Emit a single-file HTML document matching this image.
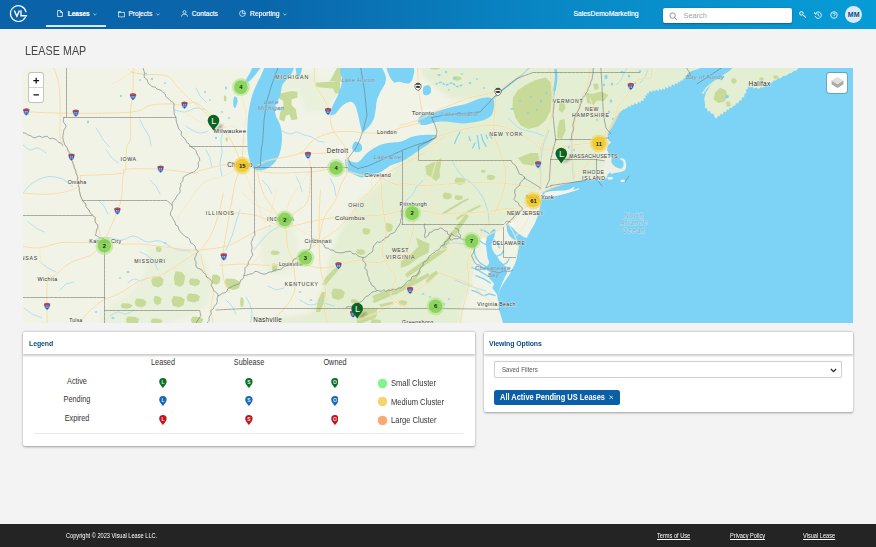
<!DOCTYPE html>
<html>
<head>
<meta charset="utf-8">
<title>Lease Map</title>
<style>
*{box-sizing:border-box;margin:0;padding:0}
html,body{width:876px;height:547px;overflow:hidden;background:#f3f3f3;font-family:"Liberation Sans",sans-serif;color:#333}
.abs{position:absolute}
#hdr{position:absolute;left:0;top:0;width:876px;height:28.5px;background:linear-gradient(90deg,#0a62a8 0%,#0a66ab 30%,#098ac7 66%,#079cd6 100%)}
.nv{position:absolute;top:0;height:28px;line-height:27.5px;color:#fff;font-size:6.6px;white-space:nowrap;-webkit-text-stroke:.18px #fff}
.nv b{font-size:6.5px}
#hdr svg{position:absolute;overflow:visible}
#uline{position:absolute;left:45.5px;top:25.2px;width:60.5px;height:1.8px;background:#d4e8f6}
#search{position:absolute;left:662.8px;top:8.3px;width:129.2px;height:15.1px;background:#fff;border-radius:2px;box-shadow:0 0.5px 1.5px rgba(0,40,90,.45)}
#search span{position:absolute;left:20.8px;top:0;line-height:16.4px;font-size:7.3px;color:#a2a2a2}
#avatar{position:absolute;left:844.9px;top:5.5px;width:17.6px;height:17.6px;border-radius:50%;background:#d9ebf9;color:#0b4a86;font-weight:bold;font-size:7px;line-height:17.6px;text-align:center;letter-spacing:.1px}
#title{position:absolute;left:25.4px;top:43.3px;font-size:13px;line-height:16px;color:#454545;white-space:nowrap;transform:scaleX(.822);transform-origin:0 0;letter-spacing:.1px}
#map{position:absolute;left:23px;top:67.7px;width:830px;height:255px;overflow:hidden;background:#f2f3e9}
#map svg{position:absolute;left:0;top:0}
.card{position:absolute;background:#fff;box-shadow:0 .6px 2.4px rgba(0,0,0,.36);border-radius:2px}
.chead{position:absolute;left:0;top:0;right:0;height:22.3px;border-radius:2px 2px 0 0;box-shadow:0 1.1px 2.2px rgba(0,0,0,.2);background:#fff}
.ctitle{position:absolute;top:0;line-height:23.7px;font-size:7.2px;font-weight:bold;color:#0d4c82;white-space:nowrap;letter-spacing:-.1px;transform:scaleX(.965);transform-origin:0 50%}
.lg{position:absolute;font-size:8.2px;line-height:11.2px;color:#333;white-space:nowrap;transform:translateX(-50%) scaleX(.89)}
.ll{position:absolute;font-size:8.2px;line-height:11.2px;color:#333;white-space:nowrap;transform:scaleX(.925);transform-origin:0 50%}
.dot{position:absolute;width:9px;height:9px;border-radius:50%}
#sel{position:absolute;left:10.4px;top:29.3px;width:347.6px;height:16.9px;border:0.8px solid #cfcfcf;border-radius:2px;background:#fff;box-shadow:0 0 1px rgba(0,0,0,.12)}
#sel span{position:absolute;left:6.4px;top:0;line-height:15.3px;font-size:6.7px;color:#555;transform:scaleX(.92);transform-origin:0 50%}
#chip{position:absolute;left:10.2px;top:57.9px;width:126px;height:15px;border-radius:2.5px;background:#0a5fa6;color:#fff;font-weight:bold;font-size:8.05px;line-height:15px;white-space:nowrap}
#chip span{position:absolute;left:5.4px;top:0;font-size:8.6px;transform:scaleX(.868);transform-origin:0 50%}
#ftr{position:absolute;left:0;top:524px;width:876px;height:23px;background:#242424;color:#fff;font-size:6.6px;line-height:23.6px}
#ftr span{position:absolute;top:0;white-space:nowrap;transform:scaleX(.855);transform-origin:0 50%}
#ftr u{text-decoration:underline;text-underline-offset:0.5px}
</style>
</head>
<body>

<div id="hdr">
  <!-- logo -->
  <svg style="left:8.8px;top:4.1px" width="19" height="19" viewBox="0 0 20 20">
    <path d="M17.2 13.9 A8.3 8.3 0 1 1 17.9 8.2" fill="none" stroke="#fff" stroke-width="1.25" stroke-linecap="round"/>
    <path d="M5.6 6.9 L8.3 12.9 L11 6.9" fill="none" stroke="#fff" stroke-width="1.45" stroke-linejoin="miter"/>
    <path d="M12.6 6.6 V12.4 H19" fill="none" stroke="#fff" stroke-width="1.45"/>
  </svg>
  <div id="uline"></div>
  <!-- Leases -->
  <svg style="left:57.4px;top:10.3px" width="6" height="7" viewBox="0 0 6 7"><path d="M0.6 0.5 H3.5 L5.4 2.4 V6.5 H0.6 Z M3.4 0.6 V2.5 H5.3" fill="none" stroke="#fff" stroke-width=".75" stroke-linejoin="round"/></svg>
  <div class="nv" style="left:67.7px"><b>Leases</b></div>
  <svg style="left:92.9px;top:12.7px" width="4" height="3" viewBox="0 0 4 3"><path d="M0.4 0.6 L2 2.2 L3.6 0.6" fill="none" stroke="#fff" stroke-width=".6"/></svg>
  <!-- Projects -->
  <svg style="left:117.8px;top:10.6px" width="7" height="6.4" viewBox="0 0 7 6.4"><path d="M0.5 0.6 H2.6 L3.3 1.4 H6.5 V5.9 H0.5 Z M0.5 1.5 H3.3" fill="none" stroke="#fff" stroke-width=".7" stroke-linejoin="round"/></svg>
  <div class="nv" style="left:128.4px">Projects</div>
  <svg style="left:156.1px;top:12.7px" width="4" height="3" viewBox="0 0 4 3"><path d="M0.4 0.6 L2 2.2 L3.6 0.6" fill="none" stroke="#fff" stroke-width=".6"/></svg>
  <!-- Contacts -->
  <svg style="left:180.6px;top:10.2px" width="7" height="7" viewBox="0 0 7 7"><circle cx="3.5" cy="2.1" r="1.5" fill="none" stroke="#fff" stroke-width=".7"/><path d="M0.6 6.6 V5.9 A2.2 1.8 0 0 1 2.8 4.3 H4.2 A2.2 1.8 0 0 1 6.4 5.9 V6.6" fill="none" stroke="#fff" stroke-width=".7"/></svg>
  <div class="nv" style="left:191.8px">Contacts</div>
  <!-- Reporting -->
  <svg style="left:238.7px;top:10.4px" width="7" height="7" viewBox="0 0 7 7"><circle cx="3.5" cy="3.5" r="2.9" fill="none" stroke="#fff" stroke-width=".7"/><path d="M3.5 0.6 V3.5 H6.4" fill="none" stroke="#fff" stroke-width=".7"/></svg>
  <div class="nv" style="left:249.7px;transform:scaleX(1.03);transform-origin:0 50%">Reporting</div>
  <svg style="left:282.9px;top:12.7px" width="4" height="3" viewBox="0 0 4 3"><path d="M0.4 0.6 L2 2.2 L3.6 0.6" fill="none" stroke="#fff" stroke-width=".6"/></svg>

  <div class="nv" style="left:573.5px;font-size:6.8px">SalesDemoMarketing</div>
  <div id="search">
    <svg style="left:6.6px;top:3.9px" width="9" height="9" viewBox="0 0 9 9"><circle cx="3.6" cy="3.6" r="2.7" fill="none" stroke="#777" stroke-width=".8"/><path d="M5.6 5.6 L7.7 7.7" stroke="#777" stroke-width=".9" stroke-linecap="round"/></svg>
    <span>Search</span>
  </div>
  <!-- key -->
  <svg style="left:799.4px;top:10.9px" width="8" height="8" viewBox="0 0 8 8"><circle cx="2.4" cy="2.4" r="1.75" fill="none" stroke="#fff" stroke-width="1"/><path d="M3.6 3.6 L6.9 6.9 M5.6 5.8 L6.6 4.8 M4.6 4.8 L5.4 4" stroke="#fff" stroke-width=".9" fill="none"/></svg>
  <!-- history -->
  <svg style="left:814.4px;top:10.6px" width="8.4" height="8.4" viewBox="0 0 8.4 8.4"><path d="M1.4 2.6 A3.2 3.2 0 1 1 1.1 5" fill="none" stroke="#fff" stroke-width=".8"/><path d="M0.4 0.9 L1.1 3.2 L3.3 2.6" fill="none" stroke="#fff" stroke-width=".8"/><path d="M4.3 2.5 V4.4 L5.6 5.2" fill="none" stroke="#fff" stroke-width=".8"/></svg>
  <!-- help -->
  <svg style="left:830.2px;top:10.5px" width="8" height="8" viewBox="0 0 8 8"><circle cx="4" cy="4" r="3.3" fill="none" stroke="#fff" stroke-width=".8"/><path d="M2.9 3.1 A1.15 1.15 0 1 1 4 4.3 V4.9" fill="none" stroke="#fff" stroke-width=".75"/><circle cx="4" cy="5.9" r=".45" fill="#fff"/></svg>
  <div id="avatar">MM</div>
</div>
<div id="title">LEASE MAP</div>
<div id="map">
<svg width="830" height="255" viewBox="23 68 830 255" font-family="Liberation Sans, sans-serif">
<defs><filter id="bl" x="-20%" y="-20%" width="140%" height="140%"><feGaussianBlur stdDeviation="2.2"/></filter><filter id="bl1" x="-20%" y="-20%" width="140%" height="140%"><feGaussianBlur stdDeviation="1"/></filter></defs>
<rect x="23" y="68" width="830" height="255" fill="#f0f3e6"/>
<g filter="url(#bl)"><path d="M420.0 66.0 C492.5 66.0 782.5 22.8 855.0 66.0 C927.5 109.2 946.2 281.8 855.0 325.0 C763.8 368.2 398.5 327.2 308.0 325.0 C217.5 322.8 310.3 316.2 312.0 312.0 C313.7 307.8 316.0 304.7 318.0 300.0 C320.0 295.3 322.5 289.0 324.0 284.0 C325.5 279.0 325.7 275.7 327.0 270.0 C328.3 264.3 329.8 256.3 332.0 250.0 C334.2 243.7 337.2 237.7 340.0 232.0 C342.8 226.3 346.0 221.2 349.0 216.0 C352.0 210.8 353.5 205.8 358.0 201.0 C362.5 196.2 370.7 191.8 376.0 187.5 C381.3 183.2 386.0 179.2 390.0 175.0 C394.0 170.8 395.5 166.0 400.0 162.0 C404.5 158.0 410.9 155.3 417.0 151.0 C423.1 146.7 433.4 139.4 436.7 136.3 C440.0 133.2 436.9 134.7 436.7 132.7 C436.4 130.7 428.6 130.3 435.2 124.3 C441.8 118.3 471.3 100.7 476.0 96.5 C480.7 92.3 467.6 99.1 463.3 99.3 C459.0 99.5 454.2 99.4 450.0 97.7 C445.8 96.0 441.6 91.8 438.3 89.3 C435.0 86.8 432.5 84.9 430.0 82.7 C427.5 80.5 424.4 77.1 423.3 76.0 Z" fill="#e4eed3" /></g>
<rect x="560" y="66" width="300" height="260" fill="#e4eed3"/>
<path d="M402.5 152 L418 146 L440 136 L520 136 L520 224 L402.5 224 Z" fill="#e4eed3"/>
<g filter="url(#bl)"><path d="M148.0 247.8 C156.0 248.2 186.2 247.4 195.8 250.3 C205.4 253.2 203.3 258.6 205.8 265.3 C208.3 272.0 211.7 283.0 210.9 290.5 C210.1 298.0 209.2 304.8 200.8 310.5 C192.4 316.2 176.5 322.6 160.6 325.0 C144.7 327.4 114.2 327.8 105.4 325.0 C96.6 322.2 103.3 313.8 107.9 308.0 C112.5 302.2 126.7 296.4 133.0 290.5 C139.3 284.6 143.5 275.8 145.6 272.9 Z" fill="#e9f0dc" /></g>
<g filter="url(#bl)"><path d="M298.3 87.7 C300.3 84.6 307.8 82.2 315.0 81.0 C322.2 79.8 337.1 78.4 341.7 80.7 C346.2 82.9 344.0 91.2 342.3 94.3 C340.7 97.4 333.9 96.8 331.7 99.3 C329.4 101.9 330.9 107.7 328.7 109.7 C326.4 111.7 322.0 111.3 318.3 111.3 C314.7 111.3 309.2 111.7 306.7 109.7 C304.2 107.7 304.7 103.0 303.3 99.3 C301.9 95.7 296.4 90.7 298.3 87.7 Z" fill="#e9f0dc" /></g>
<g filter="url(#bl)"><path d="M280.0 76.0 C282.2 72.9 289.7 73.2 295.0 72.7 C300.3 72.1 308.3 71.3 311.7 72.7 C315.0 74.1 317.2 78.5 315.0 81.0 C312.8 83.5 303.9 86.0 298.3 87.7 C292.8 89.3 284.7 92.9 281.7 91.0 C278.6 89.1 277.8 79.1 280.0 76.0 Z" fill="#e9f0dc" /></g>
<g filter="url(#bl)"><path d="M262.0 232.0 C266.3 225.0 286.0 223.0 292.0 228.0 C298.0 233.0 299.0 254.7 298.0 262.0 C297.0 269.3 291.3 270.7 286.0 272.0 C280.7 273.3 270.0 276.7 266.0 270.0 C262.0 263.3 257.7 239.0 262.0 232.0 Z" fill="#e9f0dc" /></g>
<g filter="url(#bl)"><path d="M549.0 186.0 C547.7 186.9 544.0 188.9 541.0 191.6 C538.0 194.3 534.5 198.6 531.0 202.0 C527.5 205.4 524.0 208.6 520.0 212.0 C516.0 215.4 511.5 219.3 507.0 222.5 C502.5 225.7 497.2 227.6 493.0 231.0 C488.8 234.4 485.0 238.2 482.0 243.0 C479.0 247.8 476.8 253.3 475.0 260.0 C473.2 266.7 473.0 272.2 471.0 283.0 C469.0 293.8 453.2 318.0 463.0 325.0 C472.8 332.0 513.8 337.5 530.0 325.0 C546.2 312.5 555.0 270.8 560.0 250.0 C565.0 229.2 555.7 209.7 560.0 200.0 C564.3 190.3 581.7 194.7 586.0 192.0 C590.3 189.3 586.0 185.3 586.0 184.0 Z" fill="#f0f3e6" /><path d="M600.0 150.0 C604.3 148.0 625.0 144.2 630.0 150.0 C635.0 155.8 635.7 179.2 630.0 185.0 C624.3 190.8 601.3 187.2 596.0 185.0 C590.7 182.8 596.7 175.8 598.0 172.0 C599.3 168.2 603.7 165.7 604.0 162.0 C604.3 158.3 595.7 152.0 600.0 150.0 Z" fill="#eef1e2" /></g>
<ellipse cx="536" cy="198" rx="9" ry="6" fill="#f7f7f3" filter="url(#bl1)" opacity=".9"/>
<ellipse cx="509" cy="225" rx="6.5" ry="4.5" fill="#f7f7f3" filter="url(#bl1)" opacity=".9"/>
<ellipse cx="483" cy="241" rx="5" ry="4" fill="#f7f7f3" filter="url(#bl1)" opacity=".9"/>
<ellipse cx="473" cy="247" rx="5.5" ry="5" fill="#f7f7f3" filter="url(#bl1)" opacity=".9"/>
<ellipse cx="600" cy="145" rx="7" ry="6" fill="#f7f7f3" filter="url(#bl1)" opacity=".9"/>
<ellipse cx="242" cy="163" rx="9" ry="8" fill="#f7f7f3" filter="url(#bl1)" opacity=".9"/>
<ellipse cx="244" cy="132" rx="5" ry="5" fill="#f7f7f3" filter="url(#bl1)" opacity=".9"/>
<ellipse cx="342" cy="151" rx="7" ry="6" fill="#f7f7f3" filter="url(#bl1)" opacity=".9"/>
<ellipse cx="425" cy="113" rx="7" ry="4" fill="#f7f7f3" filter="url(#bl1)" opacity=".9"/>
<ellipse cx="371" cy="176" rx="5" ry="3" fill="#f7f7f3" filter="url(#bl1)" opacity=".9"/>
<ellipse cx="411" cy="213" rx="4.5" ry="3.5" fill="#f7f7f3" filter="url(#bl1)" opacity=".9"/>
<ellipse cx="558" cy="193" rx="13" ry="2.6" fill="#f7f7f3" filter="url(#bl1)" opacity=".9"/>
<path d="M280.0 93.5 L291.7 91.0 L297.5 91.8 L297.5 97.7 L291.7 99.3 L291.7 105.2 L295.8 109.3 L297.5 119.3 L291.7 120.2 L289.2 114.3 L285.8 116.0 L284.2 121.8 L279.2 119.3 L280.0 112.7 L283.3 106.0 L283.3 101.0 L279.2 98.5 Z" fill="#c8da97" />
<path d="M315.8 82.7 L340.0 81.0 L340.0 89.3 L342.5 91.0 L341.7 93.5 L335.0 93.5 L333.3 88.5 L323.3 87.7 L315.8 86.8 Z" fill="#c8da97" />
<path d="M330.0 81.0 L338.0 66.0 L348.0 66.0 L341.0 78.0 L341.0 81.0 Z" fill="#c8da97" />
<path d="M518.0 90.1 L525.6 85.1 L535.6 80.1 L545.7 77.6 L550.7 82.6 L551.9 95.1 L550.7 110.2 L545.7 120.2 L538.1 126.5 L528.1 129.0 L520.5 125.3 L515.5 117.7 L512.5 107.7 L513.0 97.6 Z" fill="#c8da97" />
<path d="M518.0 157.9 L530.6 152.9 L538.1 152.9 L539.4 160.4 L533.1 165.5 L523.1 164.2 Z" fill="#c8da97" />
<path d="M559.5 120.2 L564.5 119.0 L565.7 130.3 L562.0 139.1 L557.0 137.8 L557.7 127.8 Z" fill="#c8da97" />
<path d="M559.4 102.6 L564.0 101.0 L565.6 108.0 L562.0 113.0 L558.6 110.0 Z" fill="#c8da97" />
<path d="M585.8 92.6 L592.0 94.0 L600.9 91.4 L608.4 95.1 L604.0 101.0 L597.0 100.5 L593.4 105.2 L587.1 102.7 Z" fill="#c8da97" />
<path d="M593.0 84.0 L598.0 83.4 L599.0 89.0 L594.6 90.0 Z" fill="#c8da97" />
<path d="M425.1 166.2 L436.1 160.7 L441.6 157.9 L440.9 164.8 L439.5 171.6 L440.2 177.1 L436.1 181.2 L430.6 177.1 L426.5 174.4 Z" fill="#c8da97" />
<path d="M456.2 177.5 L462.3 177.9 L465.6 179.8 L464.5 183.5 L460.6 185.0 L455.6 183.9 L454.5 180.5 Z" fill="#c8da97" />
<path d="M487.9 174.7 L492.6 175.0 L495.2 176.4 L494.4 179.2 L491.3 180.3 L487.4 179.5 L486.6 176.9 Z" fill="#c8da97" />
<path d="M481.6 169.8 L484.3 169.9 L485.8 170.7 L485.3 172.2 L483.6 172.8 L481.4 172.4 L480.9 171.0 Z" fill="#c8da97" />
<path d="M444.1 192.6 L449.2 192.9 L452.0 194.7 L451.1 198.2 L447.8 199.6 L443.6 198.6 L442.7 195.4 Z" fill="#c8da97" />
<path d="M455.7 195.3 L460.4 195.5 L463.0 196.8 L462.2 199.2 L459.1 200.2 L455.2 199.5 L454.4 197.3 Z" fill="#c8da97" />
<path d="M153.2 276.0 L160.0 276.6 L163.7 279.4 L162.5 285.1 L158.1 287.4 L152.5 285.7 L151.3 280.6 Z" fill="#c8da97" />
<path d="M175.5 271.3 L181.7 272.1 L185.1 276.0 L183.9 284.0 L180.0 287.1 L174.9 284.7 L173.8 277.6 Z" fill="#c8da97" />
<path d="M190.6 278.3 L196.8 278.7 L200.2 280.7 L199.1 284.7 L195.1 286.3 L190.1 285.1 L188.9 281.5 Z" fill="#c8da97" />
<path d="M173.5 296.1 L180.9 296.7 L184.9 299.5 L183.6 305.1 L178.9 307.4 L172.8 305.7 L171.4 300.6 Z" fill="#c8da97" />
<path d="M188.5 293.5 L196.0 293.9 L200.0 296.2 L198.7 300.7 L193.9 302.5 L187.8 301.1 L186.5 297.1 Z" fill="#c8da97" />
<path d="M154.7 296.0 L159.1 296.4 L161.6 298.7 L160.7 303.2 L157.9 305.0 L154.3 303.6 L153.4 299.6 Z" fill="#c8da97" />
<path d="M136.4 298.5 L142.8 298.9 L146.3 301.2 L145.2 305.7 L141.1 307.5 L135.8 306.1 L134.7 302.1 Z" fill="#c8da97" />
<path d="M122.4 303.3 L128.8 303.6 L132.3 304.9 L131.2 307.6 L127.1 308.7 L121.8 307.9 L120.7 305.5 Z" fill="#c8da97" />
<path d="M212.8 274.6 L217.8 275.1 L220.5 277.6 L219.6 282.8 L216.4 284.8 L212.4 283.3 L211.5 278.7 Z" fill="#c8da97" />
<path d="M226.5 278.6 L234.7 279.0 L239.2 281.5 L237.7 286.5 L232.4 288.4 L225.7 287.0 L224.2 282.5 Z" fill="#c8da97" />
<path d="M156.8 246.1 L160.0 246.4 L161.7 248.0 L161.1 251.2 L159.1 252.4 L156.5 251.5 L155.9 248.6 Z" fill="#c8da97" />
<path d="M127.8 316.4 L135.2 316.9 L139.2 318.9 L137.9 322.9 L133.2 324.6 L127.1 323.3 L125.8 319.7 Z" fill="#c8da97" />
<path d="M152.4 318.4 L158.8 318.7 L162.3 320.2 L161.2 323.4 L157.1 324.6 L151.8 323.7 L150.7 320.9 Z" fill="#c8da97" />
<path d="M192.6 316.4 L199.5 316.9 L203.3 318.9 L202.0 322.9 L197.6 324.6 L192.0 323.3 L190.7 319.7 Z" fill="#c8da97" />
<path d="M228.0 279.8 L236.1 280.3 L240.5 282.8 L239.0 287.9 L233.9 289.9 L227.3 288.4 L225.8 283.8 Z" fill="#c8da97" />
<path d="M272.1 250.6 L277.1 250.8 L279.8 251.9 L278.9 254.2 L275.7 255.1 L271.6 254.4 L270.7 252.4 Z" fill="#c8da97" />
<path d="M272.7 263.3 L275.8 263.8 L277.5 266.0 L276.9 270.6 L274.9 272.4 L272.4 271.0 L271.8 266.9 Z" fill="#c8da97" />
<path d="M240.7 297.3 L242.7 297.8 L243.7 300.3 L243.4 305.4 L242.1 307.4 L240.5 305.9 L240.2 301.3 Z" fill="#c8da97" />
<path d="M333.3 288.5 L340.8 289.1 L344.8 291.9 L343.5 297.6 L338.7 299.9 L332.6 298.2 L331.3 293.1 Z" fill="#c8da97" />
<path d="M322.0 284.0 L326.0 277.0 L333.0 270.0 L338.0 266.0 L340.0 268.5 L335.0 274.0 L329.0 281.0 L325.0 286.0 Z" fill="#c8da97" />
<path d="M318.0 300.0 L322.0 292.0 L326.0 292.0 L324.0 302.0 L320.0 312.0 L316.0 312.0 Z" fill="#c8da97" />
<path d="M363.5 228.1 L367.9 228.4 L370.3 230.1 L369.5 233.5 L366.7 234.8 L363.1 233.8 L362.3 230.8 Z" fill="#c8da97" />
<path d="M357.5 249.3 L362.5 249.6 L365.2 251.0 L364.3 253.9 L361.1 255.0 L357.0 254.1 L356.1 251.6 Z" fill="#c8da97" />
<path d="M386.1 223.1 L390.5 223.6 L392.9 225.8 L392.1 230.4 L389.3 232.2 L385.7 230.8 L384.9 226.7 Z" fill="#c8da97" />
<path d="M415.9 237.7 L429.7 244.0 L428.4 252.8 L418.4 257.8 L408.4 265.3 L400.8 267.9 L400.8 261.6 L410.9 254.0 L418.4 246.5 Z" fill="#c8da97" />
<path d="M405.0 274.0 L416.0 266.0 L428.0 258.0 L440.0 250.0 L446.0 246.0 L448.0 249.0 L440.0 255.0 L430.0 262.0 L418.0 270.0 L407.0 277.5 Z" fill="#c8da97" />
<path d="M393.0 291.5 L404.0 285.0 L416.0 279.5 L428.0 273.0 L430.0 276.0 L418.0 283.0 L406.0 289.0 L395.0 295.0 Z" fill="#c8da97" />
<path d="M372.0 296.0 L382.0 292.0 L392.0 288.0 L394.0 291.0 L384.0 296.0 L374.0 300.0 Z" fill="#c8da97" />
<path d="M452.0 232.0 L458.0 224.0 L466.0 214.0 L469.0 216.0 L462.0 226.0 L456.0 235.0 Z" fill="#c8da97" />
<path d="M441.0 246.0 L447.0 238.0 L452.0 231.0 L455.0 233.0 L450.0 241.0 L444.0 249.0 Z" fill="#c8da97" />
<path d="M363.9 309.9 L372.6 310.4 L377.3 312.9 L375.7 318.0 L370.2 320.0 L363.1 318.5 L361.5 313.9 Z" fill="#c8da97" />
<path d="M372.2 319.3 L378.2 319.6 L381.4 320.9 L380.3 323.6 L376.5 324.7 L371.7 323.9 L370.6 321.5 Z" fill="#c8da97" />
<path d="M399.9 300.3 L404.8 300.6 L407.5 301.9 L406.6 304.6 L403.4 305.7 L399.4 304.9 L398.5 302.5 Z" fill="#c8da97" />
<path d="M372.7 300.4 L383.9 295.6 L390.3 292.4 L403.1 287.6 L409.5 281.2 L415.9 274.8 L419.1 270.0 L421.5 271.6 L417.0 278.0 L411.0 284.6 L404.0 290.0 L392.0 295.6 L385.0 298.6 L374.0 303.0 Z" fill="#c8da97" />
<path d="M425.5 281.2 L431.9 273.2 L436.7 270.8 L438.3 273.2 L431.9 279.6 L428.7 283.6 Z" fill="#c8da97" />
<path d="M379.1 304.4 L392.7 301.6 L393.4 304.0 L381.0 307.0 Z" fill="#c8da97" />
<path d="M356.8 308.4 L377.5 308.4 L375.9 314.7 L367.9 321.1 L356.8 325.0 Z" fill="#c8da97" />
<path d="M351.9 299.0 L355.8 299.3 L358.0 300.3 L357.3 302.5 L354.8 303.4 L351.5 302.7 L350.8 300.8 Z" fill="#c8da97" />
<path d="M442.0 213.0 L450.0 208.0 L460.0 202.0 L468.0 198.0 L469.0 199.6 L461.0 204.0 L451.0 210.0 L443.0 215.0 Z" fill="#c8da97" />
<path d="M456.0 218.0 L464.0 213.0 L472.0 208.6 L480.0 205.0 L481.0 206.6 L473.0 210.6 L465.0 215.0 L457.0 220.0 Z" fill="#c8da97" />
<path d="M732.1 78.3 L735.1 78.6 L736.7 79.9 L736.2 82.6 L734.3 83.7 L731.8 82.9 L731.3 80.5 Z" fill="#c8da97" />
<path d="M715.0 92.7 L720.0 87.7 L725.8 90.2 L727.5 96.8 L724.2 101.8 L718.3 103.0 L713.7 99.3 Z" fill="#c8da97" />
<path d="M725.8 101.8 L730.0 101.8 L730.8 106.0 L727.0 106.8 Z" fill="#c8da97" />
<path d="M759.9 77.2 L762.4 77.4 L763.8 78.4 L763.3 80.5 L761.7 81.3 L759.7 80.7 L759.2 78.8 Z" fill="#c8da97" />
<path d="M774.1 75.2 L777.1 75.4 L778.7 76.4 L778.2 78.5 L776.3 79.3 L773.8 78.7 L773.3 76.8 Z" fill="#c8da97" />
<path d="M225.9 137.2 L227.2 137.5 L227.9 138.6 L227.6 140.8 L226.8 141.8 L225.8 141.1 L225.5 139.1 Z" fill="#c8da97" />
<path d="M224.2 95.3 L225.6 95.7 L226.4 97.2 L226.2 100.4 L225.2 101.7 L224.0 100.7 L223.8 97.9 Z" fill="#c8da97" />
<path d="M431.2 66.2 L437.2 66.4 L440.4 67.3 L439.3 69.1 L435.5 69.8 L430.7 69.3 L429.6 67.6 Z" fill="#c8da97" />
<path d="M453.9 76.2 L458.8 76.5 L461.5 77.6 L460.6 79.8 L457.4 80.8 L453.4 80.1 L452.5 78.0 Z" fill="#c8da97" />
<path d="M23.0 145.0 C24.2 145.8 27.5 149.5 30.0 150.0 C32.5 150.5 35.3 147.5 38.0 148.0 C40.7 148.5 44.7 152.2 46.0 153.0" fill="none" stroke="#9dd9f5" stroke-width="0.75" stroke-linejoin="round" stroke-linecap="round" />
<path d="M96.0 128.0 C96.7 129.0 98.7 131.8 100.0 134.0 C101.3 136.2 102.3 138.8 104.0 141.0 C105.7 143.2 109.0 146.0 110.0 147.0" fill="none" stroke="#9dd9f5" stroke-width="0.75" stroke-linejoin="round" stroke-linecap="round" />
<path d="M106.0 150.0 L112.0 158.0 L118.0 163.0" fill="none" stroke="#9dd9f5" stroke-width="0.75" stroke-linejoin="round" stroke-linecap="round" />
<path d="M140.0 120.0 C140.7 121.3 142.5 125.3 144.0 128.0 C145.5 130.7 147.8 133.0 149.0 136.0 C150.2 139.0 150.7 144.3 151.0 146.0" fill="none" stroke="#9dd9f5" stroke-width="0.75" stroke-linejoin="round" stroke-linecap="round" />
<path d="M150.0 180.0 L156.0 186.0 L160.0 194.0" fill="none" stroke="#9dd9f5" stroke-width="0.75" stroke-linejoin="round" stroke-linecap="round" />
<path d="M98.0 200.0 L104.0 206.0 L108.0 214.0" fill="none" stroke="#9dd9f5" stroke-width="0.75" stroke-linejoin="round" stroke-linecap="round" />
<path d="M28.0 222.0 L36.0 228.0 L44.0 232.0" fill="none" stroke="#9dd9f5" stroke-width="0.75" stroke-linejoin="round" stroke-linecap="round" />
<path d="M40.0 262.0 L48.0 268.0 L56.0 272.0" fill="none" stroke="#9dd9f5" stroke-width="0.75" stroke-linejoin="round" stroke-linecap="round" />
<path d="M60.0 290.0 L66.0 284.0 L74.0 282.0" fill="none" stroke="#9dd9f5" stroke-width="0.75" stroke-linejoin="round" stroke-linecap="round" />
<path d="M24.0 308.0 L32.0 314.0 L42.0 318.0" fill="none" stroke="#9dd9f5" stroke-width="0.75" stroke-linejoin="round" stroke-linecap="round" />
<path d="M196.0 88.0 L200.0 96.0 L206.0 102.0" fill="none" stroke="#9dd9f5" stroke-width="0.75" stroke-linejoin="round" stroke-linecap="round" />
<path d="M186.0 126.0 C187.0 126.7 189.7 128.8 192.0 130.0 C194.3 131.2 197.3 132.8 200.0 133.0 C202.7 133.2 206.7 131.3 208.0 131.0" fill="none" stroke="#9dd9f5" stroke-width="0.75" stroke-linejoin="round" stroke-linecap="round" />
<path d="M206.0 150.0 L210.0 158.0 L212.0 168.0" fill="none" stroke="#9dd9f5" stroke-width="0.75" stroke-linejoin="round" stroke-linecap="round" />
<path d="M262.0 180.0 L268.0 186.0 L272.0 194.0" fill="none" stroke="#9dd9f5" stroke-width="0.75" stroke-linejoin="round" stroke-linecap="round" />
<path d="M296.0 176.0 L300.0 184.0 L302.0 192.0" fill="none" stroke="#9dd9f5" stroke-width="0.75" stroke-linejoin="round" stroke-linecap="round" />
<path d="M330.0 178.0 L334.0 186.0 L336.0 196.0" fill="none" stroke="#9dd9f5" stroke-width="0.75" stroke-linejoin="round" stroke-linecap="round" />
<path d="M268.0 286.0 L276.0 290.0 L284.0 288.0" fill="none" stroke="#9dd9f5" stroke-width="0.75" stroke-linejoin="round" stroke-linecap="round" />
<path d="M226.0 300.0 L232.0 306.0 L236.0 314.0" fill="none" stroke="#9dd9f5" stroke-width="0.75" stroke-linejoin="round" stroke-linecap="round" />
<path d="M140.0 252.0 C141.3 252.7 145.7 254.3 148.0 256.0 C150.3 257.7 152.3 259.7 154.0 262.0 C155.7 264.3 157.3 268.7 158.0 270.0" fill="none" stroke="#9dd9f5" stroke-width="0.75" stroke-linejoin="round" stroke-linecap="round" />
<path d="M23.0 193.0 C24.6 191.3 28.5 185.7 32.6 183.0 C36.7 180.3 42.6 177.3 47.6 176.7 C52.6 176.1 58.5 177.5 62.7 179.2 C66.9 180.9 71.0 185.5 72.7 186.8" fill="none" stroke="#9dd9f5" stroke-width="0.75" stroke-linejoin="round" stroke-linecap="round" />
<path d="M90.0 243.0 C91.7 242.2 96.5 238.8 100.0 238.0 C103.5 237.2 107.3 237.7 111.0 238.0 C114.7 238.3 118.2 240.3 122.0 240.0 C125.8 239.7 129.8 235.7 134.0 236.0 C138.2 236.3 142.7 241.2 147.0 242.0 C151.3 242.8 155.3 239.8 160.0 241.0 C164.7 242.2 170.0 247.3 175.0 249.0 C180.0 250.7 187.5 250.7 190.0 251.0" fill="none" stroke="#9dd9f5" stroke-width="0.75" stroke-linejoin="round" stroke-linecap="round" />
<path d="M175.0 110.0 C176.7 110.3 181.5 112.3 185.0 112.0 C188.5 111.7 192.5 108.3 196.0 108.0 C199.5 107.7 204.3 109.7 206.0 110.0" fill="none" stroke="#9dd9f5" stroke-width="0.75" stroke-linejoin="round" stroke-linecap="round" />
<path d="M219.0 127.0 C219.7 127.7 222.7 128.8 223.0 131.0 C223.3 133.2 221.2 136.5 221.0 140.0 C220.8 143.5 222.2 148.0 222.0 152.0 C221.8 156.0 220.0 160.0 220.0 164.0 C220.0 168.0 221.7 174.0 222.0 176.0" fill="none" stroke="#9dd9f5" stroke-width="0.75" stroke-linejoin="round" stroke-linecap="round" />
<path d="M240.0 210.0 C239.3 212.0 237.3 217.7 236.0 222.0 C234.7 226.3 233.7 231.3 232.0 236.0 C230.3 240.7 227.0 247.7 226.0 250.0" fill="none" stroke="#9dd9f5" stroke-width="0.75" stroke-linejoin="round" stroke-linecap="round" />
<path d="M282.0 131.0 C283.3 131.5 287.5 133.8 290.0 134.0 C292.5 134.2 294.7 131.8 297.0 132.0 C299.3 132.2 301.5 134.2 304.0 135.0 C306.5 135.8 309.7 136.0 312.0 137.0 C314.3 138.0 316.0 140.2 318.0 141.0 C320.0 141.8 323.0 141.8 324.0 142.0" fill="none" stroke="#9dd9f5" stroke-width="0.75" stroke-linejoin="round" stroke-linecap="round" />
<path d="M254.0 250.0 C255.3 248.3 259.3 243.0 262.0 240.0 C264.7 237.0 267.0 234.3 270.0 232.0 C273.0 229.7 278.3 227.0 280.0 226.0" fill="none" stroke="#9dd9f5" stroke-width="0.75" stroke-linejoin="round" stroke-linecap="round" />
<path d="M452.0 160.0 C452.7 161.3 454.3 165.3 456.0 168.0 C457.7 170.7 459.7 173.7 462.0 176.0 C464.3 178.3 467.3 179.7 470.0 182.0 C472.7 184.3 475.7 187.0 478.0 190.0 C480.3 193.0 482.3 196.3 484.0 200.0 C485.7 203.7 487.2 208.0 488.0 212.0 C488.8 216.0 488.8 222.0 489.0 224.0" fill="none" stroke="#9dd9f5" stroke-width="0.75" stroke-linejoin="round" stroke-linecap="round" />
<path d="M540.0 190.0 C540.2 188.3 540.9 183.7 541.0 180.0 C541.1 176.3 540.4 172.0 540.5 168.0 C540.6 164.0 541.1 159.7 541.5 156.0 C541.9 152.3 542.2 149.0 543.0 146.0 C543.8 143.0 545.0 140.7 546.0 138.0 C547.0 135.3 548.5 131.3 549.0 130.0" fill="none" stroke="#9dd9f5" stroke-width="0.75" stroke-linejoin="round" stroke-linecap="round" />
<path d="M571.0 140.0 C571.1 142.0 571.4 147.8 571.6 152.0 C571.9 156.2 572.2 160.3 572.5 165.0 C572.8 169.7 573.3 177.5 573.5 180.0" fill="none" stroke="#9dd9f5" stroke-width="0.75" stroke-linejoin="round" stroke-linecap="round" />
<path d="M508.0 118.0 C508.7 118.7 510.2 120.3 512.0 122.0 C513.8 123.7 516.3 126.5 519.0 128.0 C521.7 129.5 525.2 130.2 528.0 131.0 C530.8 131.8 533.3 132.2 536.0 133.0 C538.7 133.8 542.7 135.5 544.0 136.0" fill="none" stroke="#9dd9f5" stroke-width="0.75" stroke-linejoin="round" stroke-linecap="round" />
<path d="M402.0 205.0 C403.0 204.0 406.0 201.2 408.0 199.0 C410.0 196.8 412.5 194.2 414.0 192.0 C415.5 189.8 415.3 188.0 417.0 186.0 C418.7 184.0 422.8 181.0 424.0 180.0" fill="none" stroke="#9dd9f5" stroke-width="0.75" stroke-linejoin="round" stroke-linecap="round" />
<path d="M440.0 246.0 C442.0 245.5 448.2 243.3 452.0 243.0 C455.8 242.7 459.7 243.3 463.0 244.0 C466.3 244.7 470.5 246.5 472.0 247.0" fill="none" stroke="#9dd9f5" stroke-width="0.75" stroke-linejoin="round" stroke-linecap="round" />
<path d="M455.0 280.0 C456.7 280.7 461.5 282.7 465.0 284.0 C468.5 285.3 472.5 286.8 476.0 288.0 C479.5 289.2 484.3 290.5 486.0 291.0" fill="none" stroke="#9dd9f5" stroke-width="0.75" stroke-linejoin="round" stroke-linecap="round" />
<path d="M300.0 300.0 C301.7 300.8 306.3 304.5 310.0 305.0 C313.7 305.5 318.0 302.8 322.0 303.0 C326.0 303.2 332.0 305.5 334.0 306.0" fill="none" stroke="#9dd9f5" stroke-width="0.75" stroke-linejoin="round" stroke-linecap="round" />
<path d="M246.0 297.0 C246.7 298.3 249.0 302.2 250.0 305.0 C251.0 307.8 252.0 310.7 252.0 314.0 C252.0 317.3 250.3 323.2 250.0 325.0" fill="none" stroke="#9dd9f5" stroke-width="0.75" stroke-linejoin="round" stroke-linecap="round" />
<path d="M128.0 283.0 C129.0 282.3 131.8 279.3 134.0 279.0 C136.2 278.7 138.8 281.2 141.0 281.0 C143.2 280.8 146.0 278.5 147.0 278.0" fill="none" stroke="#9dd9f5" stroke-width="0.75" stroke-linejoin="round" stroke-linecap="round" />
<path d="M110.0 316.0 C111.3 315.3 115.3 312.3 118.0 312.0 C120.7 311.7 123.3 314.3 126.0 314.0 C128.7 313.7 132.7 310.7 134.0 310.0" fill="none" stroke="#9dd9f5" stroke-width="0.75" stroke-linejoin="round" stroke-linecap="round" />
<path d="M616.0 85.0 C616.8 84.2 619.7 82.0 621.0 80.0 C622.3 78.0 623.0 75.0 624.0 73.0 C625.0 71.0 626.5 68.8 627.0 68.0" fill="none" stroke="#9dd9f5" stroke-width="0.75" stroke-linejoin="round" stroke-linecap="round" />
<path d="M640.0 83.0 L645.0 77.0 L648.0 70.0" fill="none" stroke="#9dd9f5" stroke-width="0.75" stroke-linejoin="round" stroke-linecap="round" />
<path d="M703.3 66.0 L698.3 69.0 L691.7 71.0 L687.4 73.8 L686.6 76.0 L685.2 75.4 L685.6 78.2 L683.2 78.4 L683.4 80.6 L680.6 80.4 L680.2 82.6 L678.0 81.6 L677.4 84.0 L675.0 83.2 L674.4 85.6 L672.0 84.6 L671.0 87.2 L668.6 85.8 L668.0 88.4 L665.6 87.0 L664.6 89.8 L662.4 88.2 L661.6 90.6 L659.2 88.6 L658.4 91.2 L656.0 89.4 L655.2 91.8 L652.8 90.0 L651.8 92.6 L649.6 90.6 L648.6 93.4 L646.6 93.0 L647.2 95.6 L645.0 95.6 L645.6 98.2 L643.4 98.6 L643.6 101.0 L641.0 100.6 L640.4 103.0 L638.0 101.8 L637.0 104.4 L634.6 103.0 L633.6 105.6 L631.4 104.6 L630.2 107.0 L628.2 106.2 L626.7 108.2 L623.3 109.6 L618.6 113.5 L615.2 117.7 L612.0 122.7 L609.6 129.3 L607.6 134.3 L608.0 139.3 L611.2 142.7 L608.2 145.0 L607.0 149.2 L609.0 154.4 L611.6 158.0 L611.2 162.0 L612.6 164.6 L615.6 167.0 L619.0 168.6 L622.0 168.4 L623.4 166.0 L623.6 162.6 L622.4 160.4 L620.0 159.6 L620.4 158.2 L623.2 158.4 L625.4 160.6 L626.2 164.6 L626.0 168.6 L624.0 171.0 L619.6 172.2 L614.6 172.9 L611.8 174.0 L609.4 172.6 L607.8 174.6 L606.6 177.0 L604.6 178.9 L602.8 180.0 L598.4 180.4 L596.4 177.5 L594.6 179.4 L590.0 179.6 L585.0 179.8 L581.7 180.4 L576.7 181.4 L570.0 182.8 L563.3 184.6 L556.7 186.6 L550.5 188.6 L545.5 190.6 L542.8 192.6 L541.6 195.5 L541.2 199.2 L539.6 202.0 L540.6 205.0 L539.4 210.0 L537.6 216.5 L534.6 224.0 L531.0 230.0 L528.0 235.4 L526.6 238.2 L524.0 239.8 L521.4 241.6 L519.2 245.6 L517.6 252.0 L516.7 258.7 L515.0 263.7 L512.5 268.7 L510.0 273.7 L506.7 278.7 L503.3 283.7 L500.4 288.7 L498.6 293.0 L499.2 298.6 L498.4 305.3 L499.2 310.3 L500.8 315.3 L503.6 325.0 L855.0 325.0 L855.0 66.0 Z" fill="#7dd3f6" />
<path d="M265.0 66.0 C264.3 67.7 262.2 73.0 260.8 76.0 C259.4 79.0 258.1 81.2 256.7 84.3 C255.3 87.3 253.6 91.0 252.5 94.3 C251.4 97.6 250.7 101.0 250.0 104.3 C249.3 107.6 248.7 111.0 248.3 114.3 C247.9 117.6 247.7 121.0 247.5 124.3 C247.3 127.6 247.2 131.0 247.2 134.3 C247.2 137.6 247.4 141.5 247.5 144.3 C247.6 147.1 247.5 148.4 247.8 151.0 C248.2 153.6 248.9 157.4 249.6 160.0 C250.3 162.6 251.1 164.9 252.0 166.5 C252.9 168.1 253.6 168.9 255.0 169.6 C256.4 170.3 258.4 170.7 260.3 170.6 C262.2 170.5 264.6 169.7 266.5 168.8 C268.4 167.9 270.3 166.7 272.0 165.2 C273.7 163.7 275.2 161.9 276.5 160.0 C277.8 158.1 278.8 155.8 279.6 153.5 C280.4 151.2 281.0 148.6 281.4 146.0 C281.8 143.4 282.0 140.7 282.0 138.0 C282.0 135.3 281.8 132.5 281.4 130.0 C281.0 127.5 280.2 125.2 279.4 123.0 C278.6 120.8 277.1 118.9 276.4 117.0 C275.7 115.1 275.1 113.4 275.0 111.5 C274.9 109.6 275.1 107.3 275.6 105.5 C276.1 103.7 277.2 102.1 278.0 100.5 C278.8 98.9 279.7 97.8 280.2 96.0 C280.7 94.2 280.8 91.9 281.2 90.0 C281.6 88.1 281.8 86.1 282.6 84.5 C283.4 82.9 284.6 81.9 285.8 80.5 C287.0 79.1 288.5 77.4 289.6 76.0 C290.7 74.6 291.7 73.7 292.5 72.0 C293.3 70.3 294.2 67.0 294.5 66.0 Z" fill="#7dd3f6" />
<path d="M253.0 66.0 C254.4 66.0 260.4 65.0 261.2 66.0 C261.9 67.0 258.8 70.2 257.5 72.0 C256.2 73.8 254.8 75.5 253.5 77.0 C252.2 78.5 250.8 79.9 249.5 81.0 C248.2 82.1 246.8 83.3 246.0 83.6 C245.2 83.9 244.5 83.4 244.6 82.6 C244.7 81.8 245.8 80.0 246.6 78.5 C247.4 77.0 249.1 74.3 249.6 73.5 Z" fill="#7dd3f6" />
<path d="M234.6 96.6 C235.1 96.4 236.3 96.9 236.8 97.6 C237.3 98.3 237.6 99.8 237.6 101.0 C237.6 102.2 237.0 103.9 236.6 105.0 C236.2 106.1 235.7 107.5 235.2 107.8 C234.7 108.1 233.9 107.6 233.6 106.6 C233.3 105.6 233.2 103.3 233.2 102.0 C233.2 100.7 233.4 99.5 233.6 98.6 C233.8 97.7 234.1 96.8 234.6 96.6 Z" fill="#7dd3f6" />
<path d="M295.2 66.0 C296.3 66.0 301.0 65.0 302.0 66.0 C303.0 67.0 301.7 70.2 301.2 72.0 C300.7 73.8 299.7 76.3 299.0 77.0 C298.3 77.7 297.5 77.2 297.0 76.4 C296.5 75.6 296.3 72.7 296.2 72.0 Z" fill="#7dd3f6" />
<path d="M341.3 66.0 C341.1 67.1 339.8 70.7 340.0 72.7 C340.2 74.6 342.1 75.7 342.3 77.7 C342.6 79.6 342.2 82.1 341.7 84.3 C341.2 86.6 340.0 89.1 339.3 91.0 C338.7 92.9 338.4 94.3 337.7 96.0 C336.9 97.7 335.9 99.1 335.0 101.0 C334.1 102.9 332.8 105.7 332.0 107.3 C331.2 108.9 330.7 109.7 330.0 110.7 C329.3 111.6 328.2 112.3 328.0 113.0 C327.8 113.7 328.1 114.3 328.7 114.7 C329.3 115.1 330.6 115.4 331.7 115.3 C332.7 115.2 333.9 114.8 335.0 114.0 C336.1 113.2 336.8 112.0 338.0 110.7 C339.2 109.3 340.6 107.3 342.0 106.0 C343.4 104.7 345.1 103.6 346.7 102.8 C348.2 102.1 350.0 101.4 351.3 101.7 C352.7 102.0 353.7 103.2 354.7 104.7 C355.6 106.2 356.3 108.5 357.0 110.7 C357.7 112.8 358.1 115.2 358.7 117.7 C359.2 120.1 359.8 123.2 360.3 125.3 C360.8 127.5 361.3 129.6 361.7 130.7 C362.1 131.8 362.3 131.9 362.7 132.0 C363.1 132.1 363.3 131.9 364.0 131.3 C364.7 130.8 365.9 129.8 367.0 128.7 C368.1 127.5 369.5 126.1 370.7 124.3 C371.8 122.6 373.2 120.4 374.0 118.0 C374.8 115.6 375.2 112.4 375.7 109.7 C376.1 106.9 376.1 103.8 376.7 101.3 C377.2 98.8 378.2 96.6 379.0 94.7 C379.8 92.7 380.7 91.2 381.7 89.5 C382.6 87.8 383.9 86.3 384.7 84.5 C385.4 82.7 386.0 80.5 386.0 78.7 C386.0 76.8 385.3 75.1 384.7 73.3 C384.0 71.6 382.6 69.2 382.0 68.0 C381.4 66.8 381.2 66.3 381.0 66.0 Z" fill="#7dd3f6" />
<path d="M386.0 66.0 C386.1 66.4 386.2 67.3 386.7 68.7 C387.1 70.1 387.9 72.6 388.7 74.3 C389.4 76.1 390.4 77.9 391.3 79.3 C392.3 80.7 393.2 82.2 394.3 82.7 C395.5 83.1 396.8 81.8 398.3 81.8 C399.8 81.8 401.7 82.4 403.3 82.7 C405.0 82.9 406.9 83.8 408.3 83.5 C409.7 83.2 410.8 82.2 411.7 81.0 C412.5 79.8 412.9 77.7 413.3 76.0 C413.8 74.3 414.3 72.7 414.3 71.0 C414.3 69.3 413.5 66.8 413.3 66.0 Z" fill="#7dd3f6" />
<path d="M424.3 86.3 C425.2 85.7 427.3 85.1 428.3 85.3 C429.4 85.6 430.2 86.6 430.7 87.7 C431.1 88.8 431.3 90.9 431.0 92.0 C430.7 93.1 429.8 93.8 429.0 94.3 C428.2 94.9 426.9 95.4 426.0 95.3 C425.1 95.2 423.8 94.7 423.3 93.7 C422.8 92.7 422.8 90.6 423.0 89.3 C423.2 88.1 423.4 87.0 424.3 86.3 Z" fill="#7dd3f6" />
<path d="M355.0 141.7 C356.4 141.2 359.9 142.8 361.0 144.2 C362.1 145.6 362.4 148.7 361.8 150.0 C361.3 151.3 359.1 152.0 357.7 152.2 C356.2 152.3 354.2 151.9 353.3 151.0 C352.4 150.1 352.1 148.2 352.3 146.7 C352.6 145.1 353.6 142.1 355.0 141.7 Z" fill="#7dd3f6" />
<path d="M345.8 159.2 C346.9 159.1 349.9 161.1 351.7 161.7 C353.5 162.2 355.2 162.8 356.7 162.5 C358.2 162.2 359.4 161.2 360.8 160.0 C362.2 158.8 363.5 156.5 365.0 155.0 C366.5 153.5 368.3 152.1 370.0 150.8 C371.7 149.6 373.3 148.5 375.0 147.5 C376.7 146.5 378.1 145.7 380.0 145.0 C381.9 144.3 384.5 143.7 386.7 143.3 C388.9 142.9 391.1 142.8 393.3 142.5 C395.5 142.2 398.1 142.1 400.0 141.7 C401.9 141.3 403.3 140.7 405.0 140.0 C406.7 139.3 408.1 138.2 410.0 137.5 C411.9 136.8 414.5 136.2 416.7 135.8 C418.9 135.4 421.1 135.2 423.3 135.0 C425.5 134.8 427.9 134.7 430.0 134.7 C432.1 134.7 434.6 134.7 435.8 135.0 C437.0 135.3 437.4 135.7 437.0 136.5 C436.6 137.3 434.8 138.7 433.3 140.0 C431.9 141.3 430.0 142.9 428.3 144.2 C426.6 145.4 425.0 146.4 423.3 147.5 C421.6 148.6 420.0 149.7 418.3 150.8 C416.6 151.9 415.0 153.1 413.3 154.2 C411.6 155.3 410.0 156.4 408.3 157.5 C406.6 158.6 405.2 159.8 403.3 160.8 C401.4 161.8 398.9 162.5 396.7 163.3 C394.5 164.1 391.9 164.8 390.0 165.8 C388.1 166.8 386.7 168.1 385.0 169.2 C383.3 170.3 381.9 171.7 380.0 172.5 C378.1 173.3 375.5 173.6 373.3 174.2 C371.1 174.8 368.6 175.2 366.7 175.8 C364.8 176.4 363.4 177.5 361.7 177.5 C360.0 177.5 358.4 176.5 356.7 175.8 C355.0 175.1 353.2 174.0 351.7 173.3 C350.2 172.6 348.5 172.7 347.5 171.7 C346.5 170.7 346.2 169.0 345.8 167.5 C345.4 166.0 345.3 163.9 345.3 162.5 C345.3 161.1 344.7 159.3 345.8 159.2 Z" fill="#7dd3f6" />
<path d="M417.8 121.0 C417.7 119.7 418.9 117.9 419.8 116.8 C420.7 115.7 422.0 114.8 423.4 114.2 C424.8 113.6 426.4 113.7 428.0 113.4 C429.6 113.1 431.0 112.9 433.0 112.4 C435.0 111.9 437.5 111.3 440.0 110.6 C442.5 109.9 445.3 108.8 448.0 108.0 C450.7 107.2 453.3 106.6 456.0 106.0 C458.7 105.4 461.5 105.1 464.0 104.4 C466.5 103.7 468.8 102.8 471.0 102.0 C473.2 101.2 475.0 100.1 477.0 99.4 C479.0 98.7 481.0 98.3 483.0 98.0 C485.0 97.7 487.3 97.2 489.0 97.4 C490.7 97.7 492.1 98.5 493.0 99.5 C493.9 100.5 494.3 101.9 494.4 103.5 C494.5 105.1 493.9 107.3 493.6 109.0 C493.3 110.7 493.1 112.2 492.5 113.5 C491.9 114.8 491.2 115.9 489.8 117.0 C488.4 118.1 486.1 119.2 484.0 120.0 C481.9 120.8 479.3 121.3 477.0 121.8 C474.7 122.3 472.5 122.5 470.0 122.8 C467.5 123.1 464.7 123.4 462.0 123.4 C459.3 123.4 456.7 122.9 454.0 122.6 C451.3 122.3 448.7 121.7 446.0 121.6 C443.3 121.5 440.5 121.5 438.0 121.8 C435.5 122.1 433.2 122.9 431.0 123.4 C428.8 123.9 426.8 124.8 425.0 125.0 C423.2 125.2 421.6 125.1 420.4 124.4 C419.2 123.7 417.9 122.3 417.8 121.0 Z" fill="#7dd3f6" />
<path d="M526.6 238.4 C527.0 237.4 525.1 237.8 523.7 237.0 C522.3 236.2 519.8 234.7 518.1 233.3 C516.4 231.9 514.9 229.9 513.3 228.4 C511.7 226.9 509.6 224.8 508.5 224.2 C507.4 223.6 506.8 223.6 506.6 224.8 C506.4 226.1 506.8 229.8 507.4 231.7 C508.0 233.6 509.1 235.2 510.1 236.5 C511.1 237.8 512.1 238.4 513.3 239.2 C514.4 239.9 516.1 239.8 517.0 241.0 C517.9 242.2 518.1 246.0 518.9 246.3 C519.7 246.6 520.3 244.3 521.6 243.0 C522.9 241.7 526.2 239.4 526.6 238.4 Z" fill="#7dd3f6" />
<path d="M493.2 229.2 C492.1 229.9 490.2 232.6 489.1 234.1 C488.0 235.6 487.2 236.4 486.7 238.1 C486.2 239.8 485.9 242.3 485.9 244.5 C485.9 246.7 486.4 248.8 486.7 251.0 C487.0 253.2 487.1 255.5 487.5 257.4 C487.9 259.3 489.1 260.8 489.1 262.2 C489.1 263.6 488.2 264.6 487.5 265.5 C486.8 266.4 485.1 267.1 485.1 267.9 C485.1 268.7 486.6 269.4 487.5 270.3 C488.4 271.2 490.4 272.3 490.7 273.5 C491.0 274.7 489.0 276.3 489.1 277.5 C489.2 278.7 490.8 279.6 491.6 280.7 C492.4 281.8 493.9 282.8 494.0 284.0 C494.1 285.2 492.3 286.8 492.4 288.0 C492.5 289.2 494.0 290.0 494.8 291.2 C495.6 292.4 496.7 293.6 497.2 295.2 C497.7 296.8 497.5 300.3 498.0 300.9 C498.5 301.5 499.8 300.0 500.0 299.0 C500.2 298.0 499.6 295.9 499.4 295.0 C499.1 294.1 498.6 294.2 498.5 293.6 C498.4 293.0 498.7 292.5 499.1 291.2 C499.6 289.9 500.4 287.5 501.2 285.6 C501.9 283.7 502.8 281.6 503.6 279.9 C504.4 278.1 505.4 276.4 506.0 275.1 C506.6 273.8 507.2 272.7 507.2 271.9 C507.2 271.1 506.5 271.0 506.0 270.3 C505.5 269.6 504.9 269.0 504.4 267.9 C503.9 266.8 503.6 265.0 502.8 263.8 C502.0 262.6 500.5 261.8 499.6 260.6 C498.7 259.4 498.0 257.8 497.2 256.6 C496.4 255.4 495.6 254.6 494.8 253.4 C494.0 252.2 492.9 250.9 492.4 249.4 C491.9 247.9 491.5 246.1 491.6 244.5 C491.7 242.9 492.7 241.3 493.2 239.7 C493.7 238.1 494.4 236.5 494.8 234.9 C495.2 233.3 495.9 230.9 495.6 230.0 C495.3 229.1 494.3 228.5 493.2 229.2 Z" fill="#7dd3f6" />
<path d="M493.0 99.0 C493.7 98.3 495.3 96.6 497.0 95.0 C498.7 93.4 500.8 91.3 503.0 89.5 C505.2 87.7 507.7 85.8 510.0 84.0 C512.3 82.2 514.7 80.3 517.0 78.5 C519.3 76.7 521.7 75.1 524.0 73.0 C526.3 70.9 529.8 67.2 531.0 66.0" fill="none" stroke="#7dd3f6" stroke-width="1.6" stroke-linejoin="round" stroke-linecap="round" />
<path d="M555.6 70.0 C555.7 71.0 556.2 73.8 556.2 76.0 C556.2 78.2 555.9 80.7 555.6 83.0 C555.3 85.3 554.7 87.8 554.4 90.0 C554.1 92.2 553.8 94.0 553.6 96.0 C553.4 98.0 553.3 101.0 553.2 102.0" fill="none" stroke="#7dd3f6" stroke-width="1.5" stroke-linejoin="round" stroke-linecap="round" />
<path d="M555.6 70.0 C555.7 71.0 556.2 73.8 556.2 76.0 C556.2 78.2 555.9 80.7 555.6 83.0 C555.3 85.3 554.6 88.8 554.4 90.0" fill="none" stroke="#7dd3f6" stroke-width="2.6" stroke-linejoin="round" stroke-linecap="round" />
<path d="M436.0 84.0 C436.8 83.7 439.3 82.2 441.0 82.4 C442.7 82.6 444.2 84.9 446.0 85.0 C447.8 85.1 450.2 82.8 452.0 83.0 C453.8 83.2 455.2 86.2 457.0 86.5 C458.8 86.8 462.0 84.9 463.0 84.6" fill="none" stroke="#7dd3f6" stroke-width="1.4" stroke-linejoin="round" stroke-linecap="round" stroke-dasharray="1.6 2.2"/>
<path d="M469.0 136.7 L470.4 140.8" fill="none" stroke="#7dd3f6" stroke-width="1.25" stroke-linejoin="round" stroke-linecap="round" />
<path d="M475.2 142.8 L472.4 148.3" fill="none" stroke="#7dd3f6" stroke-width="1.25" stroke-linejoin="round" stroke-linecap="round" />
<path d="M477.2 135.6 L478.4 142.0 L479.3 149.0" fill="none" stroke="#7dd3f6" stroke-width="1.25" stroke-linejoin="round" stroke-linecap="round" />
<path d="M481.3 134.6 L482.7 140.1 L486.1 146.3" fill="none" stroke="#7dd3f6" stroke-width="1.25" stroke-linejoin="round" stroke-linecap="round" />
<path d="M486.1 135.3 L487.5 138.7" fill="none" stroke="#7dd3f6" stroke-width="1.25" stroke-linejoin="round" stroke-linecap="round" />
<path d="M490.2 136.0 L491.6 138.0" fill="none" stroke="#7dd3f6" stroke-width="1.25" stroke-linejoin="round" stroke-linecap="round" />
<path d="M460.0 132.0 L457.0 137.5 L454.6 143.5" fill="none" stroke="#7dd3f6" stroke-width="1.25" stroke-linejoin="round" stroke-linecap="round" />
<path d="M486.4 266.6 C485.5 266.1 482.6 264.7 481.0 263.4 C479.4 262.1 477.7 260.4 476.6 258.6 C475.5 256.8 474.7 254.6 474.4 252.6 C474.1 250.6 474.9 247.6 475.0 246.6" fill="none" stroke="#7dd3f6" stroke-width="1.3" stroke-linejoin="round" stroke-linecap="round" />
<path d="M487.6 276.0 C486.7 275.4 483.8 273.7 482.0 272.6 C480.2 271.5 478.7 270.4 477.0 269.6 C475.3 268.8 472.8 267.9 472.0 267.6" fill="none" stroke="#7dd3f6" stroke-width="1.3" stroke-linejoin="round" stroke-linecap="round" />
<path d="M490.4 283.0 C489.5 282.4 486.7 280.5 485.0 279.6 C483.3 278.7 481.5 278.1 480.0 277.4 C478.5 276.7 476.7 275.9 476.0 275.6" fill="none" stroke="#7dd3f6" stroke-width="1.3" stroke-linejoin="round" stroke-linecap="round" />
<path d="M495.0 295.4 C494.0 295.2 490.9 294.0 489.0 294.0 C487.1 294.0 485.4 295.8 483.6 295.6 C481.8 295.4 479.9 293.5 478.0 292.6 C476.1 291.7 473.0 290.8 472.0 290.4" fill="none" stroke="#7dd3f6" stroke-width="1.3" stroke-linejoin="round" stroke-linecap="round" />
<path d="M489.6 234.0 L485.0 231.0 L481.0 230.0" fill="none" stroke="#7dd3f6" stroke-width="1.3" stroke-linejoin="round" stroke-linecap="round" />
<path d="M486.6 244.6 L482.6 243.0 L479.6 240.6" fill="none" stroke="#7dd3f6" stroke-width="1.3" stroke-linejoin="round" stroke-linecap="round" />
<path d="M494.0 240.0 L497.6 243.6 L499.6 248.0" fill="none" stroke="#7dd3f6" stroke-width="1.3" stroke-linejoin="round" stroke-linecap="round" />
<path d="M497.0 256.0 L501.0 254.6 L503.6 251.0" fill="none" stroke="#7dd3f6" stroke-width="1.3" stroke-linejoin="round" stroke-linecap="round" />
<path d="M503.0 265.0 L507.0 262.6 L509.0 259.0" fill="none" stroke="#7dd3f6" stroke-width="1.3" stroke-linejoin="round" stroke-linecap="round" />
<ellipse cx="512" cy="109" rx="1.6" ry="1" fill="#7dd3f6" opacity=".9"/>
<ellipse cx="520" cy="101" rx="1.2" ry="0.8" fill="#7dd3f6" opacity=".9"/>
<ellipse cx="531" cy="97" rx="1.4" ry="0.8" fill="#7dd3f6" opacity=".9"/>
<ellipse cx="541" cy="101" rx="1" ry="1.6" fill="#7dd3f6" opacity=".9"/>
<ellipse cx="528" cy="113" rx="1.6" ry="0.8" fill="#7dd3f6" opacity=".9"/>
<ellipse cx="537" cy="110" rx="0.9" ry="1.4" fill="#7dd3f6" opacity=".9"/>
<ellipse cx="546" cy="93" rx="0.8" ry="1.5" fill="#7dd3f6" opacity=".9"/>
<ellipse cx="606" cy="77" rx="1.6" ry="2.2" fill="#7dd3f6" opacity=".9"/>
<ellipse cx="612" cy="84" rx="1.2" ry="1.6" fill="#7dd3f6" opacity=".9"/>
<ellipse cx="604" cy="85" rx="1" ry="1.4" fill="#7dd3f6" opacity=".9"/>
<ellipse cx="622" cy="72" rx="1.6" ry="1" fill="#7dd3f6" opacity=".9"/>
<ellipse cx="629" cy="76" rx="1" ry="1.6" fill="#7dd3f6" opacity=".9"/>
<ellipse cx="640" cy="71" rx="1.4" ry="1" fill="#7dd3f6" opacity=".9"/>
<ellipse cx="635" cy="83" rx="1" ry="1.3" fill="#7dd3f6" opacity=".9"/>
<ellipse cx="611" cy="101" rx="1.3" ry="1.8" fill="#7dd3f6" opacity=".9"/>
<ellipse cx="609" cy="112" rx="1.1" ry="1.4" fill="#7dd3f6" opacity=".9"/>
<ellipse cx="613" cy="119" rx="1" ry="1.3" fill="#7dd3f6" opacity=".9"/>
<ellipse cx="597" cy="120" rx="0.9" ry="1.5" fill="#7dd3f6" opacity=".9"/>
<ellipse cx="569" cy="147" rx="1" ry="1.6" fill="#7dd3f6" opacity=".9"/>
<ellipse cx="574" cy="150" rx="0.8" ry="1.3" fill="#7dd3f6" opacity=".9"/>
<ellipse cx="439" cy="75" rx="1.6" ry="1" fill="#7dd3f6" opacity=".9"/>
<ellipse cx="446" cy="72" rx="1.3" ry="0.9" fill="#7dd3f6" opacity=".9"/>
<ellipse cx="455" cy="78" rx="1.5" ry="0.9" fill="#7dd3f6" opacity=".9"/>
<ellipse cx="462" cy="74" rx="1.2" ry="0.8" fill="#7dd3f6" opacity=".9"/>
<ellipse cx="470" cy="83" rx="1.4" ry="0.9" fill="#7dd3f6" opacity=".9"/>
<ellipse cx="477" cy="79" rx="1.2" ry="0.8" fill="#7dd3f6" opacity=".9"/>
<ellipse cx="484" cy="88" rx="1.2" ry="0.8" fill="#7dd3f6" opacity=".9"/>
<ellipse cx="449" cy="90" rx="1" ry="0.7" fill="#7dd3f6" opacity=".9"/>
<ellipse cx="226" cy="88" rx="1" ry="1.4" fill="#7dd3f6" opacity=".9"/>
<ellipse cx="222" cy="112" rx="1.2" ry="0.8" fill="#7dd3f6" opacity=".9"/>
<ellipse cx="229" cy="118" rx="1.3" ry="0.7" fill="#7dd3f6" opacity=".9"/>
<ellipse cx="210" cy="100" rx="1" ry="0.7" fill="#7dd3f6" opacity=".9"/>
<ellipse cx="216" cy="138" rx="1" ry="1.3" fill="#7dd3f6" opacity=".9"/>
<ellipse cx="205" cy="92" rx="0.8" ry="1.2" fill="#7dd3f6" opacity=".9"/>
<ellipse cx="146" cy="74" rx="1.2" ry="1.6" fill="#7dd3f6" opacity=".9"/>
<ellipse cx="152" cy="79" rx="1" ry="1.3" fill="#7dd3f6" opacity=".9"/>
<ellipse cx="140" cy="80" rx="1.2" ry="0.8" fill="#7dd3f6" opacity=".9"/>
<ellipse cx="121" cy="96" rx="0.9" ry="1.2" fill="#7dd3f6" opacity=".9"/>
<ellipse cx="165" cy="83" rx="1.2" ry="0.8" fill="#7dd3f6" opacity=".9"/>
<ellipse cx="727" cy="96.6" rx="1.8" ry="1.3" fill="#7dd3f6" opacity=".9"/>
<ellipse cx="724" cy="90" rx="1" ry="0.8" fill="#7dd3f6" opacity=".9"/>
<ellipse cx="88" cy="122" rx="1" ry="1.4" fill="#7dd3f6" opacity=".9"/>
<ellipse cx="165" cy="243" rx="1.4" ry="0.8" fill="#7dd3f6" opacity=".9"/>
<ellipse cx="128" cy="272" rx="1.6" ry="0.9" fill="#7dd3f6" opacity=".9"/>
<ellipse cx="120" cy="278" rx="1.2" ry="0.8" fill="#7dd3f6" opacity=".9"/>
<ellipse cx="113" cy="318" rx="1.6" ry="0.9" fill="#7dd3f6" opacity=".9"/>
<ellipse cx="96" cy="312" rx="1.4" ry="0.8" fill="#7dd3f6" opacity=".9"/>
<ellipse cx="270" cy="226" rx="1" ry="0.7" fill="#7dd3f6" opacity=".9"/>
<ellipse cx="300" cy="292" rx="1.4" ry="0.7" fill="#7dd3f6" opacity=".9"/>
<ellipse cx="311" cy="300" rx="1.6" ry="0.8" fill="#7dd3f6" opacity=".9"/>
<ellipse cx="423" cy="294" rx="1.6" ry="0.8" fill="#7dd3f6" opacity=".9"/>
<ellipse cx="430" cy="297" rx="1.4" ry="0.7" fill="#7dd3f6" opacity=".9"/>
<ellipse cx="444" cy="304" rx="1.6" ry="0.8" fill="#7dd3f6" opacity=".9"/>
<ellipse cx="449" cy="299" rx="1.2" ry="0.7" fill="#7dd3f6" opacity=".9"/>
<path d="M543.2 194.8 L545.1 192.5 L550.2 191.3 L557.1 190.7 L563.9 190.4 L569.6 189.6 L572.0 188.0 L573.6 186.8 L574.6 187.4 L572.8 189.4 L575.0 189.6 L578.8 188.2 L579.6 189.0 L574.6 191.0 L570.8 191.9 L566.2 193.6 L559.4 195.3 L551.4 197.0 L545.0 198.0 L543.2 197.6 Z" fill="#f3f4ec" />
<path d="M607.4 177.6 C607.9 177.2 610.0 176.9 611.0 177.0 C612.0 177.1 613.4 177.8 613.4 178.2 C613.4 178.6 611.9 179.2 611.0 179.4 C610.1 179.6 608.6 179.5 608.0 179.2 C607.4 178.9 606.9 178.0 607.4 177.6 Z" fill="#f3f4ec" />
<path d="M620.6 180.2 C621.0 179.8 623.3 179.6 624.0 179.8 C624.7 180.0 625.4 181.0 625.0 181.4 C624.6 181.8 622.3 182.2 621.6 182.0 C620.9 181.8 620.2 180.6 620.6 180.2 Z" fill="#f3f4ec" />
<path d="M735.0 66.0 L728.3 71.8 L721.7 76.0 L715.0 81.0 L710.0 86.0 L705.8 92.7 L704.2 99.3 L705.2 105.0 L704.6 107.6 L707.0 108.4 L707.6 111.6 L710.0 111.0 L711.4 114.0 L713.4 113.6 L714.4 116.8 L716.7 118.7 L718.0 115.6 L720.0 116.4 L720.6 113.6 L723.0 114.4 L723.6 111.6 L726.0 112.2 L726.8 109.6 L729.0 110.0 L729.6 107.6 L732.0 108.2 L733.0 105.6 L735.2 105.8 L736.0 103.0 L738.4 103.4 L739.0 100.6 L741.4 100.4 L742.0 97.6 L744.2 97.0 L744.4 94.0 L746.4 92.6 L746.0 90.0 L748.0 88.6 L747.8 86.2 L750.0 87.6 L752.4 86.4 L754.0 88.6 L756.6 87.4 L758.6 89.0 L761.0 87.0 L763.0 87.8 L765.0 85.2 L767.6 85.4 L769.0 83.0 L771.7 83.0 L773.6 80.6 L776.0 80.6 L778.3 78.2 L781.0 78.2 L783.0 76.0 L786.7 75.4 L789.0 73.4 L791.6 73.0 L793.3 71.2 L796.4 70.4 L798.0 68.4 L801.0 66.0 Z" fill="#e4eed3" />
<path d="M701.8 93.6 L705.6 88.0 L710.5 83.4 L716.0 79.4 L717.0 80.2 L711.4 84.6 L706.6 89.0 L702.8 94.4 Z" fill="#e4eed3" />
<path d="M715.0 92.7 L720.0 87.7 L725.8 90.2 L727.5 96.8 L724.2 101.8 L718.3 103.0 L713.7 99.3 Z" fill="#c8da97" />
<path d="M725.8 101.8 L730.0 101.8 L730.8 106.0 L727.0 106.8 Z" fill="#c8da97" />
<path d="M732.1 78.3 L735.1 78.6 L736.7 79.9 L736.2 82.6 L734.3 83.7 L731.8 82.9 L731.3 80.5 Z" fill="#c8da97" />
<path d="M759.9 77.2 L762.4 77.4 L763.8 78.4 L763.3 80.5 L761.7 81.3 L759.7 80.7 L759.2 78.8 Z" fill="#c8da97" />
<path d="M774.1 75.2 L777.1 75.4 L778.7 76.4 L778.2 78.5 L776.3 79.3 L773.8 78.7 L773.3 76.8 Z" fill="#c8da97" />
<ellipse cx="727" cy="96.6" rx="2" ry="1.5" fill="#7dd3f6"/>
<path d="M131.0 72.0 C133.1 72.4 139.1 73.9 143.3 74.3 C147.5 74.7 152.1 74.3 156.0 74.6 C159.9 74.9 164.0 75.1 166.7 76.0 C169.4 76.9 170.1 78.0 172.0 80.0 C173.9 82.0 175.3 84.5 178.3 87.7 C181.3 90.9 186.7 96.2 190.0 99.3 C193.3 102.3 195.2 103.5 198.0 106.0 C200.8 108.5 204.2 111.6 206.7 114.3 C209.2 117.0 211.9 120.7 213.0 122.0" fill="none" stroke="#fbf8ea" stroke-width="1.8" stroke-linejoin="round" stroke-linecap="round" opacity=".4"/>
<path d="M128.0 68.0 C128.5 68.7 129.7 71.7 131.0 72.0 C132.3 72.3 134.5 69.7 136.0 70.0 C137.5 70.3 139.3 73.3 140.0 74.0" fill="none" stroke="#fbf8ea" stroke-width="1.4400000000000002" stroke-linejoin="round" stroke-linecap="round" opacity=".4"/>
<path d="M131.0 72.0 C130.2 72.7 127.8 74.7 126.0 76.0 C124.2 77.3 122.3 78.7 120.0 80.0 C117.7 81.3 113.3 83.3 112.0 84.0" fill="none" stroke="#fbf8ea" stroke-width="1.4400000000000002" stroke-linejoin="round" stroke-linecap="round" opacity=".4"/>
<path d="M23.0 111.5 C30.0 111.8 47.3 113.1 65.2 113.2 C83.1 113.3 116.3 113.5 130.5 112.2 C144.7 110.9 143.9 106.6 150.6 105.2 C157.3 103.8 165.3 103.9 170.7 103.9 C176.1 103.9 179.0 105.4 183.2 105.2 C187.4 105.0 191.6 101.5 195.8 102.7 C200.0 104.0 203.9 108.5 208.3 112.7 C212.7 116.9 218.1 123.1 222.0 128.0 C225.9 132.9 229.0 136.7 232.0 142.0 C235.0 147.3 238.7 157.0 240.0 160.0" fill="none" stroke="#fbf8ea" stroke-width="1.8" stroke-linejoin="round" stroke-linecap="round" opacity=".4"/>
<path d="M133.0 68.0 C133.0 71.7 133.4 82.6 133.0 90.0 C132.6 97.4 130.9 104.2 130.5 112.2 C130.1 120.2 131.1 131.9 130.5 137.8 C129.9 143.8 127.5 142.7 126.7 147.9 C125.9 153.1 126.1 164.6 125.5 169.2 C124.9 173.8 123.6 171.0 123.0 175.5 C122.4 180.0 122.5 190.2 121.7 196.0 C120.9 201.8 119.8 204.7 117.9 210.0 C116.0 215.3 112.7 222.4 110.4 227.7 C108.1 232.9 105.1 239.2 104.1 241.5" fill="none" stroke="#fbf8ea" stroke-width="1.8" stroke-linejoin="round" stroke-linecap="round" opacity=".4"/>
<path d="M53.9 68.0 C54.7 70.8 57.8 77.8 58.9 85.0 C60.0 92.2 60.0 102.7 60.2 111.5 C60.4 120.3 59.2 131.7 60.2 137.8 C61.2 143.9 64.2 142.9 66.5 147.9 C68.8 152.9 72.1 162.7 74.0 168.0 C75.9 173.3 77.0 175.3 78.0 180.0 C79.0 184.7 78.6 191.2 80.3 196.0 C82.0 200.8 85.4 204.7 88.0 209.0 C90.6 213.3 93.7 216.8 96.0 222.0 C98.3 227.2 101.0 237.0 102.0 240.0" fill="none" stroke="#fbf8ea" stroke-width="1.8" stroke-linejoin="round" stroke-linecap="round" opacity=".4"/>
<path d="M80.3 175.5 C87.0 175.2 113.0 174.6 120.5 173.5 C128.0 172.4 118.8 169.9 125.5 169.2 C132.2 168.5 149.3 168.6 160.6 169.2 C171.9 169.8 186.6 172.8 193.3 173.0 C200.0 173.2 196.2 171.8 200.8 170.5 C205.4 169.2 214.4 166.8 220.9 165.5 C227.4 164.2 236.8 163.4 240.0 163.0" fill="none" stroke="#fbf8ea" stroke-width="1.8" stroke-linejoin="round" stroke-linecap="round" opacity=".4"/>
<path d="M23.0 193.0 C26.7 193.2 38.0 194.5 45.0 194.3 C52.0 194.1 59.5 193.3 65.2 191.8 C70.9 190.3 76.5 188.2 79.0 185.5 C81.5 182.8 80.1 177.2 80.3 175.5" fill="none" stroke="#fbf8ea" stroke-width="1.8" stroke-linejoin="round" stroke-linecap="round" opacity=".4"/>
<path d="M23.0 246.5 C25.8 246.7 33.8 248.4 40.0 247.8 C46.2 247.2 53.5 243.5 60.2 242.7 C66.9 241.8 73.0 242.9 80.3 242.7 C87.6 242.5 97.4 241.3 104.1 241.5 C110.8 241.7 114.4 243.6 120.5 244.0 C126.6 244.4 133.8 243.6 140.5 244.0 C147.2 244.4 153.9 245.7 160.6 246.5 C167.3 247.3 174.8 248.4 180.7 249.0 C186.6 249.6 191.2 250.3 195.8 250.3 C200.4 250.3 203.4 249.6 208.3 249.0 C213.2 248.4 219.7 248.0 225.0 246.5 C230.3 245.0 235.2 242.4 240.0 240.0 C244.8 237.6 249.0 234.3 254.0 232.0 C259.0 229.7 267.3 227.0 270.0 226.0" fill="none" stroke="#fbf8ea" stroke-width="1.8" stroke-linejoin="round" stroke-linecap="round" opacity=".4"/>
<path d="M195.8 252.8 C193.3 254.5 186.6 259.0 180.7 262.8 C174.8 266.6 167.3 272.5 160.6 275.4 C153.9 278.3 147.2 277.5 140.5 280.4 C133.8 283.3 126.8 289.6 120.5 293.0 C114.2 296.4 107.9 297.6 102.9 300.5 C97.9 303.4 94.1 307.1 90.3 310.5 C86.5 313.9 82.7 318.2 80.3 320.6 C77.9 323.0 76.7 324.3 76.0 325.0" fill="none" stroke="#fbf8ea" stroke-width="1.8" stroke-linejoin="round" stroke-linecap="round" opacity=".4"/>
<path d="M104.1 244.0 C101.8 245.9 95.9 252.2 90.3 255.3 C84.7 258.4 76.0 259.5 70.2 262.8 C64.4 266.1 59.0 272.5 55.2 275.4 C51.4 278.3 49.0 272.1 47.6 280.4 C46.2 288.7 47.2 317.6 47.1 325.0" fill="none" stroke="#fbf8ea" stroke-width="1.8" stroke-linejoin="round" stroke-linecap="round" opacity=".4"/>
<path d="M40.0 247.8 C40.2 250.3 40.0 259.0 41.3 262.8 C42.6 266.6 46.5 267.5 47.6 270.4 C48.7 273.3 47.6 278.7 47.6 280.4" fill="none" stroke="#fbf8ea" stroke-width="1.4400000000000002" stroke-linejoin="round" stroke-linecap="round" opacity=".4"/>
<path d="M223.4 193.0 C222.6 196.7 220.5 208.0 218.4 215.0 C216.3 222.0 213.8 229.2 210.9 235.0 C208.0 240.8 202.5 247.5 200.8 250.0" fill="none" stroke="#fbf8ea" stroke-width="1.8" stroke-linejoin="round" stroke-linecap="round" opacity=".4"/>
<path d="M200.8 255.0 C201.6 258.3 203.7 269.1 205.8 275.0 C207.9 280.9 212.6 285.0 213.4 290.5 C214.2 296.0 210.9 302.2 210.9 308.0 C210.9 313.8 213.0 322.2 213.4 325.0" fill="none" stroke="#fbf8ea" stroke-width="1.8" stroke-linejoin="round" stroke-linecap="round" opacity=".4"/>
<path d="M242.0 165.0 C241.0 167.5 237.7 174.2 236.0 180.0 C234.3 185.8 233.3 193.0 232.0 200.0 C230.7 207.0 229.3 214.3 228.0 222.0 C226.7 229.7 225.0 239.3 224.0 246.0 C223.0 252.7 222.0 256.3 222.0 262.0 C222.0 267.7 222.7 274.8 224.0 280.0 C225.3 285.2 229.0 290.8 230.0 293.0" fill="none" stroke="#fbf8ea" stroke-width="1.8" stroke-linejoin="round" stroke-linecap="round" opacity=".4"/>
<path d="M242.0 165.0 C243.3 168.3 247.3 178.3 250.0 185.0 C252.7 191.7 255.3 198.8 258.0 205.0 C260.7 211.2 262.8 224.5 266.0 222.0 C269.2 219.5 275.2 195.3 277.0 190.0" fill="none" stroke="#fbf8ea" stroke-width="1.4400000000000002" stroke-linejoin="round" stroke-linecap="round" opacity=".4"/>
<path d="M240.0 163.0 C239.0 164.2 236.7 167.8 234.0 170.0 C231.3 172.2 228.0 174.3 224.0 176.0 C220.0 177.7 214.0 178.3 210.0 180.0 C206.0 181.7 203.3 182.7 200.0 186.0 C196.7 189.3 193.7 194.7 190.0 200.0 C186.3 205.3 180.0 215.0 178.0 218.0" fill="none" stroke="#fbf8ea" stroke-width="1.4400000000000002" stroke-linejoin="round" stroke-linecap="round" opacity=".4"/>
<path d="M244.0 132.0 L243.0 146.0 L242.0 163.0" fill="none" stroke="#fbf8ea" stroke-width="1.8" stroke-linejoin="round" stroke-linecap="round" opacity=".4"/>
<path d="M244.0 132.0 L232.0 126.0 L222.0 128.0" fill="none" stroke="#fbf8ea" stroke-width="1.4400000000000002" stroke-linejoin="round" stroke-linecap="round" opacity=".4"/>
<path d="M244.0 132.0 C244.3 129.2 246.2 120.3 246.0 115.0 C245.8 109.7 243.8 104.7 243.0 100.0 C242.2 95.3 241.3 89.2 241.0 87.0" fill="none" stroke="#fbf8ea" stroke-width="1.4400000000000002" stroke-linejoin="round" stroke-linecap="round" opacity=".4"/>
<path d="M213.0 128.0 L200.0 122.0 L184.0 112.0" fill="none" stroke="#fbf8ea" stroke-width="1.4400000000000002" stroke-linejoin="round" stroke-linecap="round" opacity=".4"/>
<path d="M314.3 68.0 C314.5 70.8 314.0 80.1 315.5 85.0 C317.0 89.9 320.8 93.4 323.1 97.6 C325.4 101.8 328.1 106.0 329.3 110.2 C330.6 114.4 329.8 119.0 330.6 122.8 C331.5 126.6 332.7 129.9 334.4 132.8 C336.1 135.7 338.7 137.4 340.6 140.3 C342.5 143.2 344.9 146.7 346.0 150.0 C347.1 153.3 346.8 156.2 346.9 160.0 C347.0 163.8 347.9 168.8 346.9 173.0 C345.8 177.2 342.5 181.0 340.6 185.5 C338.7 190.0 338.2 194.9 335.6 200.0 C333.0 205.1 327.5 210.7 325.0 216.0 C322.5 221.3 321.4 227.8 320.4 232.0 C319.4 236.2 319.4 239.9 319.2 241.5" fill="none" stroke="#fbf8ea" stroke-width="1.8" stroke-linejoin="round" stroke-linecap="round" opacity=".4"/>
<path d="M255.0 168.0 C256.2 167.2 259.5 164.3 262.0 163.0 C264.5 161.7 266.9 160.8 270.0 160.0 C273.1 159.2 275.3 159.1 280.4 157.9 C285.5 156.7 295.1 155.8 300.5 152.9 C305.9 150.0 308.0 143.7 313.0 140.3 C318.0 137.0 324.3 134.3 330.6 132.8 C336.9 131.3 345.3 131.5 350.7 131.5 C356.1 131.5 357.3 132.6 363.2 132.8 C369.1 133.0 379.5 133.6 385.8 132.8 C392.1 132.0 395.2 129.5 400.9 127.8 C406.6 126.1 416.8 123.6 420.0 122.8" fill="none" stroke="#fbf8ea" stroke-width="1.8" stroke-linejoin="round" stroke-linecap="round" opacity=".4"/>
<path d="M300.5 152.9 L320.0 153.5 L340.0 152.0" fill="none" stroke="#fbf8ea" stroke-width="1.8" stroke-linejoin="round" stroke-linecap="round" opacity=".4"/>
<path d="M254.7 170.5 C258.1 170.9 265.8 172.8 275.3 173.0 C284.8 173.2 302.6 172.3 311.8 171.7 C321.0 171.1 324.5 169.2 330.6 169.2 C336.7 169.2 342.8 170.6 348.2 171.7 C353.6 172.8 357.8 174.4 363.2 175.5 C368.6 176.6 376.0 176.8 380.8 178.0 C385.6 179.2 388.5 181.7 392.0 183.0 C395.5 184.3 400.3 185.5 402.0 186.0" fill="none" stroke="#fbf8ea" stroke-width="1.8" stroke-linejoin="round" stroke-linecap="round" opacity=".4"/>
<path d="M308.0 152.9 C308.4 155.8 310.5 162.7 310.5 170.5 C310.5 178.3 310.4 193.1 308.0 200.0 C305.6 206.9 299.8 208.8 296.0 212.0 C292.2 215.2 286.8 217.8 285.0 219.0" fill="none" stroke="#fbf8ea" stroke-width="1.8" stroke-linejoin="round" stroke-linecap="round" opacity=".4"/>
<path d="M257.0 172.0 C258.2 175.8 260.5 187.8 264.0 195.0 C267.5 202.2 274.2 209.8 277.8 215.0 C281.4 220.2 283.6 220.9 285.3 226.4 C287.0 231.9 286.6 241.9 287.8 247.8 C289.1 253.7 291.6 255.3 292.8 261.6 C294.1 267.9 295.7 278.9 295.3 285.4 C294.9 291.9 293.2 295.5 290.3 300.5 C287.4 305.5 281.2 311.5 277.8 315.6 C274.4 319.7 271.5 323.4 270.2 325.0" fill="none" stroke="#fbf8ea" stroke-width="1.8" stroke-linejoin="round" stroke-linecap="round" opacity=".4"/>
<path d="M380.8 178.0 C379.1 180.1 374.2 186.9 370.8 190.6 C367.4 194.3 364.2 195.8 360.7 200.0 C357.2 204.2 354.4 210.7 350.0 216.0 C345.6 221.3 339.1 227.8 334.0 232.0 C328.9 236.2 324.0 238.0 319.2 241.5 C314.4 245.0 309.8 249.5 305.4 252.8 C301.0 256.2 294.9 260.1 292.8 261.6" fill="none" stroke="#fbf8ea" stroke-width="1.8" stroke-linejoin="round" stroke-linecap="round" opacity=".4"/>
<path d="M380.8 178.0 C381.0 181.7 381.5 193.8 382.0 200.0 C382.5 206.2 383.3 209.2 384.0 215.0 C384.7 220.8 386.3 229.2 386.0 235.0 C385.7 240.8 381.7 244.8 382.0 250.0 C382.3 255.2 385.7 261.3 388.0 266.0 C390.3 270.7 395.3 273.9 395.8 278.0 C396.3 282.1 391.2 286.8 390.8 290.5 C390.4 294.2 390.4 297.6 393.3 300.5 C396.2 303.4 405.9 306.8 408.4 308.0" fill="none" stroke="#fbf8ea" stroke-width="1.8" stroke-linejoin="round" stroke-linecap="round" opacity=".4"/>
<path d="M380.8 176.8 C383.3 175.3 390.9 170.7 395.9 168.0 C400.9 165.3 406.2 162.9 410.9 160.4 C415.6 157.9 419.8 155.9 424.0 153.0 C428.2 150.1 432.3 145.8 436.0 143.0 C439.7 140.2 444.3 137.2 446.0 136.0" fill="none" stroke="#fbf8ea" stroke-width="1.8" stroke-linejoin="round" stroke-linecap="round" opacity=".4"/>
<path d="M220.0 212.6 C225.7 213.0 243.9 212.8 254.4 215.1 C264.9 217.4 273.2 225.3 282.8 226.4 C292.4 227.5 303.3 222.9 311.7 221.4 C320.1 219.9 326.5 218.4 333.0 217.6 C339.5 216.8 342.7 216.8 350.6 216.4 C358.6 216.0 372.1 215.9 380.7 215.1 C389.3 214.2 396.9 211.7 402.1 211.3 C407.3 211.0 408.4 213.1 412.0 213.0 C415.6 212.9 419.3 210.8 424.0 211.0 C428.7 211.2 434.0 213.7 440.0 214.0 C446.0 214.3 452.7 213.1 460.0 212.8 C467.3 212.5 476.7 212.7 484.0 212.0 C491.3 211.3 498.8 209.3 504.0 208.8 C509.2 208.3 513.5 208.8 515.4 208.8" fill="none" stroke="#fbf8ea" stroke-width="1.8" stroke-linejoin="round" stroke-linecap="round" opacity=".4"/>
<path d="M220.0 265.3 C224.2 265.1 236.7 264.1 245.1 264.1 C253.5 264.1 262.2 265.5 270.2 265.3 C278.1 265.1 284.4 262.4 292.8 262.8 C301.2 263.2 312.9 267.5 320.4 267.9 C327.9 268.3 331.7 266.6 338.0 265.3 C344.3 264.0 351.8 260.7 358.1 260.3 C364.4 259.9 369.4 263.2 375.7 262.8 C382.0 262.4 389.9 259.5 395.8 257.8 C401.7 256.1 408.4 253.6 410.9 252.8" fill="none" stroke="#fbf8ea" stroke-width="1.8" stroke-linejoin="round" stroke-linecap="round" opacity=".4"/>
<path d="M320.4 190.0 C320.2 194.2 319.4 206.5 319.2 215.1 C319.0 223.7 319.0 232.7 319.2 241.5 C319.4 250.3 319.3 259.7 320.4 267.9 C321.4 276.1 324.9 283.8 325.5 290.5 C326.1 297.2 323.8 302.2 324.2 308.0 C324.6 313.8 327.4 322.2 328.0 325.0" fill="none" stroke="#fbf8ea" stroke-width="1.8" stroke-linejoin="round" stroke-linecap="round" opacity=".4"/>
<path d="M410.9 205.1 C411.3 208.9 414.2 219.8 413.4 227.7 C412.5 235.6 408.7 246.5 405.8 252.8 C402.9 259.1 397.5 263.2 395.8 265.3" fill="none" stroke="#fbf8ea" stroke-width="1.8" stroke-linejoin="round" stroke-linecap="round" opacity=".4"/>
<path d="M440.0 272.9 C436.8 275.4 426.6 284.1 420.9 287.9 C415.2 291.7 410.8 292.6 405.8 295.5 C400.8 298.4 395.8 302.6 390.8 305.5 C385.8 308.4 381.6 310.6 375.7 313.1 C369.8 315.6 359.0 319.4 355.6 320.6" fill="none" stroke="#fbf8ea" stroke-width="1.8" stroke-linejoin="round" stroke-linecap="round" opacity=".4"/>
<path d="M282.0 226.0 C280.0 228.3 273.3 235.7 270.0 240.0 C266.7 244.3 264.7 248.3 262.0 252.0 C259.3 255.7 256.7 259.3 254.0 262.0 C251.3 264.7 247.3 267.0 246.0 268.0" fill="none" stroke="#fbf8ea" stroke-width="1.4400000000000002" stroke-linejoin="round" stroke-linecap="round" opacity=".4"/>
<path d="M285.0 219.0 L300.0 230.0 L319.0 241.0" fill="none" stroke="#fbf8ea" stroke-width="1.4400000000000002" stroke-linejoin="round" stroke-linecap="round" opacity=".4"/>
<path d="M285.0 219.0 C282.8 217.8 276.8 214.3 272.0 212.0 C267.2 209.7 261.0 208.3 256.0 205.0 C251.0 201.7 244.3 194.2 242.0 192.0" fill="none" stroke="#fbf8ea" stroke-width="1.4400000000000002" stroke-linejoin="round" stroke-linecap="round" opacity=".4"/>
<path d="M285.0 219.0 C285.8 215.8 287.5 205.7 290.0 200.0 C292.5 194.3 296.7 189.8 300.0 185.0 C303.3 180.2 308.3 173.3 310.0 171.0" fill="none" stroke="#fbf8ea" stroke-width="1.4400000000000002" stroke-linejoin="round" stroke-linecap="round" opacity=".4"/>
<path d="M432.6 137.8 C435.5 137.0 443.9 134.5 450.2 132.8 C456.5 131.1 462.8 129.1 470.3 127.8 C477.8 126.5 488.3 124.9 495.4 125.3 C502.5 125.7 507.1 127.8 513.0 130.3 C518.9 132.8 526.0 137.4 530.6 140.3 C535.2 143.2 537.2 146.4 540.6 147.9 C544.0 149.4 545.7 149.5 550.7 149.1 C555.7 148.7 564.1 146.4 570.8 145.4 C577.5 144.4 585.9 143.7 590.9 142.8 C595.9 142.0 599.2 140.7 600.9 140.3" fill="none" stroke="#fbf8ea" stroke-width="1.8" stroke-linejoin="round" stroke-linecap="round" opacity=".4"/>
<path d="M540.6 147.9 C540.4 150.8 539.4 159.7 539.4 165.5 C539.4 171.3 540.8 178.4 540.6 183.0 C540.4 187.6 538.5 191.3 538.1 193.0" fill="none" stroke="#fbf8ea" stroke-width="1.8" stroke-linejoin="round" stroke-linecap="round" opacity=".4"/>
<path d="M540.6 147.9 C541.9 144.6 546.1 135.3 548.2 127.8 C550.3 120.3 552.8 111.1 553.2 102.7 C553.6 94.3 551.4 83.4 550.7 77.6 C550.0 71.8 549.3 69.6 549.0 68.0" fill="none" stroke="#fbf8ea" stroke-width="1.8" stroke-linejoin="round" stroke-linecap="round" opacity=".4"/>
<path d="M400.0 125.3 C402.9 124.5 412.2 122.3 417.6 120.2 C423.0 118.1 427.2 115.2 432.6 112.7 C438.0 110.2 443.9 107.7 450.2 105.2 C456.5 102.7 464.0 99.5 470.3 97.6 C476.6 95.7 482.9 95.6 487.9 93.9 C492.9 92.2 496.3 89.9 500.5 87.6 C504.7 85.3 508.0 83.4 513.0 80.1 C518.0 76.8 527.7 70.0 530.6 68.0" fill="none" stroke="#fbf8ea" stroke-width="1.8" stroke-linejoin="round" stroke-linecap="round" opacity=".4"/>
<path d="M422.6 114.0 L418.8 92.6 L417.6 68.0" fill="none" stroke="#fbf8ea" stroke-width="1.8" stroke-linejoin="round" stroke-linecap="round" opacity=".4"/>
<path d="M495.4 97.6 C495.1 103.0 493.8 123.0 493.7 129.8 C493.6 136.7 494.1 135.4 495.0 138.7 C495.9 142.0 498.2 146.7 499.2 149.7 C500.2 152.7 500.3 153.8 501.2 156.6 C502.1 159.3 504.0 162.8 504.7 166.2 C505.4 169.6 505.3 173.9 505.3 177.1 C505.3 180.3 505.5 181.6 504.7 185.4 C503.9 189.2 502.3 195.2 500.5 200.0 C498.7 204.8 496.4 209.7 494.0 214.0 C491.6 218.3 488.7 221.7 486.0 226.0 C483.3 230.3 479.3 237.7 478.0 240.0" fill="none" stroke="#fbf8ea" stroke-width="1.8" stroke-linejoin="round" stroke-linecap="round" opacity=".4"/>
<path d="M417.6 162.9 C423.0 162.5 440.6 160.4 450.2 160.4 C459.8 160.4 466.9 162.9 475.3 162.9 C483.7 162.9 493.0 160.0 500.5 160.4 C508.0 160.8 514.6 163.0 520.5 165.5 C526.4 168.0 533.1 173.8 535.6 175.5" fill="none" stroke="#fbf8ea" stroke-width="1.4400000000000002" stroke-linejoin="round" stroke-linecap="round" opacity=".4"/>
<path d="M400.0 183.0 C404.2 183.4 414.6 185.5 425.1 185.5 C435.6 185.5 450.2 183.4 462.8 183.0 C475.4 182.6 490.9 182.6 500.5 183.0 C510.1 183.4 514.6 184.7 520.5 185.5 C526.4 186.3 533.1 187.6 535.6 188.0" fill="none" stroke="#fbf8ea" stroke-width="1.8" stroke-linejoin="round" stroke-linecap="round" opacity=".4"/>
<path d="M590.0 68.0 C589.7 70.7 589.3 79.0 588.0 84.0 C586.7 89.0 583.8 93.3 582.0 98.0 C580.2 102.7 578.2 107.3 577.0 112.0 C575.8 116.7 575.2 121.3 574.5 126.0 C573.8 130.7 572.8 134.6 572.5 140.3 C572.2 146.0 572.6 154.1 573.0 160.4 C573.4 166.7 574.5 175.1 574.8 178.0" fill="none" stroke="#fbf8ea" stroke-width="1.8" stroke-linejoin="round" stroke-linecap="round" opacity=".4"/>
<path d="M620.0 110.2 C618.5 113.1 614.2 122.8 611.0 127.8 C607.8 132.8 603.4 136.5 600.9 140.3 C598.4 144.1 598.4 146.2 595.9 150.4 C593.4 154.6 589.1 161.3 585.8 165.5 C582.4 169.7 579.6 172.6 575.8 175.5 C572.0 178.4 567.4 180.9 563.2 183.0 C559.0 185.1 554.5 186.3 550.7 188.0 C546.9 189.7 543.6 191.1 540.6 193.1 C537.6 195.1 536.4 196.8 533.0 200.0 C529.6 203.2 524.5 208.6 520.3 212.6 C516.1 216.6 511.6 221.0 507.8 223.9 C504.1 226.8 501.2 228.3 497.8 230.2 C494.4 232.1 491.1 233.5 487.7 235.2 C484.3 236.9 480.2 238.1 477.7 240.2 C475.2 242.3 474.4 244.0 472.7 247.8 C471.0 251.6 468.2 257.4 467.6 262.8 C467.0 268.2 469.1 274.9 468.9 280.4 C468.7 285.8 467.4 290.7 466.4 295.5 C465.3 300.3 463.7 304.4 462.6 309.3 C461.5 314.2 460.4 322.4 460.0 325.0" fill="none" stroke="#fbf8ea" stroke-width="1.8" stroke-linejoin="round" stroke-linecap="round" opacity=".4"/>
<path d="M599.0 143.5 C597.2 144.6 592.0 147.9 588.0 150.0 C584.0 152.1 579.3 154.3 575.0 156.0 C570.7 157.7 565.8 158.3 562.0 160.0 C558.2 161.7 555.0 163.0 552.0 166.0 C549.0 169.0 545.3 176.0 544.0 178.0" fill="none" stroke="#fbf8ea" stroke-width="1.4400000000000002" stroke-linejoin="round" stroke-linecap="round" opacity=".4"/>
<path d="M599.0 143.5 C598.7 140.9 597.8 133.2 597.0 128.0 C596.2 122.8 595.2 117.0 594.0 112.0 C592.8 107.0 590.7 100.3 590.0 98.0" fill="none" stroke="#fbf8ea" stroke-width="1.4400000000000002" stroke-linejoin="round" stroke-linecap="round" opacity=".4"/>
<path d="M651.7 68.0 C651.6 69.6 652.2 76.0 650.8 77.7 C649.4 79.5 645.9 77.8 643.3 78.5 C640.7 79.2 637.1 80.3 635.0 81.8 C632.9 83.3 632.2 85.3 630.8 87.7 C629.4 90.1 628.9 92.7 626.7 96.0 C624.5 99.3 619.5 104.1 617.5 107.7 C615.5 111.3 616.6 114.2 615.0 117.7 C613.4 121.2 610.2 125.6 608.0 129.0 C605.8 132.4 603.0 136.5 602.0 138.0" fill="none" stroke="#fbf8ea" stroke-width="1.8" stroke-linejoin="round" stroke-linecap="round" opacity=".4"/>
<path d="M440.0 215.1 C443.3 214.9 453.3 214.3 460.0 213.9 C466.7 213.5 472.9 213.2 480.2 212.6 C487.5 212.0 498.1 210.7 504.0 210.1 C509.9 209.5 511.7 209.8 515.4 208.8 C519.1 207.8 523.1 205.5 526.0 204.0 C528.9 202.5 531.8 200.7 533.0 200.0" fill="none" stroke="#fbf8ea" stroke-width="1.4400000000000002" stroke-linejoin="round" stroke-linecap="round" opacity=".4"/>
<path d="M440.0 250.3 L455.0 246.5 L471.4 244.0" fill="none" stroke="#fbf8ea" stroke-width="1.4400000000000002" stroke-linejoin="round" stroke-linecap="round" opacity=".4"/>
<path d="M440.0 272.9 C442.1 273.7 448.0 276.2 452.6 277.9 C457.2 279.6 463.4 280.9 467.6 283.0 C471.8 285.1 473.9 287.6 477.7 290.5 C481.5 293.4 486.8 298.0 490.2 300.5 C493.6 303.0 496.5 304.7 497.8 305.5" fill="none" stroke="#fbf8ea" stroke-width="1.8" stroke-linejoin="round" stroke-linecap="round" opacity=".4"/>
<path d="M424.0 180.0 C425.0 182.7 428.0 190.7 430.0 196.0 C432.0 201.3 433.7 206.7 436.0 212.0 C438.3 217.3 441.3 223.3 444.0 228.0 C446.7 232.7 451.3 235.0 452.0 240.0 C452.7 245.0 450.0 252.5 448.0 258.0 C446.0 263.5 441.3 270.5 440.0 273.0" fill="none" stroke="#fbf8ea" stroke-width="1.4400000000000002" stroke-linejoin="round" stroke-linecap="round" opacity=".4"/>
<path d="M533.0 200.0 C532.5 202.3 531.5 209.7 530.0 214.0 C528.5 218.3 526.3 222.3 524.0 226.0 C521.7 229.7 517.3 234.3 516.0 236.0" fill="none" stroke="#fbf8ea" stroke-width="1.4400000000000002" stroke-linejoin="round" stroke-linecap="round" opacity=".4"/>
<path d="M509.0 225.0 C509.8 226.5 512.5 230.5 514.0 234.0 C515.5 237.5 517.7 242.0 518.0 246.0 C518.3 250.0 516.3 256.0 516.0 258.0" fill="none" stroke="#fbf8ea" stroke-width="1.4400000000000002" stroke-linejoin="round" stroke-linecap="round" opacity=".4"/>
<path d="M412.0 213.0 C413.3 210.8 417.3 203.8 420.0 200.0 C422.7 196.2 426.0 194.0 428.0 190.0 C430.0 186.0 430.7 181.0 432.0 176.0 C433.3 171.0 435.3 165.5 436.0 160.0 C436.7 154.5 436.0 145.8 436.0 143.0" fill="none" stroke="#fbf8ea" stroke-width="1.4400000000000002" stroke-linejoin="round" stroke-linecap="round" opacity=".4"/>
<path d="M371.0 176.0 C371.2 178.3 372.5 185.2 372.0 190.0 C371.5 194.8 370.7 200.7 368.0 205.0 C365.3 209.3 358.0 214.2 356.0 216.0" fill="none" stroke="#fbf8ea" stroke-width="1.4400000000000002" stroke-linejoin="round" stroke-linecap="round" opacity=".4"/>
<path d="M131.0 72.0 C133.1 72.4 139.1 73.9 143.3 74.3 C147.5 74.7 152.1 74.3 156.0 74.6 C159.9 74.9 164.0 75.1 166.7 76.0 C169.4 76.9 170.1 78.0 172.0 80.0 C173.9 82.0 175.3 84.5 178.3 87.7 C181.3 90.9 186.7 96.2 190.0 99.3 C193.3 102.3 195.2 103.5 198.0 106.0 C200.8 108.5 204.2 111.6 206.7 114.3 C209.2 117.0 211.9 120.7 213.0 122.0" fill="none" stroke="#f6d696" stroke-width="0.82" stroke-linejoin="round" stroke-linecap="round" />
<path d="M128.0 68.0 C128.5 68.7 129.7 71.7 131.0 72.0 C132.3 72.3 134.5 69.7 136.0 70.0 C137.5 70.3 139.3 73.3 140.0 74.0" fill="none" stroke="#f8e2b2" stroke-width="0.656" stroke-linejoin="round" stroke-linecap="round" />
<path d="M131.0 72.0 C130.2 72.7 127.8 74.7 126.0 76.0 C124.2 77.3 122.3 78.7 120.0 80.0 C117.7 81.3 113.3 83.3 112.0 84.0" fill="none" stroke="#f8e2b2" stroke-width="0.656" stroke-linejoin="round" stroke-linecap="round" />
<path d="M23.0 111.5 C30.0 111.8 47.3 113.1 65.2 113.2 C83.1 113.3 116.3 113.5 130.5 112.2 C144.7 110.9 143.9 106.6 150.6 105.2 C157.3 103.8 165.3 103.9 170.7 103.9 C176.1 103.9 179.0 105.4 183.2 105.2 C187.4 105.0 191.6 101.5 195.8 102.7 C200.0 104.0 203.9 108.5 208.3 112.7 C212.7 116.9 218.1 123.1 222.0 128.0 C225.9 132.9 229.0 136.7 232.0 142.0 C235.0 147.3 238.7 157.0 240.0 160.0" fill="none" stroke="#f6d696" stroke-width="0.82" stroke-linejoin="round" stroke-linecap="round" />
<path d="M133.0 68.0 C133.0 71.7 133.4 82.6 133.0 90.0 C132.6 97.4 130.9 104.2 130.5 112.2 C130.1 120.2 131.1 131.9 130.5 137.8 C129.9 143.8 127.5 142.7 126.7 147.9 C125.9 153.1 126.1 164.6 125.5 169.2 C124.9 173.8 123.6 171.0 123.0 175.5 C122.4 180.0 122.5 190.2 121.7 196.0 C120.9 201.8 119.8 204.7 117.9 210.0 C116.0 215.3 112.7 222.4 110.4 227.7 C108.1 232.9 105.1 239.2 104.1 241.5" fill="none" stroke="#f6d696" stroke-width="0.82" stroke-linejoin="round" stroke-linecap="round" />
<path d="M53.9 68.0 C54.7 70.8 57.8 77.8 58.9 85.0 C60.0 92.2 60.0 102.7 60.2 111.5 C60.4 120.3 59.2 131.7 60.2 137.8 C61.2 143.9 64.2 142.9 66.5 147.9 C68.8 152.9 72.1 162.7 74.0 168.0 C75.9 173.3 77.0 175.3 78.0 180.0 C79.0 184.7 78.6 191.2 80.3 196.0 C82.0 200.8 85.4 204.7 88.0 209.0 C90.6 213.3 93.7 216.8 96.0 222.0 C98.3 227.2 101.0 237.0 102.0 240.0" fill="none" stroke="#f6d696" stroke-width="0.82" stroke-linejoin="round" stroke-linecap="round" />
<path d="M80.3 175.5 C87.0 175.2 113.0 174.6 120.5 173.5 C128.0 172.4 118.8 169.9 125.5 169.2 C132.2 168.5 149.3 168.6 160.6 169.2 C171.9 169.8 186.6 172.8 193.3 173.0 C200.0 173.2 196.2 171.8 200.8 170.5 C205.4 169.2 214.4 166.8 220.9 165.5 C227.4 164.2 236.8 163.4 240.0 163.0" fill="none" stroke="#f6d696" stroke-width="0.82" stroke-linejoin="round" stroke-linecap="round" />
<path d="M23.0 193.0 C26.7 193.2 38.0 194.5 45.0 194.3 C52.0 194.1 59.5 193.3 65.2 191.8 C70.9 190.3 76.5 188.2 79.0 185.5 C81.5 182.8 80.1 177.2 80.3 175.5" fill="none" stroke="#f6d696" stroke-width="0.82" stroke-linejoin="round" stroke-linecap="round" />
<path d="M23.0 246.5 C25.8 246.7 33.8 248.4 40.0 247.8 C46.2 247.2 53.5 243.5 60.2 242.7 C66.9 241.8 73.0 242.9 80.3 242.7 C87.6 242.5 97.4 241.3 104.1 241.5 C110.8 241.7 114.4 243.6 120.5 244.0 C126.6 244.4 133.8 243.6 140.5 244.0 C147.2 244.4 153.9 245.7 160.6 246.5 C167.3 247.3 174.8 248.4 180.7 249.0 C186.6 249.6 191.2 250.3 195.8 250.3 C200.4 250.3 203.4 249.6 208.3 249.0 C213.2 248.4 219.7 248.0 225.0 246.5 C230.3 245.0 235.2 242.4 240.0 240.0 C244.8 237.6 249.0 234.3 254.0 232.0 C259.0 229.7 267.3 227.0 270.0 226.0" fill="none" stroke="#f6d696" stroke-width="0.82" stroke-linejoin="round" stroke-linecap="round" />
<path d="M195.8 252.8 C193.3 254.5 186.6 259.0 180.7 262.8 C174.8 266.6 167.3 272.5 160.6 275.4 C153.9 278.3 147.2 277.5 140.5 280.4 C133.8 283.3 126.8 289.6 120.5 293.0 C114.2 296.4 107.9 297.6 102.9 300.5 C97.9 303.4 94.1 307.1 90.3 310.5 C86.5 313.9 82.7 318.2 80.3 320.6 C77.9 323.0 76.7 324.3 76.0 325.0" fill="none" stroke="#f6d696" stroke-width="0.82" stroke-linejoin="round" stroke-linecap="round" />
<path d="M104.1 244.0 C101.8 245.9 95.9 252.2 90.3 255.3 C84.7 258.4 76.0 259.5 70.2 262.8 C64.4 266.1 59.0 272.5 55.2 275.4 C51.4 278.3 49.0 272.1 47.6 280.4 C46.2 288.7 47.2 317.6 47.1 325.0" fill="none" stroke="#f6d696" stroke-width="0.82" stroke-linejoin="round" stroke-linecap="round" />
<path d="M40.0 247.8 C40.2 250.3 40.0 259.0 41.3 262.8 C42.6 266.6 46.5 267.5 47.6 270.4 C48.7 273.3 47.6 278.7 47.6 280.4" fill="none" stroke="#f8e2b2" stroke-width="0.656" stroke-linejoin="round" stroke-linecap="round" />
<path d="M223.4 193.0 C222.6 196.7 220.5 208.0 218.4 215.0 C216.3 222.0 213.8 229.2 210.9 235.0 C208.0 240.8 202.5 247.5 200.8 250.0" fill="none" stroke="#f6d696" stroke-width="0.82" stroke-linejoin="round" stroke-linecap="round" />
<path d="M200.8 255.0 C201.6 258.3 203.7 269.1 205.8 275.0 C207.9 280.9 212.6 285.0 213.4 290.5 C214.2 296.0 210.9 302.2 210.9 308.0 C210.9 313.8 213.0 322.2 213.4 325.0" fill="none" stroke="#f6d696" stroke-width="0.82" stroke-linejoin="round" stroke-linecap="round" />
<path d="M242.0 165.0 C241.0 167.5 237.7 174.2 236.0 180.0 C234.3 185.8 233.3 193.0 232.0 200.0 C230.7 207.0 229.3 214.3 228.0 222.0 C226.7 229.7 225.0 239.3 224.0 246.0 C223.0 252.7 222.0 256.3 222.0 262.0 C222.0 267.7 222.7 274.8 224.0 280.0 C225.3 285.2 229.0 290.8 230.0 293.0" fill="none" stroke="#f6d696" stroke-width="0.82" stroke-linejoin="round" stroke-linecap="round" />
<path d="M242.0 165.0 C243.3 168.3 247.3 178.3 250.0 185.0 C252.7 191.7 255.3 198.8 258.0 205.0 C260.7 211.2 262.8 224.5 266.0 222.0 C269.2 219.5 275.2 195.3 277.0 190.0" fill="none" stroke="#f8e2b2" stroke-width="0.656" stroke-linejoin="round" stroke-linecap="round" />
<path d="M240.0 163.0 C239.0 164.2 236.7 167.8 234.0 170.0 C231.3 172.2 228.0 174.3 224.0 176.0 C220.0 177.7 214.0 178.3 210.0 180.0 C206.0 181.7 203.3 182.7 200.0 186.0 C196.7 189.3 193.7 194.7 190.0 200.0 C186.3 205.3 180.0 215.0 178.0 218.0" fill="none" stroke="#f8e2b2" stroke-width="0.656" stroke-linejoin="round" stroke-linecap="round" />
<path d="M244.0 132.0 L243.0 146.0 L242.0 163.0" fill="none" stroke="#f6d696" stroke-width="0.82" stroke-linejoin="round" stroke-linecap="round" />
<path d="M244.0 132.0 L232.0 126.0 L222.0 128.0" fill="none" stroke="#f8e2b2" stroke-width="0.656" stroke-linejoin="round" stroke-linecap="round" />
<path d="M244.0 132.0 C244.3 129.2 246.2 120.3 246.0 115.0 C245.8 109.7 243.8 104.7 243.0 100.0 C242.2 95.3 241.3 89.2 241.0 87.0" fill="none" stroke="#f8e2b2" stroke-width="0.656" stroke-linejoin="round" stroke-linecap="round" />
<path d="M213.0 128.0 L200.0 122.0 L184.0 112.0" fill="none" stroke="#f8e2b2" stroke-width="0.656" stroke-linejoin="round" stroke-linecap="round" />
<path d="M314.3 68.0 C314.5 70.8 314.0 80.1 315.5 85.0 C317.0 89.9 320.8 93.4 323.1 97.6 C325.4 101.8 328.1 106.0 329.3 110.2 C330.6 114.4 329.8 119.0 330.6 122.8 C331.5 126.6 332.7 129.9 334.4 132.8 C336.1 135.7 338.7 137.4 340.6 140.3 C342.5 143.2 344.9 146.7 346.0 150.0 C347.1 153.3 346.8 156.2 346.9 160.0 C347.0 163.8 347.9 168.8 346.9 173.0 C345.8 177.2 342.5 181.0 340.6 185.5 C338.7 190.0 338.2 194.9 335.6 200.0 C333.0 205.1 327.5 210.7 325.0 216.0 C322.5 221.3 321.4 227.8 320.4 232.0 C319.4 236.2 319.4 239.9 319.2 241.5" fill="none" stroke="#f6d696" stroke-width="0.82" stroke-linejoin="round" stroke-linecap="round" />
<path d="M255.0 168.0 C256.2 167.2 259.5 164.3 262.0 163.0 C264.5 161.7 266.9 160.8 270.0 160.0 C273.1 159.2 275.3 159.1 280.4 157.9 C285.5 156.7 295.1 155.8 300.5 152.9 C305.9 150.0 308.0 143.7 313.0 140.3 C318.0 137.0 324.3 134.3 330.6 132.8 C336.9 131.3 345.3 131.5 350.7 131.5 C356.1 131.5 357.3 132.6 363.2 132.8 C369.1 133.0 379.5 133.6 385.8 132.8 C392.1 132.0 395.2 129.5 400.9 127.8 C406.6 126.1 416.8 123.6 420.0 122.8" fill="none" stroke="#f6d696" stroke-width="0.82" stroke-linejoin="round" stroke-linecap="round" />
<path d="M300.5 152.9 L320.0 153.5 L340.0 152.0" fill="none" stroke="#f6d696" stroke-width="0.82" stroke-linejoin="round" stroke-linecap="round" />
<path d="M254.7 170.5 C258.1 170.9 265.8 172.8 275.3 173.0 C284.8 173.2 302.6 172.3 311.8 171.7 C321.0 171.1 324.5 169.2 330.6 169.2 C336.7 169.2 342.8 170.6 348.2 171.7 C353.6 172.8 357.8 174.4 363.2 175.5 C368.6 176.6 376.0 176.8 380.8 178.0 C385.6 179.2 388.5 181.7 392.0 183.0 C395.5 184.3 400.3 185.5 402.0 186.0" fill="none" stroke="#f6d696" stroke-width="0.82" stroke-linejoin="round" stroke-linecap="round" />
<path d="M308.0 152.9 C308.4 155.8 310.5 162.7 310.5 170.5 C310.5 178.3 310.4 193.1 308.0 200.0 C305.6 206.9 299.8 208.8 296.0 212.0 C292.2 215.2 286.8 217.8 285.0 219.0" fill="none" stroke="#f6d696" stroke-width="0.82" stroke-linejoin="round" stroke-linecap="round" />
<path d="M257.0 172.0 C258.2 175.8 260.5 187.8 264.0 195.0 C267.5 202.2 274.2 209.8 277.8 215.0 C281.4 220.2 283.6 220.9 285.3 226.4 C287.0 231.9 286.6 241.9 287.8 247.8 C289.1 253.7 291.6 255.3 292.8 261.6 C294.1 267.9 295.7 278.9 295.3 285.4 C294.9 291.9 293.2 295.5 290.3 300.5 C287.4 305.5 281.2 311.5 277.8 315.6 C274.4 319.7 271.5 323.4 270.2 325.0" fill="none" stroke="#f6d696" stroke-width="0.82" stroke-linejoin="round" stroke-linecap="round" />
<path d="M380.8 178.0 C379.1 180.1 374.2 186.9 370.8 190.6 C367.4 194.3 364.2 195.8 360.7 200.0 C357.2 204.2 354.4 210.7 350.0 216.0 C345.6 221.3 339.1 227.8 334.0 232.0 C328.9 236.2 324.0 238.0 319.2 241.5 C314.4 245.0 309.8 249.5 305.4 252.8 C301.0 256.2 294.9 260.1 292.8 261.6" fill="none" stroke="#f6d696" stroke-width="0.82" stroke-linejoin="round" stroke-linecap="round" />
<path d="M380.8 178.0 C381.0 181.7 381.5 193.8 382.0 200.0 C382.5 206.2 383.3 209.2 384.0 215.0 C384.7 220.8 386.3 229.2 386.0 235.0 C385.7 240.8 381.7 244.8 382.0 250.0 C382.3 255.2 385.7 261.3 388.0 266.0 C390.3 270.7 395.3 273.9 395.8 278.0 C396.3 282.1 391.2 286.8 390.8 290.5 C390.4 294.2 390.4 297.6 393.3 300.5 C396.2 303.4 405.9 306.8 408.4 308.0" fill="none" stroke="#f6d696" stroke-width="0.82" stroke-linejoin="round" stroke-linecap="round" />
<path d="M380.8 176.8 C383.3 175.3 390.9 170.7 395.9 168.0 C400.9 165.3 406.2 162.9 410.9 160.4 C415.6 157.9 419.8 155.9 424.0 153.0 C428.2 150.1 432.3 145.8 436.0 143.0 C439.7 140.2 444.3 137.2 446.0 136.0" fill="none" stroke="#f6d696" stroke-width="0.82" stroke-linejoin="round" stroke-linecap="round" />
<path d="M220.0 212.6 C225.7 213.0 243.9 212.8 254.4 215.1 C264.9 217.4 273.2 225.3 282.8 226.4 C292.4 227.5 303.3 222.9 311.7 221.4 C320.1 219.9 326.5 218.4 333.0 217.6 C339.5 216.8 342.7 216.8 350.6 216.4 C358.6 216.0 372.1 215.9 380.7 215.1 C389.3 214.2 396.9 211.7 402.1 211.3 C407.3 211.0 408.4 213.1 412.0 213.0 C415.6 212.9 419.3 210.8 424.0 211.0 C428.7 211.2 434.0 213.7 440.0 214.0 C446.0 214.3 452.7 213.1 460.0 212.8 C467.3 212.5 476.7 212.7 484.0 212.0 C491.3 211.3 498.8 209.3 504.0 208.8 C509.2 208.3 513.5 208.8 515.4 208.8" fill="none" stroke="#f6d696" stroke-width="0.82" stroke-linejoin="round" stroke-linecap="round" />
<path d="M220.0 265.3 C224.2 265.1 236.7 264.1 245.1 264.1 C253.5 264.1 262.2 265.5 270.2 265.3 C278.1 265.1 284.4 262.4 292.8 262.8 C301.2 263.2 312.9 267.5 320.4 267.9 C327.9 268.3 331.7 266.6 338.0 265.3 C344.3 264.0 351.8 260.7 358.1 260.3 C364.4 259.9 369.4 263.2 375.7 262.8 C382.0 262.4 389.9 259.5 395.8 257.8 C401.7 256.1 408.4 253.6 410.9 252.8" fill="none" stroke="#f6d696" stroke-width="0.82" stroke-linejoin="round" stroke-linecap="round" />
<path d="M320.4 190.0 C320.2 194.2 319.4 206.5 319.2 215.1 C319.0 223.7 319.0 232.7 319.2 241.5 C319.4 250.3 319.3 259.7 320.4 267.9 C321.4 276.1 324.9 283.8 325.5 290.5 C326.1 297.2 323.8 302.2 324.2 308.0 C324.6 313.8 327.4 322.2 328.0 325.0" fill="none" stroke="#f6d696" stroke-width="0.82" stroke-linejoin="round" stroke-linecap="round" />
<path d="M410.9 205.1 C411.3 208.9 414.2 219.8 413.4 227.7 C412.5 235.6 408.7 246.5 405.8 252.8 C402.9 259.1 397.5 263.2 395.8 265.3" fill="none" stroke="#f6d696" stroke-width="0.82" stroke-linejoin="round" stroke-linecap="round" />
<path d="M440.0 272.9 C436.8 275.4 426.6 284.1 420.9 287.9 C415.2 291.7 410.8 292.6 405.8 295.5 C400.8 298.4 395.8 302.6 390.8 305.5 C385.8 308.4 381.6 310.6 375.7 313.1 C369.8 315.6 359.0 319.4 355.6 320.6" fill="none" stroke="#f6d696" stroke-width="0.82" stroke-linejoin="round" stroke-linecap="round" />
<path d="M282.0 226.0 C280.0 228.3 273.3 235.7 270.0 240.0 C266.7 244.3 264.7 248.3 262.0 252.0 C259.3 255.7 256.7 259.3 254.0 262.0 C251.3 264.7 247.3 267.0 246.0 268.0" fill="none" stroke="#f8e2b2" stroke-width="0.656" stroke-linejoin="round" stroke-linecap="round" />
<path d="M285.0 219.0 L300.0 230.0 L319.0 241.0" fill="none" stroke="#f8e2b2" stroke-width="0.656" stroke-linejoin="round" stroke-linecap="round" />
<path d="M285.0 219.0 C282.8 217.8 276.8 214.3 272.0 212.0 C267.2 209.7 261.0 208.3 256.0 205.0 C251.0 201.7 244.3 194.2 242.0 192.0" fill="none" stroke="#f8e2b2" stroke-width="0.656" stroke-linejoin="round" stroke-linecap="round" />
<path d="M285.0 219.0 C285.8 215.8 287.5 205.7 290.0 200.0 C292.5 194.3 296.7 189.8 300.0 185.0 C303.3 180.2 308.3 173.3 310.0 171.0" fill="none" stroke="#f8e2b2" stroke-width="0.656" stroke-linejoin="round" stroke-linecap="round" />
<path d="M432.6 137.8 C435.5 137.0 443.9 134.5 450.2 132.8 C456.5 131.1 462.8 129.1 470.3 127.8 C477.8 126.5 488.3 124.9 495.4 125.3 C502.5 125.7 507.1 127.8 513.0 130.3 C518.9 132.8 526.0 137.4 530.6 140.3 C535.2 143.2 537.2 146.4 540.6 147.9 C544.0 149.4 545.7 149.5 550.7 149.1 C555.7 148.7 564.1 146.4 570.8 145.4 C577.5 144.4 585.9 143.7 590.9 142.8 C595.9 142.0 599.2 140.7 600.9 140.3" fill="none" stroke="#f6d696" stroke-width="0.82" stroke-linejoin="round" stroke-linecap="round" />
<path d="M540.6 147.9 C540.4 150.8 539.4 159.7 539.4 165.5 C539.4 171.3 540.8 178.4 540.6 183.0 C540.4 187.6 538.5 191.3 538.1 193.0" fill="none" stroke="#f6d696" stroke-width="0.82" stroke-linejoin="round" stroke-linecap="round" />
<path d="M540.6 147.9 C541.9 144.6 546.1 135.3 548.2 127.8 C550.3 120.3 552.8 111.1 553.2 102.7 C553.6 94.3 551.4 83.4 550.7 77.6 C550.0 71.8 549.3 69.6 549.0 68.0" fill="none" stroke="#f6d696" stroke-width="0.82" stroke-linejoin="round" stroke-linecap="round" />
<path d="M400.0 125.3 C402.9 124.5 412.2 122.3 417.6 120.2 C423.0 118.1 427.2 115.2 432.6 112.7 C438.0 110.2 443.9 107.7 450.2 105.2 C456.5 102.7 464.0 99.5 470.3 97.6 C476.6 95.7 482.9 95.6 487.9 93.9 C492.9 92.2 496.3 89.9 500.5 87.6 C504.7 85.3 508.0 83.4 513.0 80.1 C518.0 76.8 527.7 70.0 530.6 68.0" fill="none" stroke="#f6d696" stroke-width="0.82" stroke-linejoin="round" stroke-linecap="round" />
<path d="M422.6 114.0 L418.8 92.6 L417.6 68.0" fill="none" stroke="#f6d696" stroke-width="0.82" stroke-linejoin="round" stroke-linecap="round" />
<path d="M495.4 97.6 C495.1 103.0 493.8 123.0 493.7 129.8 C493.6 136.7 494.1 135.4 495.0 138.7 C495.9 142.0 498.2 146.7 499.2 149.7 C500.2 152.7 500.3 153.8 501.2 156.6 C502.1 159.3 504.0 162.8 504.7 166.2 C505.4 169.6 505.3 173.9 505.3 177.1 C505.3 180.3 505.5 181.6 504.7 185.4 C503.9 189.2 502.3 195.2 500.5 200.0 C498.7 204.8 496.4 209.7 494.0 214.0 C491.6 218.3 488.7 221.7 486.0 226.0 C483.3 230.3 479.3 237.7 478.0 240.0" fill="none" stroke="#f6d696" stroke-width="0.82" stroke-linejoin="round" stroke-linecap="round" />
<path d="M417.6 162.9 C423.0 162.5 440.6 160.4 450.2 160.4 C459.8 160.4 466.9 162.9 475.3 162.9 C483.7 162.9 493.0 160.0 500.5 160.4 C508.0 160.8 514.6 163.0 520.5 165.5 C526.4 168.0 533.1 173.8 535.6 175.5" fill="none" stroke="#f8e2b2" stroke-width="0.656" stroke-linejoin="round" stroke-linecap="round" />
<path d="M400.0 183.0 C404.2 183.4 414.6 185.5 425.1 185.5 C435.6 185.5 450.2 183.4 462.8 183.0 C475.4 182.6 490.9 182.6 500.5 183.0 C510.1 183.4 514.6 184.7 520.5 185.5 C526.4 186.3 533.1 187.6 535.6 188.0" fill="none" stroke="#f6d696" stroke-width="0.82" stroke-linejoin="round" stroke-linecap="round" />
<path d="M590.0 68.0 C589.7 70.7 589.3 79.0 588.0 84.0 C586.7 89.0 583.8 93.3 582.0 98.0 C580.2 102.7 578.2 107.3 577.0 112.0 C575.8 116.7 575.2 121.3 574.5 126.0 C573.8 130.7 572.8 134.6 572.5 140.3 C572.2 146.0 572.6 154.1 573.0 160.4 C573.4 166.7 574.5 175.1 574.8 178.0" fill="none" stroke="#f6d696" stroke-width="0.82" stroke-linejoin="round" stroke-linecap="round" />
<path d="M620.0 110.2 C618.5 113.1 614.2 122.8 611.0 127.8 C607.8 132.8 603.4 136.5 600.9 140.3 C598.4 144.1 598.4 146.2 595.9 150.4 C593.4 154.6 589.1 161.3 585.8 165.5 C582.4 169.7 579.6 172.6 575.8 175.5 C572.0 178.4 567.4 180.9 563.2 183.0 C559.0 185.1 554.5 186.3 550.7 188.0 C546.9 189.7 543.6 191.1 540.6 193.1 C537.6 195.1 536.4 196.8 533.0 200.0 C529.6 203.2 524.5 208.6 520.3 212.6 C516.1 216.6 511.6 221.0 507.8 223.9 C504.1 226.8 501.2 228.3 497.8 230.2 C494.4 232.1 491.1 233.5 487.7 235.2 C484.3 236.9 480.2 238.1 477.7 240.2 C475.2 242.3 474.4 244.0 472.7 247.8 C471.0 251.6 468.2 257.4 467.6 262.8 C467.0 268.2 469.1 274.9 468.9 280.4 C468.7 285.8 467.4 290.7 466.4 295.5 C465.3 300.3 463.7 304.4 462.6 309.3 C461.5 314.2 460.4 322.4 460.0 325.0" fill="none" stroke="#f6d696" stroke-width="0.82" stroke-linejoin="round" stroke-linecap="round" />
<path d="M599.0 143.5 C597.2 144.6 592.0 147.9 588.0 150.0 C584.0 152.1 579.3 154.3 575.0 156.0 C570.7 157.7 565.8 158.3 562.0 160.0 C558.2 161.7 555.0 163.0 552.0 166.0 C549.0 169.0 545.3 176.0 544.0 178.0" fill="none" stroke="#f8e2b2" stroke-width="0.656" stroke-linejoin="round" stroke-linecap="round" />
<path d="M599.0 143.5 C598.7 140.9 597.8 133.2 597.0 128.0 C596.2 122.8 595.2 117.0 594.0 112.0 C592.8 107.0 590.7 100.3 590.0 98.0" fill="none" stroke="#f8e2b2" stroke-width="0.656" stroke-linejoin="round" stroke-linecap="round" />
<path d="M651.7 68.0 C651.6 69.6 652.2 76.0 650.8 77.7 C649.4 79.5 645.9 77.8 643.3 78.5 C640.7 79.2 637.1 80.3 635.0 81.8 C632.9 83.3 632.2 85.3 630.8 87.7 C629.4 90.1 628.9 92.7 626.7 96.0 C624.5 99.3 619.5 104.1 617.5 107.7 C615.5 111.3 616.6 114.2 615.0 117.7 C613.4 121.2 610.2 125.6 608.0 129.0 C605.8 132.4 603.0 136.5 602.0 138.0" fill="none" stroke="#f6d696" stroke-width="0.82" stroke-linejoin="round" stroke-linecap="round" />
<path d="M440.0 215.1 C443.3 214.9 453.3 214.3 460.0 213.9 C466.7 213.5 472.9 213.2 480.2 212.6 C487.5 212.0 498.1 210.7 504.0 210.1 C509.9 209.5 511.7 209.8 515.4 208.8 C519.1 207.8 523.1 205.5 526.0 204.0 C528.9 202.5 531.8 200.7 533.0 200.0" fill="none" stroke="#f8e2b2" stroke-width="0.656" stroke-linejoin="round" stroke-linecap="round" />
<path d="M440.0 250.3 L455.0 246.5 L471.4 244.0" fill="none" stroke="#f8e2b2" stroke-width="0.656" stroke-linejoin="round" stroke-linecap="round" />
<path d="M440.0 272.9 C442.1 273.7 448.0 276.2 452.6 277.9 C457.2 279.6 463.4 280.9 467.6 283.0 C471.8 285.1 473.9 287.6 477.7 290.5 C481.5 293.4 486.8 298.0 490.2 300.5 C493.6 303.0 496.5 304.7 497.8 305.5" fill="none" stroke="#f6d696" stroke-width="0.82" stroke-linejoin="round" stroke-linecap="round" />
<path d="M424.0 180.0 C425.0 182.7 428.0 190.7 430.0 196.0 C432.0 201.3 433.7 206.7 436.0 212.0 C438.3 217.3 441.3 223.3 444.0 228.0 C446.7 232.7 451.3 235.0 452.0 240.0 C452.7 245.0 450.0 252.5 448.0 258.0 C446.0 263.5 441.3 270.5 440.0 273.0" fill="none" stroke="#f8e2b2" stroke-width="0.656" stroke-linejoin="round" stroke-linecap="round" />
<path d="M533.0 200.0 C532.5 202.3 531.5 209.7 530.0 214.0 C528.5 218.3 526.3 222.3 524.0 226.0 C521.7 229.7 517.3 234.3 516.0 236.0" fill="none" stroke="#f8e2b2" stroke-width="0.656" stroke-linejoin="round" stroke-linecap="round" />
<path d="M509.0 225.0 C509.8 226.5 512.5 230.5 514.0 234.0 C515.5 237.5 517.7 242.0 518.0 246.0 C518.3 250.0 516.3 256.0 516.0 258.0" fill="none" stroke="#f8e2b2" stroke-width="0.656" stroke-linejoin="round" stroke-linecap="round" />
<path d="M412.0 213.0 C413.3 210.8 417.3 203.8 420.0 200.0 C422.7 196.2 426.0 194.0 428.0 190.0 C430.0 186.0 430.7 181.0 432.0 176.0 C433.3 171.0 435.3 165.5 436.0 160.0 C436.7 154.5 436.0 145.8 436.0 143.0" fill="none" stroke="#f8e2b2" stroke-width="0.656" stroke-linejoin="round" stroke-linecap="round" />
<path d="M371.0 176.0 C371.2 178.3 372.5 185.2 372.0 190.0 C371.5 194.8 370.7 200.7 368.0 205.0 C365.3 209.3 358.0 214.2 356.0 216.0" fill="none" stroke="#f8e2b2" stroke-width="0.656" stroke-linejoin="round" stroke-linecap="round" />
<path d="M66.5 68.0 L66.5 117.2" fill="none" stroke="#6b6b6b" stroke-width="0.7" stroke-linejoin="round" stroke-linecap="round" stroke-dasharray="3 .9" opacity=".78"/>
<path d="M63.9 117.5 L175.7 117.5" fill="none" stroke="#6b6b6b" stroke-width="0.7" stroke-linejoin="round" stroke-linecap="round" stroke-dasharray="3 .9" opacity=".78"/>
<path d="M63.9 117.2 C63.8 117.7 63.4 119.1 63.3 120.0 C63.3 120.9 63.3 121.8 63.7 122.6 C64.1 123.5 65.5 124.2 65.8 125.0 C66.1 125.9 65.8 126.9 65.5 127.8 C65.2 128.6 64.3 129.3 63.9 130.1 C63.6 131.0 63.6 131.8 63.5 132.7 C63.3 133.5 63.1 134.4 63.0 135.2 C62.9 136.1 62.8 137.0 62.8 137.8 C62.9 138.7 63.1 139.5 63.3 140.4 C63.6 141.2 63.9 142.1 64.2 142.9 C64.5 143.8 64.7 144.7 65.1 145.4 C65.6 146.1 66.6 146.6 67.1 147.3 C67.5 148.1 67.5 149.1 67.8 149.9 C68.2 150.6 68.8 151.3 69.2 152.1 C69.5 152.9 69.5 153.9 69.9 154.7 C70.2 155.5 71.0 156.1 71.2 156.9 C71.4 157.6 70.9 158.4 71.1 159.2 C71.3 159.9 72.1 160.5 72.4 161.2 C72.7 162.0 72.9 162.7 73.1 163.5 C73.4 164.2 73.8 164.9 74.0 165.6 C74.2 166.4 74.0 167.2 74.3 167.9 C74.6 168.7 75.6 169.3 75.8 170.2 C76.1 171.0 75.7 172.1 76.0 173.0 C76.2 173.8 76.9 174.5 77.2 175.4 C77.5 176.2 77.9 177.1 77.9 178.0 C77.9 178.8 77.2 179.7 77.3 180.6 C77.3 181.4 78.0 182.2 78.2 183.0 C78.4 183.9 78.2 184.7 78.4 185.6 C78.6 186.4 79.1 187.2 79.3 188.0 C79.4 188.9 79.2 189.7 79.3 190.6 C79.4 191.4 79.8 192.3 80.0 193.2 C80.2 194.1 80.3 195.1 80.5 195.9 C80.8 196.7 81.2 197.3 81.5 198.0 C81.9 198.7 82.1 199.5 82.5 200.2 C82.9 200.9 83.2 201.6 83.7 202.2 C84.3 202.8 85.5 203.0 85.8 203.7 C86.2 204.4 85.6 205.6 85.9 206.4 C86.1 207.2 86.8 207.7 87.3 208.3 C87.8 208.9 88.4 209.4 88.9 210.1 C89.3 210.8 89.5 211.7 89.9 212.4 C90.4 213.1 91.2 213.5 91.7 214.1 C92.3 214.7 92.7 215.5 93.3 216.1 C93.9 216.6 95.1 216.8 95.4 217.5 C95.7 218.3 94.9 219.5 95.0 220.4 C95.0 221.2 95.2 222.1 95.7 222.9 C96.1 223.6 97.5 224.2 97.8 225.0 C98.2 225.8 97.8 226.9 97.6 227.7 C97.4 228.6 96.8 229.2 96.6 230.1 C96.3 230.9 96.4 231.9 96.2 232.7 C96.0 233.6 95.1 234.6 95.3 235.2 C95.5 235.8 96.8 235.7 97.5 236.1 C98.2 236.6 98.6 237.6 99.4 237.9 C100.1 238.2 101.1 237.8 101.9 238.1 C102.7 238.3 103.5 238.4 104.0 239.2 C104.5 240.0 104.8 242.1 105.0 242.7" fill="none" stroke="#6d7a86" stroke-width="0.75" stroke-linejoin="round" stroke-linecap="round" opacity=".85"/>
<path d="M23.0 132.8 C23.4 132.9 24.8 133.0 25.6 133.3 C26.4 133.7 27.0 134.5 27.8 134.9 C28.5 135.3 29.5 135.2 30.3 135.6 C31.1 135.9 31.7 136.6 32.5 137.0 C33.3 137.4 34.2 137.9 35.0 137.9 C35.8 137.8 36.6 136.9 37.4 136.6 C38.2 136.4 39.0 136.1 39.9 136.2 C40.7 136.4 41.7 137.5 42.6 137.6 C43.4 137.6 44.1 136.6 45.0 136.4 C45.8 136.3 46.9 136.3 47.7 136.7 C48.5 137.1 49.0 138.5 49.9 138.8 C50.7 139.0 51.8 138.3 52.7 138.3 C53.5 138.4 54.4 138.8 55.1 139.2 C55.9 139.6 56.5 140.0 57.1 140.6 C57.7 141.1 58.1 142.0 58.8 142.4 C59.5 142.9 60.6 142.8 61.3 143.3 C61.9 143.8 62.4 145.1 62.6 145.5" fill="none" stroke="#6d7a86" stroke-width="0.75" stroke-linejoin="round" stroke-linecap="round" opacity=".85"/>
<path d="M143.0 68.0 C143.1 68.4 143.6 69.5 143.8 70.3 C144.1 71.1 144.4 71.9 144.4 72.7 C144.5 73.5 144.2 74.4 144.2 75.2 C144.2 76.0 144.1 76.9 144.5 77.6 C144.9 78.2 146.0 78.3 146.5 78.9 C147.0 79.5 147.3 80.4 147.6 81.2 C147.9 82.0 147.9 83.0 148.4 83.7 C148.9 84.4 149.8 84.6 150.4 85.1 C151.1 85.6 151.6 86.4 152.4 86.7 C153.2 87.0 154.3 86.7 155.1 87.1 C155.8 87.4 156.1 88.4 156.8 88.9 C157.5 89.3 158.4 89.4 159.2 89.7 C159.9 90.0 160.7 90.3 161.4 90.8 C162.0 91.2 162.6 91.9 163.2 92.4 C163.9 92.9 164.7 93.2 165.2 93.9 C165.6 94.6 165.4 95.9 165.9 96.6 C166.3 97.3 167.1 97.6 167.7 98.1 C168.3 98.6 168.8 99.2 169.4 99.8 C170.0 100.3 170.4 101.0 171.1 101.4 C171.7 101.9 172.9 102.0 173.3 102.6 C173.8 103.2 173.9 104.2 174.0 105.1 C174.1 105.9 173.8 106.7 173.8 107.6 C173.8 108.4 173.9 109.2 174.0 110.0 C174.1 110.8 174.1 111.7 174.2 112.5 C174.3 113.3 174.2 114.1 174.5 114.9 C174.8 115.7 175.7 116.3 176.0 117.2 C176.2 118.0 176.0 119.0 176.1 119.9 C176.2 120.8 176.4 121.7 176.6 122.6 C176.9 123.5 177.3 124.3 177.6 125.2 C177.9 126.0 178.1 127.0 178.4 127.8 C178.7 128.5 179.0 129.2 179.5 129.9 C180.0 130.5 181.1 130.8 181.4 131.5 C181.7 132.3 181.0 133.7 181.2 134.5 C181.4 135.3 182.0 135.9 182.6 136.5 C183.1 137.1 183.8 137.6 184.4 138.3 C184.9 138.9 185.4 139.5 185.8 140.2 C186.2 140.9 186.3 142.0 186.8 142.6 C187.3 143.2 188.4 143.2 189.0 143.8 C189.5 144.3 189.7 145.3 190.2 145.9 C190.7 146.5 191.3 147.1 191.9 147.5 C192.6 148.0 193.5 148.3 194.1 148.7 C194.8 149.2 195.4 149.7 195.8 150.4 C196.3 151.1 196.2 152.1 196.6 153.0 C196.9 153.8 197.4 154.6 197.8 155.4 C198.3 156.1 199.0 156.8 199.3 157.7 C199.6 158.5 199.9 159.5 199.7 160.4 C199.5 161.2 198.3 161.8 198.1 162.7 C197.9 163.6 198.6 164.8 198.6 165.8 C198.5 166.7 198.1 167.5 197.6 168.3 C197.1 169.1 196.4 169.8 195.7 170.5 C195.0 171.1 194.3 171.7 193.5 172.1 C192.6 172.6 191.6 172.6 190.7 172.9 C189.8 173.3 189.1 173.9 188.3 174.3 C187.4 174.7 186.6 175.1 185.7 175.6 C184.9 176.1 183.7 176.6 183.2 177.4 C182.7 178.3 183.3 179.9 182.9 180.8 C182.5 181.8 181.1 182.2 180.7 183.0 C180.4 183.8 181.1 184.8 181.0 185.6 C180.8 186.4 180.0 187.2 179.8 188.0 C179.7 188.9 180.3 189.8 180.2 190.6 C180.2 191.5 180.1 192.3 179.6 193.1 C179.1 193.9 177.8 194.4 177.2 195.2 C176.6 196.1 176.3 197.2 175.8 198.1 C175.3 198.9 174.9 199.6 174.3 200.3 C173.8 201.0 172.8 201.5 172.5 202.3 C172.1 203.1 172.1 204.2 172.1 205.1 C172.1 206.0 172.5 206.8 172.5 207.6 C172.4 208.4 172.2 209.3 171.8 210.1 C171.5 210.9 170.7 211.6 170.5 212.4 C170.3 213.3 170.3 214.2 170.6 215.0 C170.9 215.8 171.9 216.5 172.4 217.3 C172.9 218.1 173.1 219.0 173.5 219.8 C173.9 220.7 174.7 221.4 175.0 222.2 C175.4 223.1 175.2 224.3 175.7 225.0 C176.2 225.7 177.6 225.6 178.1 226.3 C178.6 227.0 178.4 228.3 178.7 229.1 C179.1 229.9 179.6 230.6 180.1 231.3 C180.6 232.0 181.1 232.7 181.7 233.3 C182.3 233.9 183.0 234.3 183.7 234.9 C184.3 235.5 184.7 236.2 185.5 236.7 C186.2 237.2 187.6 237.1 188.3 237.7 C189.0 238.2 189.4 239.1 189.8 239.9 C190.2 240.8 190.2 242.1 190.7 242.8 C191.3 243.5 192.4 243.5 193.2 244.1 C193.9 244.7 194.7 245.5 195.1 246.4 C195.6 247.3 195.4 248.6 195.9 249.5 C196.4 250.3 198.1 250.9 198.2 251.5 C198.3 252.2 196.8 252.5 196.5 253.3 C196.1 254.0 196.4 255.1 196.1 255.9 C195.8 256.7 194.9 257.2 194.7 257.9 C194.5 258.6 194.8 259.5 195.0 260.3 C195.3 261.1 195.9 261.8 196.1 262.7 C196.2 263.5 195.7 264.4 195.9 265.3 C196.0 266.1 196.4 267.3 197.0 267.8 C197.7 268.4 198.9 268.5 199.8 268.9 C200.6 269.3 201.5 269.7 202.1 270.3 C202.7 270.9 202.9 272.0 203.5 272.7 C204.1 273.4 205.1 273.6 205.7 274.3 C206.2 275.0 206.1 276.4 206.7 277.1 C207.3 277.7 208.5 277.8 209.2 278.3 C209.9 278.9 210.5 279.6 211.0 280.3 C211.5 281.0 212.3 281.8 212.3 282.7 C212.3 283.6 211.1 284.8 211.2 285.7 C211.3 286.5 212.5 287.1 212.9 287.9 C213.3 288.7 213.1 289.8 213.6 290.5 C214.0 291.1 215.0 291.2 215.6 291.8 C216.2 292.3 216.7 292.9 217.1 293.6 C217.6 294.3 218.2 295.0 218.2 295.9 C218.1 296.7 217.1 297.6 217.0 298.6 C216.9 299.5 217.5 300.6 217.3 301.5 C217.2 302.4 216.8 303.3 216.3 304.1 C215.8 304.9 214.9 305.5 214.3 306.3 C213.8 307.2 213.7 308.2 213.1 309.0 C212.5 309.7 211.0 310.1 210.7 310.8 C210.4 311.6 211.4 312.7 211.2 313.5 C211.1 314.3 210.3 314.9 209.9 315.7 C209.6 316.4 209.1 317.1 209.0 317.9 C208.8 318.7 209.4 319.6 209.2 320.4 C208.9 321.1 207.7 321.7 207.5 322.5 C207.4 323.2 207.9 324.6 208.0 325.0" fill="none" stroke="#6d7a86" stroke-width="0.75" stroke-linejoin="round" stroke-linecap="round" opacity=".85"/>
<path d="M189.5 146.5 L247.4 146.5" fill="none" stroke="#6b6b6b" stroke-width="0.7" stroke-linejoin="round" stroke-linecap="round" stroke-dasharray="3 .9" opacity=".78"/>
<path d="M82.8 200.5 L166.9 200.5 L171.9 205.0" fill="none" stroke="#6b6b6b" stroke-width="0.7" stroke-linejoin="round" stroke-linecap="round" stroke-dasharray="3 .9" opacity=".78"/>
<path d="M23.0 215.5 L91.5 215.5" fill="none" stroke="#6b6b6b" stroke-width="0.7" stroke-linejoin="round" stroke-linecap="round" stroke-dasharray="3 .9" opacity=".78"/>
<path d="M104.5 242.7 L104.5 325.0" fill="none" stroke="#6b6b6b" stroke-width="0.7" stroke-linejoin="round" stroke-linecap="round" stroke-dasharray="3 .9" opacity=".78"/>
<path d="M23.0 297.5 L104.9 297.5" fill="none" stroke="#6b6b6b" stroke-width="0.7" stroke-linejoin="round" stroke-linecap="round" stroke-dasharray="3 .9" opacity=".78"/>
<path d="M104.9 310.5 L199.6 310.5 L200.9 315.6 L196.0 323.0" fill="none" stroke="#6b6b6b" stroke-width="0.7" stroke-linejoin="round" stroke-linecap="round" stroke-dasharray="3 .9" opacity=".78"/>
<path d="M277.9 68.0 L271.6 85.0 L266.5 102.7 L264.0 120.2 L262.8 140.3 L261.5 147.9 L260.3 165.5 L255.2 168.0" fill="none" stroke="#6b6b6b" stroke-width="0.7" stroke-linejoin="round" stroke-linecap="round" stroke-dasharray="3 .9" opacity=".78"/>
<path d="M254.7 167.5 L348.2 167.5" fill="none" stroke="#6b6b6b" stroke-width="0.7" stroke-linejoin="round" stroke-linecap="round" stroke-dasharray="3 .9" opacity=".78"/>
<path d="M254.5 167.5 L254.5 232.7" fill="none" stroke="#6b6b6b" stroke-width="0.7" stroke-linejoin="round" stroke-linecap="round" stroke-dasharray="3 .9" opacity=".78"/>
<path d="M254.7 232.7 C254.7 233.2 255.1 234.6 254.8 235.4 C254.5 236.2 253.4 236.8 253.0 237.6 C252.6 238.4 252.7 239.3 252.4 240.1 C252.1 240.9 251.4 241.6 251.2 242.5 C251.1 243.3 251.4 244.4 251.5 245.2 C251.7 246.1 252.2 246.8 252.2 247.7 C252.2 248.5 251.6 249.4 251.5 250.3 C251.5 251.2 251.8 252.0 252.0 252.8 C252.2 253.6 252.9 254.6 252.7 255.3 C252.6 256.0 251.4 256.5 251.0 257.2 C250.6 257.9 250.7 258.9 250.3 259.6 C249.8 260.3 248.7 260.6 248.4 261.3 C248.0 262.1 248.5 263.3 248.3 264.1 C248.0 264.9 247.4 265.5 246.8 266.1 C246.3 266.7 245.2 267.0 244.9 267.8 C244.6 268.5 245.0 269.6 245.0 270.4 C245.0 271.3 245.0 272.2 244.8 273.0 C244.6 273.8 243.9 275.0 243.7 275.4" fill="none" stroke="#6d7a86" stroke-width="0.75" stroke-linejoin="round" stroke-linecap="round" opacity=".85"/>
<path d="M311.5 167.5 L311.5 239.0" fill="none" stroke="#6b6b6b" stroke-width="0.7" stroke-linejoin="round" stroke-linecap="round" stroke-dasharray="3 .9" opacity=".78"/>
<path d="M402.5 151.6 L402.5 224.3" fill="none" stroke="#6b6b6b" stroke-width="0.7" stroke-linejoin="round" stroke-linecap="round" stroke-dasharray="3 .9" opacity=".78"/>
<path d="M360.7 68.0 L364.5 90.0 L367.0 115.2 L363.2 130.3 L359.5 140.3 L356.0 148.0 L352.0 153.0 L348.0 158.5 L351.0 165.0 L358.0 168.6 L368.0 166.0 L380.0 160.6 L392.0 155.0 L404.0 149.6 L416.0 145.0 L428.0 141.4 L436.0 137.0 L437.0 131.0 L434.6 124.0 L431.6 117.6 L442.0 115.6 L460.0 113.6 L480.0 112.0 L487.6 104.0 L494.0 97.0 L503.0 89.5 L517.0 78.5 L533.0 72.5 L620.0 72.5 L640.0 72.5" fill="none" stroke="#6b6b6b" stroke-width="0.7" stroke-linejoin="round" stroke-linecap="round" stroke-dasharray="3 .9" opacity=".78"/>
<path d="M436.0 137.6 L427.0 142.0 L418.5 146.3 L418.5 160.5 L510.8 160.5" fill="none" stroke="#6b6b6b" stroke-width="0.7" stroke-linejoin="round" stroke-linecap="round" stroke-dasharray="3 .9" opacity=".78"/>
<path d="M510.8 160.4 C511.0 160.7 511.7 161.7 512.1 162.3 C512.6 163.0 513.0 163.7 513.6 164.2 C514.2 164.7 515.0 164.8 515.6 165.5 C516.2 166.2 516.5 167.5 517.0 168.6 C517.5 169.6 518.0 170.6 518.5 171.6 C518.9 172.5 518.9 173.6 519.5 174.1 C520.2 174.7 521.6 174.5 522.4 175.0 C523.1 175.4 523.8 176.6 524.1 176.9" fill="none" stroke="#6d7a86" stroke-width="0.75" stroke-linejoin="round" stroke-linecap="round" opacity=".85"/>
<path d="M524.5 177.1 L524.5 178.0" fill="none" stroke="#6b6b6b" stroke-width="0.7" stroke-linejoin="round" stroke-linecap="round" stroke-dasharray="3 .9" opacity=".78"/>
<path d="M402.1 205.1 C402.2 205.5 402.7 206.8 402.6 207.6 C402.5 208.5 401.6 209.3 401.4 210.1 C401.1 210.9 401.3 211.7 401.3 212.6 C401.3 213.4 401.3 214.3 401.4 215.1 C401.5 215.9 401.9 216.8 401.7 217.6 C401.6 218.5 400.6 219.2 400.4 220.1 C400.2 220.9 400.8 221.7 400.6 222.6 C400.4 223.4 399.6 224.3 399.1 225.1 C398.6 226.0 398.0 226.8 397.5 227.7 C396.9 228.5 396.5 229.5 395.9 230.3 C395.4 231.1 395.0 232.0 394.4 232.5 C393.7 233.0 392.7 233.1 391.9 233.4 C391.1 233.8 390.3 234.0 389.6 234.6 C389.0 235.1 388.9 236.4 388.2 236.9 C387.6 237.4 386.3 237.1 385.6 237.5 C384.9 238.0 384.6 238.9 384.0 239.4 C383.4 239.9 382.6 240.2 382.0 240.7 C381.4 241.1 381.0 242.1 380.2 242.3 C379.4 242.5 377.9 241.6 377.2 241.9 C376.4 242.2 376.2 243.2 375.6 243.9 C375.1 244.5 374.2 245.1 373.8 245.8 C373.4 246.6 373.2 247.4 373.0 248.3 C372.8 249.2 373.1 250.3 372.8 251.1 C372.4 251.8 371.6 252.3 370.8 252.9 C370.0 253.4 369.0 253.8 368.2 254.5 C367.4 255.1 366.9 256.3 366.1 256.8 C365.2 257.3 363.9 257.5 362.9 257.5 C362.0 257.5 361.3 257.0 360.5 256.8 C359.6 256.5 358.6 256.4 357.8 255.9 C357.0 255.4 356.5 254.1 355.7 253.8 C354.9 253.5 353.7 254.3 352.9 253.9 C352.1 253.5 351.7 251.9 350.9 251.5 C350.1 251.1 349.0 251.5 348.1 251.5 C347.2 251.6 346.4 251.6 345.5 251.8 C344.7 252.0 343.9 252.5 343.1 252.7 C342.2 252.8 341.4 252.8 340.5 252.8 C339.6 252.8 338.7 252.7 337.8 252.6 C336.9 252.4 336.0 252.4 335.2 252.0 C334.4 251.6 333.9 250.4 333.1 250.1 C332.3 249.7 331.1 250.3 330.3 250.0 C329.5 249.6 329.0 248.4 328.2 248.1 C327.4 247.8 326.1 248.5 325.4 248.0 C324.8 247.5 324.7 245.9 324.1 245.0 C323.5 244.2 322.6 243.7 321.9 243.0 C321.1 242.4 320.2 241.9 319.3 241.4 C318.5 240.9 317.7 240.5 316.9 240.2 C316.0 239.9 315.1 239.9 314.3 239.7 C313.4 239.5 312.1 238.5 311.7 238.9 C311.4 239.2 312.2 241.0 312.0 242.0 C311.9 243.0 311.2 243.9 310.9 244.9 C310.6 245.8 310.5 246.9 310.2 247.8 C309.9 248.6 309.8 249.4 309.2 249.9 C308.5 250.4 307.1 250.1 306.5 250.5 C305.8 251.0 305.8 252.0 305.2 252.6 C304.6 253.2 303.8 253.7 303.0 254.2 C302.2 254.7 301.4 255.1 300.5 255.5 C299.7 255.9 298.6 256.1 297.9 256.5 C297.2 257.0 297.0 257.9 296.4 258.4 C295.7 258.8 294.4 258.7 293.8 259.2 C293.2 259.7 293.3 260.8 292.9 261.7 C292.4 262.5 291.7 263.6 290.9 264.2 C290.0 264.9 288.9 265.2 288.0 265.5 C287.1 265.8 286.3 265.9 285.5 266.2 C284.7 266.4 283.8 266.5 283.1 267.0 C282.4 267.5 282.2 268.7 281.5 269.1 C280.8 269.5 279.8 269.4 279.0 269.6 C278.2 269.7 277.3 269.8 276.5 269.9 C275.6 270.0 274.7 269.9 274.0 270.2 C273.2 270.6 272.8 271.5 272.0 271.8 C271.3 272.1 270.3 271.8 269.5 272.0 C268.7 272.3 268.1 272.7 267.4 273.1 C266.6 273.4 266.0 273.9 265.2 274.0 C264.4 274.2 263.4 274.0 262.5 273.9 C261.6 273.7 260.8 273.4 260.0 273.1 C259.2 272.7 258.5 271.9 257.7 271.7 C256.8 271.5 255.7 271.3 254.9 271.6 C254.1 271.9 253.5 273.2 252.7 273.6 C251.9 274.0 251.0 273.8 250.1 274.0 C249.1 274.3 248.1 274.9 247.1 275.1 C246.1 275.4 244.6 275.1 244.0 275.7 C243.3 276.2 243.9 277.5 243.4 278.3 C242.9 279.0 241.4 279.4 240.8 280.1 C240.2 280.9 240.5 282.1 239.9 282.8 C239.4 283.5 238.5 284.0 237.7 284.4 C236.8 284.8 235.8 284.7 234.9 285.1 C234.0 285.4 233.2 285.9 232.4 286.3 C231.5 286.8 230.7 287.2 229.9 287.7 C229.1 288.1 228.2 288.3 227.7 289.0 C227.2 289.6 227.3 290.8 226.8 291.4 C226.3 292.1 225.5 292.5 224.8 292.8 C224.0 293.1 223.1 292.8 222.3 293.2 C221.6 293.5 221.0 294.4 220.3 294.8 C219.5 295.3 218.3 295.6 217.9 295.8" fill="none" stroke="#6d7a86" stroke-width="0.75" stroke-linejoin="round" stroke-linecap="round" opacity=".85"/>
<path d="M363.1 257.8 C363.1 258.3 362.5 259.7 362.8 260.5 C363.2 261.3 364.6 261.9 365.1 262.7 C365.6 263.4 366.0 264.2 365.9 265.1 C365.9 266.0 364.5 267.3 364.7 268.1 C364.8 269.0 366.5 269.4 366.9 270.2 C367.3 271.0 367.0 272.0 367.1 272.8 C367.3 273.7 367.2 274.7 367.6 275.5 C367.9 276.3 368.8 276.9 369.1 277.8 C369.3 278.7 368.7 279.8 369.0 280.7 C369.3 281.5 370.4 282.1 370.9 282.8 C371.3 283.6 371.0 284.8 371.6 285.4 C372.1 286.0 373.5 285.9 374.1 286.5 C374.7 287.0 374.8 288.0 375.3 288.7 C375.7 289.4 376.9 290.2 376.8 290.7 C376.7 291.1 375.4 291.2 374.6 291.4 C373.9 291.7 372.9 291.9 372.2 292.3 C371.4 292.7 370.8 293.3 370.2 293.9 C369.6 294.5 369.1 295.3 368.3 295.8 C367.6 296.2 366.5 296.0 365.8 296.5 C365.1 296.9 364.8 297.8 364.3 298.5 C363.8 299.2 363.3 299.9 362.7 300.5 C362.1 301.1 361.6 301.6 360.7 302.0 C359.9 302.4 358.6 302.4 357.7 302.9 C356.8 303.4 356.3 304.4 355.5 305.0 C354.7 305.6 353.8 306.3 352.9 306.6 C352.1 306.8 351.3 306.6 350.5 306.7 C349.7 306.7 348.8 306.5 348.0 306.7 C347.1 306.9 346.0 307.7 345.6 308.0" fill="none" stroke="#6d7a86" stroke-width="0.75" stroke-linejoin="round" stroke-linecap="round" opacity=".85"/>
<path d="M216.0 310.0 L245.0 308.5 L345.6 308.5 L440.0 308.5 L500.3 309.3" fill="none" stroke="#6b6b6b" stroke-width="0.7" stroke-linejoin="round" stroke-linecap="round" stroke-dasharray="3 .9" opacity=".78"/>
<path d="M377.0 290.5 C377.4 290.6 378.5 290.8 379.3 290.9 C380.1 291.0 380.8 291.4 381.6 291.2 C382.4 291.0 383.1 289.8 383.9 289.9 C384.7 289.9 385.4 291.5 386.2 291.5 C387.0 291.5 387.7 290.0 388.5 289.9 C389.3 289.7 390.0 290.8 390.8 290.6 C391.6 290.5 392.2 289.2 393.1 289.1 C393.9 288.9 395.1 289.9 395.9 289.7 C396.8 289.5 397.3 288.2 398.1 287.9 C398.9 287.6 400.0 288.3 400.8 288.0 C401.6 287.8 402.3 286.9 403.0 286.3 C403.7 285.8 404.4 285.2 405.0 284.5 C405.5 283.8 405.8 282.9 406.4 282.2 C407.0 281.5 407.8 281.0 408.6 280.6 C409.3 280.2 410.4 280.3 411.0 279.7 C411.5 279.0 411.4 277.4 411.9 276.8 C412.5 276.2 413.6 276.2 414.4 275.9 C415.3 275.7 416.3 275.6 416.9 275.1 C417.6 274.6 418.1 273.8 418.5 273.0 C418.9 272.2 419.2 271.2 419.5 270.3 C419.9 269.4 420.0 268.4 420.5 267.7 C421.1 266.9 422.5 266.6 423.0 265.7 C423.4 264.9 422.7 263.4 423.2 262.7 C423.6 261.9 424.9 261.8 425.7 261.3 C426.4 260.8 427.2 260.3 427.7 259.5 C428.2 258.8 428.1 257.4 428.6 256.7 C429.2 256.0 430.3 255.7 430.9 255.2 C431.6 254.7 431.9 254.0 432.6 253.5 C433.2 253.0 434.0 252.8 434.7 252.4 C435.3 251.9 435.6 251.0 436.2 250.6 C436.9 250.2 438.0 250.3 438.7 249.9 C439.4 249.5 439.7 248.7 440.2 248.0 C440.7 247.3 440.9 246.3 441.6 245.7 C442.3 245.2 443.7 245.4 444.3 244.8 C444.9 244.1 444.5 242.5 445.0 241.8 C445.5 241.1 446.6 241.0 447.3 240.4 C448.0 239.8 448.5 239.0 449.1 238.2 C449.6 237.4 450.2 236.7 450.6 235.8 C451.0 234.9 451.1 233.2 451.5 233.1 C451.9 233.0 452.4 234.6 453.0 235.0 C453.6 235.5 454.5 235.8 455.3 236.0 C456.1 236.2 457.3 235.8 458.0 236.1 C458.8 236.4 459.5 238.0 459.9 237.8 C460.3 237.7 460.7 235.9 460.4 235.1 C460.2 234.2 458.7 233.6 458.4 232.8 C458.1 232.0 459.4 231.0 458.8 230.2 C458.2 229.4 455.5 228.3 454.9 227.9" fill="none" stroke="#6d7a86" stroke-width="0.75" stroke-linejoin="round" stroke-linecap="round" opacity=".85"/>
<path d="M402.1 224.5 L504.0 224.5 L506.6 221.0 L510.4 222.0" fill="none" stroke="#6b6b6b" stroke-width="0.7" stroke-linejoin="round" stroke-linecap="round" stroke-dasharray="3 .9" opacity=".78"/>
<path d="M424.7 223.9 C424.6 224.4 424.1 225.7 424.2 226.7 C424.3 227.6 425.1 228.5 425.3 229.4 C425.5 230.3 425.4 231.3 425.3 232.2 C425.2 233.1 424.5 234.0 424.5 234.9 C424.4 235.9 424.6 237.4 425.0 237.7 C425.4 238.0 426.2 237.1 426.8 236.6 C427.4 236.2 428.1 235.8 428.6 235.1 C429.0 234.4 428.8 233.0 429.4 232.5 C430.0 232.0 431.3 232.4 432.0 232.0 C432.7 231.6 432.9 230.6 433.5 230.2 C434.1 229.8 435.0 229.8 435.8 229.6 C436.5 229.5 437.4 229.6 438.2 229.4 C438.9 229.1 439.4 228.1 440.1 228.0 C440.9 227.9 441.8 228.3 442.6 228.8 C443.3 229.2 443.9 230.3 444.7 230.8 C445.5 231.3 446.9 231.0 447.4 231.6 C447.9 232.1 447.1 233.3 447.6 234.0 C448.1 234.6 449.9 234.7 450.3 235.4 C450.6 236.2 449.3 237.6 449.5 238.3 C449.7 239.1 450.7 240.1 451.5 240.1 C452.2 240.2 453.0 238.9 454.0 238.7 C454.9 238.4 456.1 238.8 457.2 238.7 C458.2 238.6 459.2 237.8 460.1 237.9 C460.9 238.0 461.4 239.2 462.2 239.4 C463.1 239.6 464.3 238.9 465.2 239.1 C466.0 239.3 466.6 240.1 467.5 240.4 C468.4 240.7 469.9 240.4 470.6 241.1 C471.4 241.7 471.4 243.6 472.2 244.3 C472.9 245.0 474.9 244.5 475.3 245.1 C475.6 245.6 474.4 246.8 474.2 247.7 C474.0 248.6 474.2 249.6 474.0 250.5 C473.8 251.4 473.6 252.3 473.2 253.1 C472.8 253.9 471.8 254.6 471.7 255.4 C471.6 256.2 472.1 257.1 472.5 257.9 C472.8 258.7 473.4 259.5 473.8 260.4 C474.2 261.2 474.4 262.2 475.0 262.9 C475.6 263.6 476.5 264.3 477.4 264.7 C478.3 265.1 479.4 264.8 480.3 265.2 C481.1 265.6 481.5 266.8 482.4 267.2 C483.2 267.7 484.4 267.3 485.3 267.7 C486.1 268.1 486.6 269.3 487.4 269.6 C488.3 269.9 489.6 269.1 490.4 269.4 C491.3 269.8 491.6 271.3 492.4 271.7 C493.3 272.1 494.5 271.5 495.4 271.7 C496.3 271.9 497.0 272.7 497.8 272.9 C498.6 273.0 499.5 272.8 500.3 272.5 C501.1 272.2 501.8 271.5 502.7 271.2 C503.5 270.9 504.3 270.8 505.2 270.8 C506.0 270.8 506.9 271.3 507.8 271.3 C508.7 271.4 509.5 271.4 510.4 271.2 C511.2 271.0 512.4 270.3 512.8 270.1" fill="none" stroke="#6d7a86" stroke-width="0.75" stroke-linejoin="round" stroke-linecap="round" opacity=".85"/>
<path d="M503.5 227.7 L503.5 257.5 L516.6 257.5" fill="none" stroke="#6b6b6b" stroke-width="0.7" stroke-linejoin="round" stroke-linecap="round" stroke-dasharray="3 .9" opacity=".78"/>
<path d="M554.2 103.0 L553.0 115.2 L555.7 140.3" fill="none" stroke="#6b6b6b" stroke-width="0.7" stroke-linejoin="round" stroke-linecap="round" stroke-dasharray="3 .9" opacity=".78"/>
<path d="M593.4 68.0 C593.3 68.4 593.1 69.8 593.0 70.7 C593.0 71.6 593.3 72.5 593.2 73.4 C593.1 74.3 592.5 75.1 592.4 76.0 C592.2 76.9 592.4 77.9 592.2 78.8 C592.0 79.7 591.3 80.5 591.0 81.3 C590.7 82.2 590.6 83.2 590.3 84.0 C590.0 84.9 589.8 85.6 589.5 86.4 C589.1 87.1 588.4 87.7 588.1 88.5 C587.8 89.3 588.2 90.4 587.8 91.1 C587.5 91.8 586.4 92.2 586.0 92.9 C585.5 93.5 585.5 94.5 585.1 95.2 C584.7 95.9 584.1 96.4 583.5 97.1 C582.9 97.7 581.8 98.2 581.5 99.0 C581.3 99.8 582.0 101.0 581.9 101.8 C581.7 102.6 580.9 103.1 580.5 104.0 C580.2 104.8 580.1 106.1 579.8 107.1 C579.4 108.0 578.9 109.0 578.5 110.0 C578.0 110.9 577.4 111.9 576.9 112.9 C576.3 113.8 575.6 114.7 575.2 115.7 C574.8 116.7 574.7 117.8 574.4 118.8 C574.2 119.9 573.9 121.0 573.7 122.0 C573.4 123.0 573.0 123.8 572.9 124.6 C572.8 125.5 573.1 126.4 573.2 127.3 C573.3 128.2 573.6 129.1 573.4 130.0 C573.2 130.9 572.3 131.9 572.1 132.9 C571.8 133.9 571.9 134.9 571.7 136.0 C571.6 137.2 571.1 139.2 571.0 139.8" fill="none" stroke="#6d7a86" stroke-width="0.75" stroke-linejoin="round" stroke-linecap="round" opacity=".85"/>
<path d="M600.9 68.0 L602.2 90.0 L603.4 115.2 L605.9 127.8 L611.0 134.0" fill="none" stroke="#6b6b6b" stroke-width="0.7" stroke-linejoin="round" stroke-linecap="round" stroke-dasharray="3 .9" opacity=".78"/>
<path d="M555.7 139.5 L595.9 139.5 L608.4 137.8" fill="none" stroke="#6b6b6b" stroke-width="0.7" stroke-linejoin="round" stroke-linecap="round" stroke-dasharray="3 .9" opacity=".78"/>
<path d="M550.7 159.5 L595.9 159.5 L605.0 161.0" fill="none" stroke="#6b6b6b" stroke-width="0.7" stroke-linejoin="round" stroke-linecap="round" stroke-dasharray="3 .9" opacity=".78"/>
<path d="M555.7 139.8 L553.0 150.0 L550.7 159.2 L549.4 180.0 L545.7 188.0 L552.0 185.6" fill="none" stroke="#6b6b6b" stroke-width="0.7" stroke-linejoin="round" stroke-linecap="round" stroke-dasharray="3 .9" opacity=".78"/>
<path d="M596.5 159.2 L596.5 180.0" fill="none" stroke="#6b6b6b" stroke-width="0.7" stroke-linejoin="round" stroke-linecap="round" stroke-dasharray="3 .9" opacity=".78"/>
<path d="M550.7 185.5 L585.8 180.5" fill="none" stroke="#6b6b6b" stroke-width="0.7" stroke-linejoin="round" stroke-linecap="round" stroke-dasharray="3 .9" opacity=".78"/>
<path d="M598.0 181.0 L602.0 186.0" fill="none" stroke="#6b6b6b" stroke-width="0.7" stroke-linejoin="round" stroke-linecap="round" stroke-dasharray="3 .9" opacity=".78"/>
<path d="M629.0 176.0 L625.0 182.0" fill="none" stroke="#6b6b6b" stroke-width="0.7" stroke-linejoin="round" stroke-linecap="round" stroke-dasharray="3 .9" opacity=".78"/>
<path d="M686.5 68.0 L688.6 71.0 L690.6 75.5" fill="none" stroke="#6b6b6b" stroke-width="0.7" stroke-linejoin="round" stroke-linecap="round" stroke-dasharray="3 .9" opacity=".78"/>
<path d="M697.0 84.0 L741.0 55.0" fill="none" stroke="#6b6b6b" stroke-width="0.7" stroke-linejoin="round" stroke-linecap="round" stroke-dasharray="3 .9" opacity=".78"/>
<path d="M524.5 178.0 C524.2 178.4 523.3 179.6 522.6 180.4 C521.9 181.1 520.8 181.6 520.3 182.4 C519.8 183.3 520.1 184.6 519.5 185.4 C519.0 186.2 518.0 186.5 517.2 187.2 C516.5 187.9 515.5 188.7 515.1 189.6 C514.7 190.5 514.7 191.8 514.7 192.8 C514.7 193.7 515.4 194.4 515.4 195.2 C515.4 195.9 515.0 196.7 514.8 197.4 C514.5 198.2 513.8 199.0 514.0 199.7 C514.3 200.4 515.4 201.0 516.1 201.5 C516.8 202.1 517.9 202.2 518.4 202.9 C518.9 203.5 518.7 204.9 519.2 205.6 C519.7 206.3 520.9 206.3 521.4 207.0 C522.0 207.6 522.5 208.7 522.2 209.5 C522.0 210.2 520.7 210.8 520.0 211.5 C519.3 212.3 518.9 213.4 518.0 214.0 C517.2 214.6 515.7 214.6 514.9 215.3 C514.1 216.0 513.8 217.4 513.1 218.2 C512.5 218.9 511.5 219.0 510.9 219.6 C510.2 220.2 509.9 220.9 509.2 221.7 C508.4 222.5 506.8 223.8 506.4 224.2" fill="none" stroke="#6d7a86" stroke-width="0.75" stroke-linejoin="round" stroke-linecap="round" opacity=".85"/>
<path d="M524.5 178.0 L541.1 188.3" fill="none" stroke="#6b6b6b" stroke-width="0.7" stroke-linejoin="round" stroke-linecap="round" stroke-dasharray="3 .9" opacity=".78"/>
<g transform="translate(22.9 107.5)"><path d="M0.3 1.6 Q3.4 0 6.5 1.6 L6.6 3.2 Q6.4 6.4 3.4 8.2 Q0.4 6.4 0.2 3.2 Z" fill="#2a59ad" stroke="#fff" stroke-width=".5"/><path d="M0.5 1.7 Q3.4 0.2 6.3 1.7 L6.4 2.9 H0.4 Z" fill="#d43b3b"/><path d="M1.9 4 H4.9 M1.9 5.4 H4.9" stroke="#fff" stroke-width=".8" opacity=".8" stroke-dasharray="1.2 .5"/></g>
<g transform="translate(72.4 108.7)"><path d="M0.3 1.6 Q3.4 0 6.5 1.6 L6.6 3.2 Q6.4 6.4 3.4 8.2 Q0.4 6.4 0.2 3.2 Z" fill="#2a59ad" stroke="#fff" stroke-width=".5"/><path d="M0.5 1.7 Q3.4 0.2 6.3 1.7 L6.4 2.9 H0.4 Z" fill="#d43b3b"/><path d="M1.9 4 H4.9 M1.9 5.4 H4.9" stroke="#fff" stroke-width=".8" opacity=".8" stroke-dasharray="1.2 .5"/></g>
<g transform="translate(129.6 92.4)"><path d="M0.3 1.6 Q3.4 0 6.5 1.6 L6.6 3.2 Q6.4 6.4 3.4 8.2 Q0.4 6.4 0.2 3.2 Z" fill="#2a59ad" stroke="#fff" stroke-width=".5"/><path d="M0.5 1.7 Q3.4 0.2 6.3 1.7 L6.4 2.9 H0.4 Z" fill="#d43b3b"/><path d="M1.9 4 H4.9 M1.9 5.4 H4.9" stroke="#fff" stroke-width=".8" opacity=".8" stroke-dasharray="1.2 .5"/></g>
<g transform="translate(181.1 100.7)"><path d="M0.3 1.6 Q3.4 0 6.5 1.6 L6.6 3.2 Q6.4 6.4 3.4 8.2 Q0.4 6.4 0.2 3.2 Z" fill="#2a59ad" stroke="#fff" stroke-width=".5"/><path d="M0.5 1.7 Q3.4 0.2 6.3 1.7 L6.4 2.9 H0.4 Z" fill="#d43b3b"/><path d="M1.9 4 H4.9 M1.9 5.4 H4.9" stroke="#fff" stroke-width=".8" opacity=".8" stroke-dasharray="1.2 .5"/></g>
<g transform="translate(68.1 152.7)"><path d="M0.3 1.6 Q3.4 0 6.5 1.6 L6.6 3.2 Q6.4 6.4 3.4 8.2 Q0.4 6.4 0.2 3.2 Z" fill="#2a59ad" stroke="#fff" stroke-width=".5"/><path d="M0.5 1.7 Q3.4 0.2 6.3 1.7 L6.4 2.9 H0.4 Z" fill="#d43b3b"/><path d="M1.9 4 H4.9 M1.9 5.4 H4.9" stroke="#fff" stroke-width=".8" opacity=".8" stroke-dasharray="1.2 .5"/></g>
<g transform="translate(157.2 164.7)"><path d="M0.3 1.6 Q3.4 0 6.5 1.6 L6.6 3.2 Q6.4 6.4 3.4 8.2 Q0.4 6.4 0.2 3.2 Z" fill="#2a59ad" stroke="#fff" stroke-width=".5"/><path d="M0.5 1.7 Q3.4 0.2 6.3 1.7 L6.4 2.9 H0.4 Z" fill="#d43b3b"/><path d="M1.9 4 H4.9 M1.9 5.4 H4.9" stroke="#fff" stroke-width=".8" opacity=".8" stroke-dasharray="1.2 .5"/></g>
<g transform="translate(114.0 206.6)"><path d="M0.3 1.6 Q3.4 0 6.5 1.6 L6.6 3.2 Q6.4 6.4 3.4 8.2 Q0.4 6.4 0.2 3.2 Z" fill="#2a59ad" stroke="#fff" stroke-width=".5"/><path d="M0.5 1.7 Q3.4 0.2 6.3 1.7 L6.4 2.9 H0.4 Z" fill="#d43b3b"/><path d="M1.9 4 H4.9 M1.9 5.4 H4.9" stroke="#fff" stroke-width=".8" opacity=".8" stroke-dasharray="1.2 .5"/></g>
<g transform="translate(220.5 252.0)"><path d="M0.3 1.6 Q3.4 0 6.5 1.6 L6.6 3.2 Q6.4 6.4 3.4 8.2 Q0.4 6.4 0.2 3.2 Z" fill="#2a59ad" stroke="#fff" stroke-width=".5"/><path d="M0.5 1.7 Q3.4 0.2 6.3 1.7 L6.4 2.9 H0.4 Z" fill="#d43b3b"/><path d="M1.9 4 H4.9 M1.9 5.4 H4.9" stroke="#fff" stroke-width=".8" opacity=".8" stroke-dasharray="1.2 .5"/></g>
<g transform="translate(43.7 302.0)"><path d="M0.3 1.6 Q3.4 0 6.5 1.6 L6.6 3.2 Q6.4 6.4 3.4 8.2 Q0.4 6.4 0.2 3.2 Z" fill="#2a59ad" stroke="#fff" stroke-width=".5"/><path d="M0.5 1.7 Q3.4 0.2 6.3 1.7 L6.4 2.9 H0.4 Z" fill="#d43b3b"/><path d="M1.9 4 H4.9 M1.9 5.4 H4.9" stroke="#fff" stroke-width=".8" opacity=".8" stroke-dasharray="1.2 .5"/></g>
<g transform="translate(324.7 107.0)"><path d="M0.3 1.6 Q3.4 0 6.5 1.6 L6.6 3.2 Q6.4 6.4 3.4 8.2 Q0.4 6.4 0.2 3.2 Z" fill="#2a59ad" stroke="#fff" stroke-width=".5"/><path d="M0.5 1.7 Q3.4 0.2 6.3 1.7 L6.4 2.9 H0.4 Z" fill="#d43b3b"/><path d="M1.9 4 H4.9 M1.9 5.4 H4.9" stroke="#fff" stroke-width=".8" opacity=".8" stroke-dasharray="1.2 .5"/></g>
<g transform="translate(304.6 150.9)"><path d="M0.3 1.6 Q3.4 0 6.5 1.6 L6.6 3.2 Q6.4 6.4 3.4 8.2 Q0.4 6.4 0.2 3.2 Z" fill="#2a59ad" stroke="#fff" stroke-width=".5"/><path d="M0.5 1.7 Q3.4 0.2 6.3 1.7 L6.4 2.9 H0.4 Z" fill="#d43b3b"/><path d="M1.9 4 H4.9 M1.9 5.4 H4.9" stroke="#fff" stroke-width=".8" opacity=".8" stroke-dasharray="1.2 .5"/></g>
<g transform="translate(534.7 160.2)"><path d="M0.3 1.6 Q3.4 0 6.5 1.6 L6.6 3.2 Q6.4 6.4 3.4 8.2 Q0.4 6.4 0.2 3.2 Z" fill="#2a59ad" stroke="#fff" stroke-width=".5"/><path d="M0.5 1.7 Q3.4 0.2 6.3 1.7 L6.4 2.9 H0.4 Z" fill="#d43b3b"/><path d="M1.9 4 H4.9 M1.9 5.4 H4.9" stroke="#fff" stroke-width=".8" opacity=".8" stroke-dasharray="1.2 .5"/></g>
<g transform="translate(220.4 252.5)"><path d="M0.3 1.6 Q3.4 0 6.5 1.6 L6.6 3.2 Q6.4 6.4 3.4 8.2 Q0.4 6.4 0.2 3.2 Z" fill="#2a59ad" stroke="#fff" stroke-width=".5"/><path d="M0.5 1.7 Q3.4 0.2 6.3 1.7 L6.4 2.9 H0.4 Z" fill="#d43b3b"/><path d="M1.9 4 H4.9 M1.9 5.4 H4.9" stroke="#fff" stroke-width=".8" opacity=".8" stroke-dasharray="1.2 .5"/></g>
<g transform="translate(335.1 261.3)"><path d="M0.3 1.6 Q3.4 0 6.5 1.6 L6.6 3.2 Q6.4 6.4 3.4 8.2 Q0.4 6.4 0.2 3.2 Z" fill="#2a59ad" stroke="#fff" stroke-width=".5"/><path d="M0.5 1.7 Q3.4 0.2 6.3 1.7 L6.4 2.9 H0.4 Z" fill="#d43b3b"/><path d="M1.9 4 H4.9 M1.9 5.4 H4.9" stroke="#fff" stroke-width=".8" opacity=".8" stroke-dasharray="1.2 .5"/></g>
<g transform="translate(406.7 286.0)"><path d="M0.3 1.6 Q3.4 0 6.5 1.6 L6.6 3.2 Q6.4 6.4 3.4 8.2 Q0.4 6.4 0.2 3.2 Z" fill="#2a59ad" stroke="#fff" stroke-width=".5"/><path d="M0.5 1.7 Q3.4 0.2 6.3 1.7 L6.4 2.9 H0.4 Z" fill="#d43b3b"/><path d="M1.9 4 H4.9 M1.9 5.4 H4.9" stroke="#fff" stroke-width=".8" opacity=".8" stroke-dasharray="1.2 .5"/></g>
<g transform="translate(349.7 309.6)"><path d="M0.3 1.6 Q3.4 0 6.5 1.6 L6.6 3.2 Q6.4 6.4 3.4 8.2 Q0.4 6.4 0.2 3.2 Z" fill="#2a59ad" stroke="#fff" stroke-width=".5"/><path d="M0.5 1.7 Q3.4 0.2 6.3 1.7 L6.4 2.9 H0.4 Z" fill="#d43b3b"/><path d="M1.9 4 H4.9 M1.9 5.4 H4.9" stroke="#fff" stroke-width=".8" opacity=".8" stroke-dasharray="1.2 .5"/></g>
<g transform="translate(627.4 82.0)"><path d="M0.3 1.6 Q3.4 0 6.5 1.6 L6.6 3.2 Q6.4 6.4 3.4 8.2 Q0.4 6.4 0.2 3.2 Z" fill="#2a59ad" stroke="#fff" stroke-width=".5"/><path d="M0.5 1.7 Q3.4 0.2 6.3 1.7 L6.4 2.9 H0.4 Z" fill="#d43b3b"/><path d="M1.9 4 H4.9 M1.9 5.4 H4.9" stroke="#fff" stroke-width=".8" opacity=".8" stroke-dasharray="1.2 .5"/></g>
<g transform="translate(414.4 81.9)"><path d="M0.6 2.6 H6.6 V5.4 Q6.4 7.6 3.6 8.6 Q0.8 7.6 0.6 5.4 Z" fill="#fff" stroke="#333" stroke-width=".6"/><path d="M1.6 2.4 L1.4 0.8 L2.6 1.5 L3.6 0.5 L4.6 1.5 L5.8 0.8 L5.6 2.4 Z" fill="#333"/><rect x="1.8" y="4" width="3.6" height="2" fill="#333"/></g>
<g transform="translate(494.4 87.0)"><path d="M0.6 2.6 H6.6 V5.4 Q6.4 7.6 3.6 8.6 Q0.8 7.6 0.6 5.4 Z" fill="#fff" stroke="#333" stroke-width=".6"/><path d="M1.6 2.4 L1.4 0.8 L2.6 1.5 L3.6 0.5 L4.6 1.5 L5.8 0.8 L5.6 2.4 Z" fill="#333"/><rect x="1.8" y="4" width="3.6" height="2" fill="#333"/></g>
<text x="128.6" y="160.6" font-size="5.2" text-anchor="middle" fill="#424242" letter-spacing="0.6" stroke="#f1f3e6" stroke-width=".7" paint-order="stroke" stroke-linejoin="round">IOWA</text><text x="128.6" y="160.6" font-size="5.2" text-anchor="middle" fill="none" letter-spacing="0.6" stroke="#3a3a3a" stroke-width=".04">IOWA</text>
<text x="150" y="262.9" font-size="5.2" text-anchor="middle" fill="#424242" letter-spacing="0.71" stroke="#f1f3e6" stroke-width=".7" paint-order="stroke" stroke-linejoin="round">MISSOURI</text><text x="150" y="262.9" font-size="5.2" text-anchor="middle" fill="none" letter-spacing="0.71" stroke="#3a3a3a" stroke-width=".04">MISSOURI</text>
<text x="220.3" y="215.3" font-size="5.2" text-anchor="middle" fill="#424242" letter-spacing="0.94" stroke="#f1f3e6" stroke-width=".7" paint-order="stroke" stroke-linejoin="round">ILLINOIS</text><text x="220.3" y="215.3" font-size="5.2" text-anchor="middle" fill="none" letter-spacing="0.94" stroke="#3a3a3a" stroke-width=".04">ILLINOIS</text>
<text x="25.2" y="259.7" font-size="5.2" text-anchor="middle" fill="#424242" letter-spacing="0.75" stroke="#f1f3e6" stroke-width=".7" paint-order="stroke" stroke-linejoin="round">KANSAS</text><text x="25.2" y="259.7" font-size="5.2" text-anchor="middle" fill="none" letter-spacing="0.75" stroke="#3a3a3a" stroke-width=".04">KANSAS</text>
<text x="292.3" y="78.9" font-size="5.2" text-anchor="middle" fill="#424242" letter-spacing="1.0" stroke="#f1f3e6" stroke-width=".7" paint-order="stroke" stroke-linejoin="round">MICHIGAN</text><text x="292.3" y="78.9" font-size="5.2" text-anchor="middle" fill="none" letter-spacing="1.0" stroke="#3a3a3a" stroke-width=".04">MICHIGAN</text>
<text x="281" y="221.0" font-size="5.2" text-anchor="middle" fill="#424242" letter-spacing="1.0" stroke="#f1f3e6" stroke-width=".7" paint-order="stroke" stroke-linejoin="round">INDIANA</text><text x="281" y="221.0" font-size="5.2" text-anchor="middle" fill="none" letter-spacing="1.0" stroke="#3a3a3a" stroke-width=".04">INDIANA</text>
<text x="356.3" y="207.0" font-size="5.2" text-anchor="middle" fill="#424242" letter-spacing="0.75" stroke="#f1f3e6" stroke-width=".7" paint-order="stroke" stroke-linejoin="round">OHIO</text><text x="356.3" y="207.0" font-size="5.2" text-anchor="middle" fill="none" letter-spacing="0.75" stroke="#3a3a3a" stroke-width=".04">OHIO</text>
<text x="301.8" y="285.6" font-size="5.2" text-anchor="middle" fill="#424242" letter-spacing="0.7" stroke="#f1f3e6" stroke-width=".7" paint-order="stroke" stroke-linejoin="round">KENTUCKY</text><text x="301.8" y="285.6" font-size="5.2" text-anchor="middle" fill="none" letter-spacing="0.7" stroke="#3a3a3a" stroke-width=".04">KENTUCKY</text>
<text x="400.4" y="252.2" font-size="5.2" text-anchor="middle" fill="#424242" letter-spacing="0.45" stroke="#f1f3e6" stroke-width=".7" paint-order="stroke" stroke-linejoin="round">WEST</text><text x="400.4" y="252.2" font-size="5.2" text-anchor="middle" fill="none" letter-spacing="0.45" stroke="#3a3a3a" stroke-width=".04">WEST</text>
<text x="400.6" y="258.7" font-size="5.2" text-anchor="middle" fill="#424242" letter-spacing="0.85" stroke="#f1f3e6" stroke-width=".7" paint-order="stroke" stroke-linejoin="round">VIRGINIA</text><text x="400.6" y="258.7" font-size="5.2" text-anchor="middle" fill="none" letter-spacing="0.85" stroke="#3a3a3a" stroke-width=".04">VIRGINIA</text>
<text x="506.2" y="135.5" font-size="5.2" text-anchor="middle" fill="#424242" letter-spacing="0.7" stroke="#f1f3e6" stroke-width=".7" paint-order="stroke" stroke-linejoin="round">NEW YORK</text><text x="506.2" y="135.5" font-size="5.2" text-anchor="middle" fill="none" letter-spacing="0.7" stroke="#3a3a3a" stroke-width=".04">NEW YORK</text>
<text x="568" y="102.5" font-size="5.1" text-anchor="middle" fill="#424242" letter-spacing="0.73" stroke="#f1f3e6" stroke-width=".7" paint-order="stroke" stroke-linejoin="round">VERMONT</text><text x="568" y="102.5" font-size="5.1" text-anchor="middle" fill="none" letter-spacing="0.73" stroke="#3a3a3a" stroke-width=".04">VERMONT</text>
<text x="592.1" y="110.9" font-size="5.2" text-anchor="middle" fill="#424242" letter-spacing="0.7" stroke="#f1f3e6" stroke-width=".7" paint-order="stroke" stroke-linejoin="round">NEW</text><text x="592.1" y="110.9" font-size="5.2" text-anchor="middle" fill="none" letter-spacing="0.7" stroke="#3a3a3a" stroke-width=".04">NEW</text>
<text x="590.9" y="117.1" font-size="5.2" text-anchor="middle" fill="#424242" letter-spacing="0.75" stroke="#f1f3e6" stroke-width=".7" paint-order="stroke" stroke-linejoin="round">HAMPSHIRE</text><text x="590.9" y="117.1" font-size="5.2" text-anchor="middle" fill="none" letter-spacing="0.75" stroke="#3a3a3a" stroke-width=".04">HAMPSHIRE</text>
<text x="593.6" y="157.7" font-size="5.05" text-anchor="middle" fill="#424242" letter-spacing="0.3" stroke="#f1f3e6" stroke-width=".7" paint-order="stroke" stroke-linejoin="round">MASSACHUSETTS</text><text x="593.6" y="157.7" font-size="5.05" text-anchor="middle" fill="none" letter-spacing="0.3" stroke="#3a3a3a" stroke-width=".04">MASSACHUSETTS</text>
<text x="593.7" y="173.6" font-size="5.2" text-anchor="middle" fill="#424242" letter-spacing="0.6" stroke="#f1f3e6" stroke-width=".7" paint-order="stroke" stroke-linejoin="round">RHODE</text><text x="593.7" y="173.6" font-size="5.2" text-anchor="middle" fill="none" letter-spacing="0.6" stroke="#3a3a3a" stroke-width=".04">RHODE</text>
<text x="594" y="179.9" font-size="5.2" text-anchor="middle" fill="#424242" letter-spacing="0.85" stroke="#f1f3e6" stroke-width=".7" paint-order="stroke" stroke-linejoin="round">ISLAND</text><text x="594" y="179.9" font-size="5.2" text-anchor="middle" fill="none" letter-spacing="0.85" stroke="#3a3a3a" stroke-width=".04">ISLAND</text>
<text x="525.6" y="215.0" font-size="5.2" text-anchor="middle" fill="#424242" letter-spacing="0.34" stroke="#f1f3e6" stroke-width=".7" paint-order="stroke" stroke-linejoin="round">NEW JERSEY</text><text x="525.6" y="215.0" font-size="5.2" text-anchor="middle" fill="none" letter-spacing="0.34" stroke="#3a3a3a" stroke-width=".04">NEW JERSEY</text>
<text x="509" y="245.4" font-size="5.2" text-anchor="middle" fill="#424242" letter-spacing="0.5" stroke="#f1f3e6" stroke-width=".7" paint-order="stroke" stroke-linejoin="round">DELAWARE</text><text x="509" y="245.4" font-size="5.2" text-anchor="middle" fill="none" letter-spacing="0.5" stroke="#3a3a3a" stroke-width=".04">DELAWARE</text>
<text x="77.1" y="183.7" font-size="5.2" text-anchor="middle" fill="#2e2e2e" letter-spacing=".35" stroke="#f6f6f0" stroke-opacity=".75" stroke-width=".9" paint-order="stroke" stroke-linejoin="round">Omaha</text>
<text x="230.2" y="133.2" font-size="6.25" text-anchor="middle" fill="#2e2e2e" letter-spacing=".35" stroke="#f6f6f0" stroke-opacity=".75" stroke-width=".9" paint-order="stroke" stroke-linejoin="round">Milwaukee</text>
<text x="240" y="166.5" font-size="6.3" text-anchor="middle" fill="#2e2e2e" letter-spacing=".35" stroke="#f6f6f0" stroke-opacity=".75" stroke-width=".9" paint-order="stroke" stroke-linejoin="round">Chicago</text>
<text x="337.5" y="153.4" font-size="6.5" text-anchor="middle" fill="#2e2e2e" letter-spacing=".35" stroke="#f6f6f0" stroke-opacity=".75" stroke-width=".9" paint-order="stroke" stroke-linejoin="round">Detroit</text>
<text x="387" y="134.2" font-size="5.4" text-anchor="middle" fill="#2e2e2e" letter-spacing=".35" stroke="#f6f6f0" stroke-opacity=".75" stroke-width=".9" paint-order="stroke" stroke-linejoin="round">London</text>
<text x="377.7" y="176.6" font-size="5.25" text-anchor="middle" fill="#2e2e2e" letter-spacing=".35" stroke="#f6f6f0" stroke-opacity=".75" stroke-width=".9" paint-order="stroke" stroke-linejoin="round">Cleveland</text>
<text x="423.3" y="115.4" font-size="6.2" text-anchor="middle" fill="#2e2e2e" letter-spacing=".35" stroke="#f6f6f0" stroke-opacity=".75" stroke-width=".9" paint-order="stroke" stroke-linejoin="round">Toronto</text>
<text x="350" y="219.8" font-size="6.1" text-anchor="middle" fill="#2e2e2e" letter-spacing=".35" stroke="#f6f6f0" stroke-opacity=".75" stroke-width=".9" paint-order="stroke" stroke-linejoin="round">Columbus</text>
<text x="318.2" y="242.9" font-size="5.4" text-anchor="middle" fill="#2e2e2e" letter-spacing=".35" stroke="#f6f6f0" stroke-opacity=".75" stroke-width=".9" paint-order="stroke" stroke-linejoin="round">Cincinnati</text>
<text x="291" y="265.9" font-size="5.0" text-anchor="middle" fill="#2e2e2e" letter-spacing=".35" stroke="#f6f6f0" stroke-opacity=".75" stroke-width=".9" paint-order="stroke" stroke-linejoin="round">Louisville</text>
<text x="413.4" y="206.2" font-size="5.35" text-anchor="middle" fill="#2e2e2e" letter-spacing=".35" stroke="#f6f6f0" stroke-opacity=".75" stroke-width=".9" paint-order="stroke" stroke-linejoin="round">Pittsburgh</text>
<text x="267.7" y="321.6" font-size="6.3" text-anchor="middle" fill="#2e2e2e" letter-spacing=".35" stroke="#f6f6f0" stroke-opacity=".75" stroke-width=".9" paint-order="stroke" stroke-linejoin="round">Nashville</text>
<text x="417.8" y="323.7" font-size="5.3" text-anchor="middle" fill="#2e2e2e" letter-spacing=".35" stroke="#f6f6f0" stroke-opacity=".75" stroke-width=".9" paint-order="stroke" stroke-linejoin="round">Greensboro</text>
<text x="47.6" y="280.9" font-size="5.4" text-anchor="middle" fill="#2e2e2e" letter-spacing=".35" stroke="#f6f6f0" stroke-opacity=".75" stroke-width=".9" paint-order="stroke" stroke-linejoin="round">Wichita</text>
<text x="75.9" y="321.8" font-size="4.9" text-anchor="middle" fill="#2e2e2e" letter-spacing=".35" stroke="#f6f6f0" stroke-opacity=".75" stroke-width=".9" paint-order="stroke" stroke-linejoin="round">Tulsa</text>
<text x="105.4" y="243.4" font-size="5.3" text-anchor="middle" fill="#2e2e2e" letter-spacing=".35" stroke="#f6f6f0" stroke-opacity=".75" stroke-width=".9" paint-order="stroke" stroke-linejoin="round">Kansas City</text>
<text x="540" y="199.0" font-size="6.0" text-anchor="middle" fill="#2e2e2e" letter-spacing=".35" stroke="#f6f6f0" stroke-opacity=".75" stroke-width=".9" paint-order="stroke" stroke-linejoin="round">New York</text>
<text x="759.5" y="86.0" font-size="6.45" text-anchor="middle" fill="#2e2e2e" letter-spacing=".35" stroke="#f6f6f0" stroke-opacity=".75" stroke-width=".9" paint-order="stroke" stroke-linejoin="round">Halifax</text>
<text x="496.5" y="306.2" font-size="5.2" text-anchor="middle" fill="#2e2e2e" letter-spacing=".35" stroke="#f6f6f0" stroke-opacity=".75" stroke-width=".9" paint-order="stroke" stroke-linejoin="round">Virginia Beach</text>
<text x="271.2" y="103.6" font-size="6" text-anchor="middle" fill="#7d8c97" font-style="italic" letter-spacing=".3" stroke="#9adcf7" stroke-width=".7" paint-order="stroke">Lake</text>
<text x="271" y="110.4" font-size="6" text-anchor="middle" fill="#7d8c97" font-style="italic" letter-spacing=".3" stroke="#9adcf7" stroke-width=".7" paint-order="stroke">Michigan</text>
<text x="358.2" y="81.5" font-size="6" text-anchor="middle" fill="#7d8c97" font-style="italic" letter-spacing=".3" stroke="#9adcf7" stroke-width=".7" paint-order="stroke">Lake Huron</text>
<text x="387.7" y="158.9" font-size="6" text-anchor="middle" fill="#7d8c97" font-style="italic" letter-spacing=".3" stroke="#9adcf7" stroke-width=".7" paint-order="stroke">Lake Erie</text>
<text x="459.6" y="116.1" font-size="5.8" text-anchor="middle" fill="#7d8c97" font-style="italic" letter-spacing=".3" stroke="#9adcf7" stroke-width=".7" paint-order="stroke">Lake Ontario</text>
<text x="705" y="79.1" font-size="5.8" text-anchor="middle" fill="#7d8c97" font-style="italic" letter-spacing=".3" stroke="#9adcf7" stroke-width=".7" paint-order="stroke">Bay of Fundy</text>
<text x="492.7" y="270.0" font-size="5.8" text-anchor="middle" fill="#7d8c97" font-style="italic" letter-spacing=".3" stroke="#9adcf7" stroke-width=".7" paint-order="stroke">Chesapeake</text>
<text x="493.4" y="277.0" font-size="5.8" text-anchor="middle" fill="#7d8c97" font-style="italic" letter-spacing=".3" stroke="#9adcf7" stroke-width=".7" paint-order="stroke">Bay</text>
<text x="634" y="218.2" font-size="6.4" text-anchor="middle" fill="#7fa9c4" font-style="italic" letter-spacing=".8" stroke="#b9e6fa" stroke-width=".9" paint-order="stroke">North</text>
<text x="634" y="225.2" font-size="6.4" text-anchor="middle" fill="#7fa9c4" font-style="italic" letter-spacing=".8" stroke="#b9e6fa" stroke-width=".9" paint-order="stroke">Atlantic</text>
<text x="634" y="232.5" font-size="6.4" text-anchor="middle" fill="#7fa9c4" font-style="italic" letter-spacing=".8" stroke="#b9e6fa" stroke-width=".9" paint-order="stroke">Ocean</text>
<g transform="translate(213.5 130.4)"><path d="M0.5 -0.5 L7.6 -6.4 L10.4 -5 L5 -1.2 Z" fill="#000" opacity=".28" filter="url(#bl1)"/><path d="M0 0 C-2.9 -4.1 -5.8 -6.6 -5.8 -9.9 A5.8 5.8 0 0 1 5.8 -9.9 C5.8 -6.6 2.9 -4.1 0 0 Z" fill="#0b6423"/><text x="0.3" y="-6.6" font-size="9.2" text-anchor="middle" fill="#f4f8f4">L</text></g>
<g transform="translate(561.3 163.5)"><path d="M0.5 -0.5 L7.6 -6.4 L10.4 -5 L5 -1.2 Z" fill="#000" opacity=".28" filter="url(#bl1)"/><path d="M0 0 C-2.9 -4.1 -5.8 -6.6 -5.8 -9.9 A5.8 5.8 0 0 1 5.8 -9.9 C5.8 -6.6 2.9 -4.1 0 0 Z" fill="#0b6423"/><text x="0.3" y="-6.6" font-size="9.2" text-anchor="middle" fill="#f4f8f4">L</text></g>
<g transform="translate(357.2 318.4)"><path d="M0.5 -0.5 L7.6 -6.4 L10.4 -5 L5 -1.2 Z" fill="#000" opacity=".28" filter="url(#bl1)"/><path d="M0 0 C-2.9 -4.1 -5.8 -6.6 -5.8 -9.9 A5.8 5.8 0 0 1 5.8 -9.9 C5.8 -6.6 2.9 -4.1 0 0 Z" fill="#0b6423"/><text x="0.3" y="-6.6" font-size="9.2" text-anchor="middle" fill="#f4f8f4">L</text></g>
<circle cx="240.9" cy="87.1" r="9" fill="rgba(181,226,140,.62)"/><circle cx="240.9" cy="87.1" r="6.8" fill="rgba(110,204,57,.68)"/><text x="240.9" y="89.2" font-size="5.8" font-weight="bold" text-anchor="middle" fill="#222">4</text>
<circle cx="242.2" cy="165.5" r="9" fill="rgba(241,211,87,.62)"/><circle cx="242.2" cy="165.5" r="6.8" fill="rgba(240,194,12,.68)"/><text x="242.2" y="167.6" font-size="5.8" font-weight="bold" text-anchor="middle" fill="#222">15</text>
<circle cx="336.1" cy="168" r="9" fill="rgba(181,226,140,.62)"/><circle cx="336.1" cy="168" r="6.8" fill="rgba(110,204,57,.68)"/><text x="336.1" y="170.1" font-size="5.8" font-weight="bold" text-anchor="middle" fill="#222">4</text>
<circle cx="284.8" cy="219.4" r="9" fill="rgba(181,226,140,.62)"/><circle cx="284.8" cy="219.4" r="6.8" fill="rgba(110,204,57,.68)"/><text x="284.8" y="221.5" font-size="5.8" font-weight="bold" text-anchor="middle" fill="#222">2</text>
<circle cx="412.1" cy="213.1" r="9" fill="rgba(181,226,140,.62)"/><circle cx="412.1" cy="213.1" r="6.8" fill="rgba(110,204,57,.68)"/><text x="412.1" y="215.2" font-size="5.8" font-weight="bold" text-anchor="middle" fill="#222">2</text>
<circle cx="305.4" cy="257.8" r="9" fill="rgba(181,226,140,.62)"/><circle cx="305.4" cy="257.8" r="6.8" fill="rgba(110,204,57,.68)"/><text x="305.4" y="259.9" font-size="5.8" font-weight="bold" text-anchor="middle" fill="#222">3</text>
<circle cx="104.4" cy="245.8" r="9" fill="rgba(181,226,140,.62)"/><circle cx="104.4" cy="245.8" r="6.8" fill="rgba(110,204,57,.68)"/><text x="104.4" y="247.9" font-size="5.8" font-weight="bold" text-anchor="middle" fill="#222">2</text>
<circle cx="471.6" cy="241" r="9" fill="rgba(181,226,140,.62)"/><circle cx="471.6" cy="241" r="6.8" fill="rgba(110,204,57,.68)"/><text x="471.6" y="243.1" font-size="5.8" font-weight="bold" text-anchor="middle" fill="#222">7</text>
<circle cx="435.5" cy="306.3" r="9" fill="rgba(181,226,140,.62)"/><circle cx="435.5" cy="306.3" r="6.8" fill="rgba(110,204,57,.68)"/><text x="435.5" y="308.4" font-size="5.8" font-weight="bold" text-anchor="middle" fill="#222">6</text>
<circle cx="598.9" cy="143.4" r="9" fill="rgba(241,211,87,.62)"/><circle cx="598.9" cy="143.4" r="6.8" fill="rgba(240,194,12,.68)"/><text x="598.9" y="145.5" font-size="5.8" font-weight="bold" text-anchor="middle" fill="#222">11</text>
<circle cx="533.4" cy="200.5" r="9" fill="rgba(241,211,87,.62)"/><circle cx="533.4" cy="200.5" r="6.8" fill="rgba(240,194,12,.68)"/><text x="533.4" y="202.6" font-size="5.8" font-weight="bold" text-anchor="middle" fill="#222">61</text>
</svg>
<div class="abs" style="left:5.9px;top:5.1px;width:13.8px;height:29.2px;background:#fff;border-radius:2px;box-shadow:0 0 0 .9px rgba(0,0,0,.2)"><div class="abs" style="left:0;top:14.3px;width:13.8px;height:.6px;background:#d6d6d6"></div><svg class="abs" style="left:-.3px;top:0.3px" width="14.4" height="29" viewBox="0 0 14.4 29"><path d="M4.3 7.6 H10.1 M7.2 4.7 V10.5 M4.5 21.8 H9.9" stroke="#111" stroke-width="1.3"/></svg></div>
<div class="abs" style="left:804px;top:5px;width:20.3px;height:20.6px;background:#fff;border-radius:2.4px;box-shadow:0 0 0 .9px rgba(0,0,0,.22)"><svg class="abs" style="left:3.7px;top:3.8px" width="13" height="13" viewBox="0 0 13 13"><path d="M0.6 4.6 V8.2 L6.5 11.9 L12.4 8.2 V4.6 L6.5 8.2 Z" fill="#a6a6a6"/><path d="M0.6 5.8 L6.5 9.4 L12.4 5.8 M0.6 7 L6.5 10.6 L12.4 7" stroke="#bcbcbc" stroke-width=".35" fill="none"/><path d="M6.5 1 L0.6 4.6 L6.5 8.2 L12.4 4.6 Z" fill="#dedede"/></svg></div>
</div>
<div class="card" id="legend" style="left:23.2px;top:332px;width:451.4px;height:113.6px">
<div class="chead"><div class="ctitle" style="left:5.4px">Legend</div></div>
<div class="lg" style="left:139.6px;top:25.1px">Leased</div>
<div class="lg" style="left:225.8px;top:25.1px">Sublease</div>
<div class="lg" style="left:311.4px;top:25.1px">Owned</div>
<div class="lg" style="left:54.0px;top:43.7px">Active</div>
<svg class="abs" style="left:135.78px;top:45.58px" width="7.84" height="10.18" viewBox="0 0 7.4 9.6"><path d="M3.7 9.5 C1.9 7.2 0.2 5.5 0.2 3.6 A3.5 3.5 0 0 1 7.2 3.6 C7.2 5.5 5.5 7.2 3.7 9.5 Z" fill="#0b7028"/><text x="3.7" y="5.35" font-size="4.7" font-weight="bold" text-anchor="middle" fill="#fff" fill-opacity=".88" font-family="Liberation Sans">L</text></svg>
<svg class="abs" style="left:221.98px;top:45.58px" width="7.84" height="10.18" viewBox="0 0 7.4 9.6"><path d="M3.7 9.5 C1.9 7.2 0.2 5.5 0.2 3.6 A3.5 3.5 0 0 1 7.2 3.6 C7.2 5.5 5.5 7.2 3.7 9.5 Z" fill="#0b7028"/><text x="3.7" y="5.35" font-size="4.7" font-weight="bold" text-anchor="middle" fill="#fff" fill-opacity=".88" font-family="Liberation Sans">S</text></svg>
<svg class="abs" style="left:307.38px;top:45.58px" width="7.84" height="10.18" viewBox="0 0 7.4 9.6"><path d="M3.7 9.5 C1.9 7.2 0.2 5.5 0.2 3.6 A3.5 3.5 0 0 1 7.2 3.6 C7.2 5.5 5.5 7.2 3.7 9.5 Z" fill="#0b7028"/><text x="3.7" y="5.35" font-size="4.7" font-weight="bold" text-anchor="middle" fill="#fff" fill-opacity=".88" font-family="Liberation Sans">O</text></svg>
<div class="lg" style="left:54.0px;top:62.3px">Pending</div>
<svg class="abs" style="left:135.78px;top:64.18px" width="7.84" height="10.18" viewBox="0 0 7.4 9.6"><path d="M3.7 9.5 C1.9 7.2 0.2 5.5 0.2 3.6 A3.5 3.5 0 0 1 7.2 3.6 C7.2 5.5 5.5 7.2 3.7 9.5 Z" fill="#1768b8"/><text x="3.7" y="5.35" font-size="4.7" font-weight="bold" text-anchor="middle" fill="#fff" fill-opacity=".88" font-family="Liberation Sans">L</text></svg>
<svg class="abs" style="left:221.98px;top:64.18px" width="7.84" height="10.18" viewBox="0 0 7.4 9.6"><path d="M3.7 9.5 C1.9 7.2 0.2 5.5 0.2 3.6 A3.5 3.5 0 0 1 7.2 3.6 C7.2 5.5 5.5 7.2 3.7 9.5 Z" fill="#1768b8"/><text x="3.7" y="5.35" font-size="4.7" font-weight="bold" text-anchor="middle" fill="#fff" fill-opacity=".88" font-family="Liberation Sans">S</text></svg>
<svg class="abs" style="left:307.38px;top:64.18px" width="7.84" height="10.18" viewBox="0 0 7.4 9.6"><path d="M3.7 9.5 C1.9 7.2 0.2 5.5 0.2 3.6 A3.5 3.5 0 0 1 7.2 3.6 C7.2 5.5 5.5 7.2 3.7 9.5 Z" fill="#1768b8"/><text x="3.7" y="5.35" font-size="4.7" font-weight="bold" text-anchor="middle" fill="#fff" fill-opacity=".88" font-family="Liberation Sans">O</text></svg>
<div class="lg" style="left:54.0px;top:80.7px">Expired</div>
<svg class="abs" style="left:135.78px;top:82.88px" width="7.84" height="10.18" viewBox="0 0 7.4 9.6"><path d="M3.7 9.5 C1.9 7.2 0.2 5.5 0.2 3.6 A3.5 3.5 0 0 1 7.2 3.6 C7.2 5.5 5.5 7.2 3.7 9.5 Z" fill="#c3151d"/><text x="3.7" y="5.35" font-size="4.7" font-weight="bold" text-anchor="middle" fill="#fff" fill-opacity=".88" font-family="Liberation Sans">L</text></svg>
<svg class="abs" style="left:221.98px;top:82.88px" width="7.84" height="10.18" viewBox="0 0 7.4 9.6"><path d="M3.7 9.5 C1.9 7.2 0.2 5.5 0.2 3.6 A3.5 3.5 0 0 1 7.2 3.6 C7.2 5.5 5.5 7.2 3.7 9.5 Z" fill="#c3151d"/><text x="3.7" y="5.35" font-size="4.7" font-weight="bold" text-anchor="middle" fill="#fff" fill-opacity=".88" font-family="Liberation Sans">S</text></svg>
<svg class="abs" style="left:307.38px;top:82.88px" width="7.84" height="10.18" viewBox="0 0 7.4 9.6"><path d="M3.7 9.5 C1.9 7.2 0.2 5.5 0.2 3.6 A3.5 3.5 0 0 1 7.2 3.6 C7.2 5.5 5.5 7.2 3.7 9.5 Z" fill="#c3151d"/><text x="3.7" y="5.35" font-size="4.7" font-weight="bold" text-anchor="middle" fill="#fff" fill-opacity=".88" font-family="Liberation Sans">O</text></svg>
<div class="dot" style="left:355.1px;top:46.6px;background:#82f38f;box-shadow:0 0 1.2px #82f38f"></div>
<div class="ll" style="left:367.8px;top:46.0px">Small Cluster</div>
<div class="dot" style="left:355.1px;top:65.3px;background:#f5d46c;box-shadow:0 0 1.2px #f5d46c"></div>
<div class="ll" style="left:367.8px;top:64.7px">Medium Cluster</div>
<div class="dot" style="left:355.1px;top:83.9px;background:#f8aa72;box-shadow:0 0 1.2px #f8aa72"></div>
<div class="ll" style="left:367.8px;top:83.3px">Large Cluster</div>
<div class="abs" style="left:11.2px;top:101.4px;width:428.8px;height:.7px;background:#e9e9e9"></div>
</div>
<div class="card" id="vopt" style="left:484px;top:332px;width:369px;height:79.8px">
  <div class="chead"><div class="ctitle" style="left:5.2px">Viewing Options</div></div>
  <div id="sel"><span>Saved Filters</span>
    <svg class="abs" style="left:334.6px;top:5.7px" width="7" height="5" viewBox="0 0 7 5"><path d="M0.9 1 L3.5 3.6 L6.1 1" fill="none" stroke="#2b2b2b" stroke-width="1.25"/></svg>
  </div>
  <div id="chip"><span>All Active Pending US Leases</span>
    <svg class="abs" style="left:114.4px;top:5.4px" width="4.6" height="4.6" viewBox="0 0 4.6 4.6"><path d="M0.5 0.5 L4.1 4.1 M4.1 0.5 L0.5 4.1" stroke="#fff" stroke-width=".75"/></svg>
  </div>
</div>

<div id="ftr">
  <span style="left:66px">Copyright © 2023 Visual Lease LLC.</span>
  <span style="left:657px"><u>Terms of Use</u></span>
  <span style="left:730px"><u>Privacy Policy</u></span>
  <span style="left:803px"><u>Visual Lease</u></span>
</div>
</body>
</html>
